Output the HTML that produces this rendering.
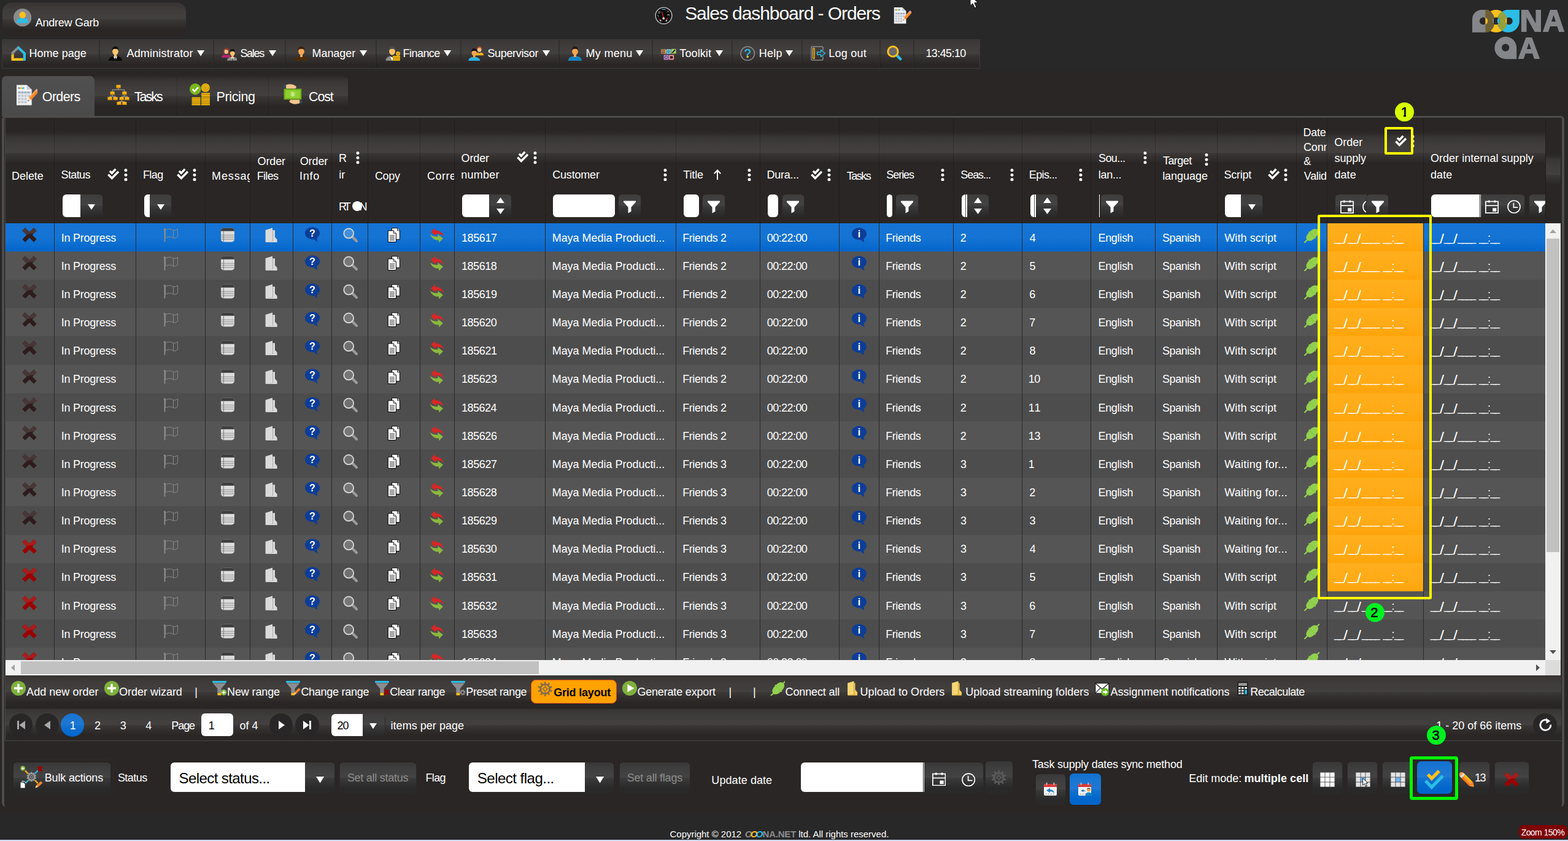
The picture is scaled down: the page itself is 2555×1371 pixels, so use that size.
<!DOCTYPE html>
<html lang="en"><head><meta charset="utf-8"><title>Sales dashboard - Orders</title>
<style>
*{box-sizing:border-box;margin:0;padding:0}
html,body{width:2555px;height:1371px;overflow:hidden;background:#282828}
body{position:relative;font-family:"Liberation Sans",sans-serif;color:#fff;font-size:18px}
div,svg{position:absolute}
.t{white-space:nowrap}
.hl{background-image:linear-gradient(to bottom,rgba(255,255,255,0) 0,rgba(255,255,255,.012) 5.5%,rgba(255,255,255,.07) 15%,rgba(255,255,255,.10) 30%,rgba(255,255,255,.12) 50%,rgba(255,255,255,.085) 50%,rgba(255,255,255,.04) 62%,rgba(255,255,255,0) 74%);background-repeat:no-repeat;background-position:50% 50%;background-size:100% 72px}
.btn{background-color:#2a2929;border-radius:7px;border:1px solid transparent}
.inp{background:#fff;border-radius:6px 0 0 6px}
.dm{width:120px;height:18px;font-size:18px;line-height:18px;white-space:nowrap}
.dm span{position:absolute;top:0}
.u{letter-spacing:-4.7px;top:-1px!important}
.m4{letter-spacing:-3.35px}
.m1,.m3{transform:scale(1.4,1.2);transform-origin:50% 2px}
.m0{left:0}.m1{left:16.4px}.m2{left:22.2px}.m3{left:38.4px}.m4{left:44.6px}.m5{left:79.2px}.m6{left:93.4px}.m7{left:97.9px}
svg text{font-family:"Liberation Sans",sans-serif}
</style></head>
<body>
<div style="left:0px;top:115px;width:2555px;height:1210px;background:#292625"></div>
<div style="left:0px;top:1369px;width:2555px;height:2px;background:#cddaf0"></div>
<div class="hl" style="left:4px;top:4px;width:299px;height:55px;border-radius:15px;background-color:#292625;background-position:50% 50%;background-size:100% 72px"></div>
<svg style="left:21.8px;top:13.8px" width="29.4" height="29.4" viewBox="0 0 30 30"><circle cx="15" cy="15" r="15" fill="#8a8b8f"/><circle cx="15" cy="10.6" r="5.4" fill="#fdc01e"/><path d="M5.6 24V21.5C5.6 18 8 16 11 16H19C22 16 24.4 18 24.4 21.5V24Z" fill="#2bbde6"/></svg>
<div class="t" style="left:57.7px;top:28px;font-size:18px;line-height:18px;letter-spacing:-0.25px;">Andrew Garb</div>
<svg style="left:1066.8px;top:11px" width="29" height="29" viewBox="0 0 30 30"><circle cx="15" cy="15" r="13.8" fill="#0c0c0c" stroke="#b4b4b4" stroke-width="1.6"/><circle cx="15" cy="15" r="10.6" fill="none" stroke="#555" stroke-width=".8" stroke-dasharray="1.4 2.2"/><path d="M11.6 8 14.6 19" stroke="#e02020" stroke-width="1.3"/><path d="M21.4 18.6 19.8 23" stroke="#e02020" stroke-width="1.2"/><path d="M7.6 20 9.6 23.4" stroke="#e02020" stroke-width="1.2"/><circle cx="14.8" cy="19.6" r="1.9" fill="#e8e8e8"/><circle cx="9.8" cy="23.4" r="1.4" fill="#ccc"/><circle cx="19.6" cy="23.4" r="1.4" fill="#ccc"/><circle cx="7.4" cy="9.6" r="1.5" fill="none" stroke="#ccc" stroke-width=".7"/><path d="M21 6.6 23.4 9M23.4 6.6 21 9" stroke="#ccc" stroke-width=".7"/><path d="M12 4.6H18" stroke="#6ab4e8" stroke-width="1.2"/><path d="M21 13.6H24.6" stroke="#ddd" stroke-width="1.2"/><path d="M5 14 6.6 17" stroke="#ddd" stroke-width=".8"/></svg>
<div class="t" style="left:1116.15px;top:7px;font-size:30px;line-height:30px;letter-spacing:-1.07px;">Sales dashboard - Orders</div>
<svg style="left:1456.4px;top:11.2px" width="28.4" height="28.4" viewBox="0 0 36 36"><path d="M1 1.4H18L26 9V35H1Z" fill="#f2f2f2"/><path d="M18 1.4V9H26Z" fill="#c9ced6"/><rect x="3.4" y="5.4" width="3.4" height="2.6" fill="#8b8c90"/><rect x="6.8" y="5.4" width="3.4" height="2.6" fill="#fdc01e"/><rect x="10.2" y="5.4" width="3.4" height="2.6" fill="#2bbde6"/><rect x="3.4" y="12.4" width="21" height="3.6" fill="#bfc6d0"/><g fill="#c3c8d0"><rect x="3.4" y="17.4" width="4" height="4"/><rect x="8.6" y="17.4" width="4" height="4"/><rect x="13.8" y="17.4" width="4" height="4"/><rect x="19" y="17.4" width="4" height="4"/><rect x="3.4" y="22.6" width="4" height="4"/><rect x="8.6" y="22.6" width="4" height="4"/><rect x="13.8" y="22.6" width="4" height="4"/><rect x="3.4" y="27.8" width="4" height="4"/><rect x="8.6" y="27.8" width="4" height="4"/><rect x="13.8" y="27.8" width="4" height="4"/></g><path d="M4.6 13.4H6.4M9.6 13.4H11.4M14.6 13.4H16.4M19.6 13.4H21.4" stroke="#5b82c4" stroke-width="1.6"/><g transform="rotate(42 27 20)"><rect x="24" y="8.6" width="6" height="17" fill="#f0852d"/><rect x="24" y="8.6" width="2" height="17" fill="#f7a65a"/><rect x="24" y="6" width="6" height="3.2" rx="1" fill="#f4a0a0"/><path d="M24 25.6H30L27 31.4Z" fill="#f3d2a0"/><path d="M26 29.4H28L27 31.4Z" fill="#444"/></g></svg>
<svg style="left:1579.5px;top:0px" width="19" height="14" viewBox="-1 0 19 14"><path d="M0 -8 0 9.4 3.9 5.7 7.2 12.8 10 11.6 6.8 4.6H12.4Z" fill="#fff" stroke="#111" stroke-width="1"/></svg>
<svg style="left:2399px;top:15.6px" width="152" height="82" viewBox="0 0 152 82"><text y="31" font-size="28" font-weight="bold" fill="#85868a"><tspan x="1">O</tspan><tspan x="28">O</tspan><tspan x="49">O</tspan></text><text x="77.5" y="35.1" font-size="51" font-weight="bold" fill="#85868a" stroke="#85868a" stroke-width="2" textLength="37" lengthAdjust="spacingAndGlyphs">N</text><text x="115" y="35.1" font-size="51" font-weight="bold" fill="#85868a" stroke="#85868a" stroke-width="2" textLength="35.2" lengthAdjust="spacingAndGlyphs">A</text><text x="44" y="72" font-size="24" font-weight="bold" fill="#85868a">Q</text><text x="74.8" y="79.2" font-size="48.8" font-weight="bold" fill="#85868a" stroke="#85868a" stroke-width="2" textLength="35.2" lengthAdjust="spacingAndGlyphs">A</text><path d="M0 36.8V15.5A15.5 15.5 0 0 1 15.5 0H22V36.8Z" fill="#85868a"/><circle cx="38.8" cy="18.4" r="18.4" fill="#fdc01e"/><path d="M76.8 0V18.4A18.4 18.4 0 0 1 58.4 36.8 18.4 18.4 0 0 1 40 18.4 18.4 18.4 0 0 1 58.4 0Z" fill="#2bbde6"/><path d="M21.3 0V36.8H26A18.4 18.4 0 0 0 36.3 18.4 18.4 18.4 0 0 0 26 0Z" fill="#6e5f34"/><path d="M48.6 2.8A18.4 18.4 0 0 0 40 18.4 18.4 18.4 0 0 0 48.6 34 18.4 18.4 0 0 0 57.2 18.4 18.4 18.4 0 0 0 48.6 2.8Z" fill="#95a03d"/><circle cx="17.9" cy="18.2" r="6" fill="#282828"/><circle cx="38.8" cy="18.2" r="6" fill="#282828"/><circle cx="59.7" cy="18.2" r="6" fill="#282828"/><path d="M21.3 12.6A6 6 0 0 1 21.3 23.8Z" fill="#fdc01e"/><path d="M35 13.6A6 6 0 0 0 35 22.8Z" fill="#85868a"/><path d="M42.4 13.5A6 6 0 0 1 42.4 22.9 8 8 0 0 1 42.4 13.5Z" fill="#2bbde6"/><path d="M56.4 13.2A6 6 0 0 0 56.4 23.2Z" fill="#fdc01e"/><path d="M72.2 80.2H54.6A18.2 18.2 0 0 1 36.4 62 18.2 18.2 0 0 1 54.6 43.8 18.2 18.2 0 0 1 72.2 62Z" fill="#85868a"/><circle cx="54.2" cy="61.6" r="6.1" fill="#282828"/></svg>
<div class="hl" style="left:3px;top:64px;width:1594px;height:48px;border:1px solid #3b3a3a;background-color:#292625;background-size:100% 72px"></div>
<div style="left:160.7px;top:65px;width:1px;height:46px;background:#302e2e"></div>
<div style="left:161.7px;top:65px;width:1px;height:46px;background:rgba(0,0,0,.18)"></div>
<div style="left:346.7px;top:65px;width:1px;height:46px;background:#302e2e"></div>
<div style="left:347.7px;top:65px;width:1px;height:46px;background:rgba(0,0,0,.18)"></div>
<div style="left:463.9px;top:65px;width:1px;height:46px;background:#302e2e"></div>
<div style="left:464.9px;top:65px;width:1px;height:46px;background:rgba(0,0,0,.18)"></div>
<div style="left:612px;top:65px;width:1px;height:46px;background:#302e2e"></div>
<div style="left:613px;top:65px;width:1px;height:46px;background:rgba(0,0,0,.18)"></div>
<div style="left:749.8px;top:65px;width:1px;height:46px;background:#302e2e"></div>
<div style="left:750.8px;top:65px;width:1px;height:46px;background:rgba(0,0,0,.18)"></div>
<div style="left:910px;top:65px;width:1px;height:46px;background:#302e2e"></div>
<div style="left:911px;top:65px;width:1px;height:46px;background:rgba(0,0,0,.18)"></div>
<div style="left:1061.7px;top:65px;width:1px;height:46px;background:#302e2e"></div>
<div style="left:1062.7px;top:65px;width:1px;height:46px;background:rgba(0,0,0,.18)"></div>
<div style="left:1192.1px;top:65px;width:1px;height:46px;background:#302e2e"></div>
<div style="left:1193.1px;top:65px;width:1px;height:46px;background:rgba(0,0,0,.18)"></div>
<div style="left:1305.9px;top:65px;width:1px;height:46px;background:#302e2e"></div>
<div style="left:1306.9px;top:65px;width:1px;height:46px;background:rgba(0,0,0,.18)"></div>
<div style="left:1433.3px;top:65px;width:1px;height:46px;background:#302e2e"></div>
<div style="left:1434.3px;top:65px;width:1px;height:46px;background:rgba(0,0,0,.18)"></div>
<div style="left:1488.2px;top:65px;width:1px;height:46px;background:#302e2e"></div>
<div style="left:1489.2px;top:65px;width:1px;height:46px;background:rgba(0,0,0,.18)"></div>
<svg style="left:17.6px;top:74.6px" width="24.5" height="24.5" viewBox="0 0 24.6 24.6"><path d="M.4 10.6 10.8 .8 12.6 .4 14.6 2.4 4.4 12.4 .4 15.4Z" fill="#8b8c90"/><path d="M12.6 .4 24.2 11.4V22.6C24.2 23.6 23.6 24.2 22.6 24.2H19.8V13L11 4.4 10.8 .8Z" fill="#2bbde6"/><path d="M.4 15.4 4.6 12.2V19.8H19.8V24.2H2C1 24.2 .4 23.6 .4 22.6Z" fill="#fdc01e"/></svg>
<div class="t" style="left:47.56px;top:78px;font-size:18px;line-height:18px;letter-spacing:0.02px;">Home page</div>
<svg style="left:175.8px;top:75px" width="24" height="24" viewBox="0 0 24 24"><path d="M1 24C1 19.5 4.5 17.6 8.6 16.6L12 18.6 15.4 16.6C19.5 17.6 23 19.5 23 24Z" fill="#0a0a0a"/><path d="M8.6 16.8 12 24 15.4 16.8 12 18.4Z" fill="#fff"/><path d="M11.3 19 12.7 19 13.2 24H10.8Z" fill="#111"/><rect x="10" y="13" width="4" height="5" fill="#f9c66f"/><ellipse cx="12" cy="8.6" rx="4.9" ry="6.2" fill="#f9c66f"/><path d="M6.9 8.2C6.2 3.5 8.5 .6 12 .6 15.5 .6 17.8 3.5 17.1 8.2 16.6 5.8 15.6 4.8 12 4.8 8.4 4.8 7.4 5.8 6.9 8.2Z" fill="#111"/></svg>
<div class="t" style="left:206.5px;top:78px;font-size:18px;line-height:18px;letter-spacing:0.16px;">Administrator</div>
<svg style="left:320.8px;top:82px" width="12.2" height="9.6" viewBox="0 0 12.2 9.6"><path d="M0 0H12.2L6.1 9.6Z" fill="#fff"/></svg>
<svg style="left:361.4px;top:75px" width="25" height="24" viewBox="0 0 25 24"><g transform="translate(-.6 2.2) scale(.7)"><path d="M1 24C1 19.5 4.5 17.6 8.6 16.6L12 18.6 15.4 16.6C19.5 17.6 23 19.5 23 24Z" fill="#b5256b"/><path d="M5 15C3.6 6 7 .6 12 .6 17 .6 20.4 6 19 15Z" fill="#8a3a2c"/><ellipse cx="12" cy="9.6" rx="4.6" ry="5.8" fill="#f6c18a"/><path d="M7 8C8 5 13 4.4 17 8 16.4 3.6 14 2.6 12 2.6 9.4 2.6 7.4 4 7 8Z" fill="#8a3a2c"/></g><g transform="translate(8.2 4.6) scale(.8)"><path d="M1 24C1 19.5 4.5 17.6 8.6 16.6L12 18.6 15.4 16.6C19.5 17.6 23 19.5 23 24Z" fill="#8f8f8f"/><path d="M8.6 16.8 12 24 15.4 16.8 12 18.4Z" fill="#fff"/><path d="M11.3 19 12.7 19 13.2 24H10.8Z" fill="#444"/><rect x="10" y="13" width="4" height="5" fill="#f6c16d"/><ellipse cx="12" cy="8.6" rx="4.9" ry="6.2" fill="#f6c16d"/><path d="M6.9 8.2C6.2 3.5 8.5 .6 12 .6 15.5 .6 17.8 3.5 17.1 8.2 16.6 5.8 15.6 4.8 12 4.8 8.4 4.8 7.4 5.8 6.9 8.2Z" fill="#111"/></g></svg>
<div class="t" style="left:391.39px;top:78px;font-size:18px;line-height:18px;letter-spacing:-1.28px;">Sales</div>
<svg style="left:437.8px;top:82px" width="12.2" height="9.6" viewBox="0 0 12.2 9.6"><path d="M0 0H12.2L6.1 9.6Z" fill="#fff"/></svg>
<svg style="left:478.6px;top:75px" width="24" height="24" viewBox="0 0 24 24"><path d="M1 24C1 19.5 4.5 17.6 8.6 16.6L12 18.6 15.4 16.6C19.5 17.6 23 19.5 23 24Z" fill="#4a2c0a"/><rect x="10" y="13" width="4" height="5" fill="#f2a654"/><ellipse cx="12" cy="8.6" rx="4.9" ry="6.2" fill="#f2a654"/><path d="M6.9 8.2C6.2 3.5 8.5 .6 12 .6 15.5 .6 17.8 3.5 17.1 8.2 16.6 5.8 15.6 4.8 12 4.8 8.4 4.8 7.4 5.8 6.9 8.2Z" fill="#3b2211"/></svg>
<div class="t" style="left:508.56px;top:78px;font-size:18px;line-height:18px;letter-spacing:-0.07px;">Manager</div>
<svg style="left:586.1px;top:82px" width="12.2" height="9.6" viewBox="0 0 12.2 9.6"><path d="M0 0H12.2L6.1 9.6Z" fill="#fff"/></svg>
<svg style="left:627.6px;top:75px" width="24" height="24" viewBox="0 0 24 24"><path d="M.6 24C.6 19.5 3.5 17.6 7.6 16.6L11 18.6 14.4 16.6C18.5 17.6 21 19.5 21 24Z" fill="#8a8a8a"/><path d="M7.6 16.8 11 24 14.4 16.8 11 18.4Z" fill="#fff"/><ellipse cx="11" cy="8.6" rx="4.9" ry="6.2" fill="#f6c16d"/><path d="M5.9 8.2C5.2 3.5 7.5 .6 11 .6 14.5 .6 16.8 3.5 16.1 8.2 15.6 5.8 14.6 4.8 11 4.8 7.4 4.8 6.4 5.8 5.9 8.2Z" fill="#4a4a4a"/><rect x="12" y="16" width="12" height="8" fill="#e8b10f"/><path d="M12 18.6H24M12 21.2H24" stroke="#b98500" stroke-width=".9"/><circle cx="20.6" cy="12.4" r="3.4" fill="#f3c11c"/><circle cx="20.6" cy="12.4" r="1.6" fill="#c99400"/></svg>
<div class="t" style="left:656.56px;top:78px;font-size:18px;line-height:18px;letter-spacing:-0.54px;">Finance</div>
<svg style="left:723.2px;top:82px" width="12.2" height="9.6" viewBox="0 0 12.2 9.6"><path d="M0 0H12.2L6.1 9.6Z" fill="#fff"/></svg>
<svg style="left:763px;top:75px" width="25" height="24" viewBox="0 0 25 24"><g transform="translate(10.5 0) scale(.64)"><path d="M1 24C1 19.5 4.5 17.6 8.6 16.6L12 18.6 15.4 16.6C19.5 17.6 23 19.5 23 24Z" fill="#f2b31d"/><ellipse cx="12" cy="9" rx="5" ry="6.2" fill="#f6c18a"/><path d="M5.6 13C4.6 5 7.5 .6 12 .6 16.5 .6 19.4 5 18.4 13 17.4 7 16 5.2 12 5.2 8 5.2 6.6 7 5.6 13Z" fill="#b3542e"/></g><g transform="translate(-.6 3.6) scale(.86)"><path d="M1 24C1 19.5 4.5 17.6 8.6 16.6L12 18.6 15.4 16.6C19.5 17.6 23 19.5 23 24Z" fill="#27b5e3"/><rect x="10" y="13" width="4" height="5" fill="#f2a654"/><ellipse cx="12" cy="8.6" rx="4.9" ry="6.2" fill="#f2a654"/><path d="M6.9 8.2C6.2 3.5 8.5 .6 12 .6 15.5 .6 17.8 3.5 17.1 8.2 16.6 5.8 15.6 4.8 12 4.8 8.4 4.8 7.4 5.8 6.9 8.2Z" fill="#111"/></g></svg>
<div class="t" style="left:794.39px;top:78px;font-size:18px;line-height:18px;letter-spacing:-0.33px;">Supervisor</div>
<svg style="left:883.8px;top:82px" width="12.2" height="9.6" viewBox="0 0 12.2 9.6"><path d="M0 0H12.2L6.1 9.6Z" fill="#fff"/></svg>
<svg style="left:925px;top:75px" width="24" height="24" viewBox="0 0 24 24"><path d="M1 24C1 19.5 4.5 17.6 8.6 16.6L12 18.6 15.4 16.6C19.5 17.6 23 19.5 23 24Z" fill="#1583c4"/><rect x="10" y="13" width="4" height="5" fill="#f2a654"/><ellipse cx="12" cy="8.6" rx="4.9" ry="6.2" fill="#f2a654"/><path d="M6.9 8.2C6.2 3.5 8.5 .6 12 .6 15.5 .6 17.8 3.5 17.1 8.2 16.6 5.8 15.6 4.8 12 4.8 8.4 4.8 7.4 5.8 6.9 8.2Z" fill="#2a1a10"/></svg>
<div class="t" style="left:954.56px;top:78px;font-size:18px;line-height:18px;letter-spacing:0.29px;">My menu</div>
<svg style="left:1036.2px;top:82px" width="12.2" height="9.6" viewBox="0 0 12.2 9.6"><path d="M0 0H12.2L6.1 9.6Z" fill="#fff"/></svg>
<svg style="left:1076.6px;top:77.5px" width="25" height="22" viewBox="0 0 25 22"><rect x=".4" y="2.2" width="7.6" height="7.6" rx="1" fill="#f2a45a"/><rect x="8.6" y="2.2" width="7.6" height="7.6" rx="1" fill="#7fd3e6"/><rect x="16.8" y="1.8" width="7.8" height="7.6" rx="1" fill="#a6d65a"/><path d="M18.4 8 23 3.2" stroke="#111" stroke-width="2"/><rect x="4.6" y="11.4" width="7.6" height="8" rx="1" fill="#b48ad6"/><circle cx="8.4" cy="15.4" r="2.2" fill="none" stroke="#333" stroke-width=".9"/><rect x="12.8" y="11.4" width="8.4" height="8" rx="1" fill="#f08a9a"/><rect x="14.8" y="13.6" width="4.4" height="3.8" fill="#111"/><rect x="2" y="3.6" width="3.8" height="5" fill="none" stroke="#333" stroke-width=".8"/><path d="M2.6 5.4H5.2M2.6 7H5.2" stroke="#333" stroke-width=".7"/><circle cx="12.4" cy="6" r="2" fill="none" stroke="#2a6f80" stroke-width=".8"/><path d="M10 6H14.8M12.4 3.6V8.4" stroke="#2a6f80" stroke-width=".6"/></svg>
<div class="t" style="left:1107.34px;top:78px;font-size:18px;line-height:18px;letter-spacing:0.1px;">Toolkit</div>
<svg style="left:1166px;top:82px" width="12.2" height="9.6" viewBox="0 0 12.2 9.6"><path d="M0 0H12.2L6.1 9.6Z" fill="#fff"/></svg>
<svg style="left:1206.4px;top:74.8px" width="24.5" height="24.5" viewBox="0 0 24 24"><circle cx="12" cy="12" r="11" fill="none" stroke="#8b8c90" stroke-width="1.4"/><text x="12" y="18.4" font-size="19" fill="#2bbde6" stroke="#2bbde6" stroke-width=".4" text-anchor="middle">?</text><circle cx="12" cy="17.2" r="1.7" fill="#fdc01e"/></svg>
<div class="t" style="left:1236.66px;top:78px;font-size:18px;line-height:18px;letter-spacing:0.26px;">Help</div>
<svg style="left:1280px;top:82px" width="12.2" height="9.6" viewBox="0 0 12.2 9.6"><path d="M0 0H12.2L6.1 9.6Z" fill="#fff"/></svg>
<svg style="left:1320.6px;top:75px" width="24.5" height="24" viewBox="0 0 24.5 24"><path d="M20 7V2.6C20 1.6 19.4 1 18.4 1H2.6C1.6 1 1 1.6 1 2.6V21.4C1 22.4 1.6 23 2.6 23H18.4C19.4 23 20 22.4 20 21.4V17" fill="none" stroke="#8b8c90" stroke-width="1.5"/><rect x="3.6" y="3.4" width="2.6" height="17.2" rx="1" fill="none" stroke="#fdc01e" stroke-width="1.3"/><path d="M10.6 10H16.6V6.4L23.4 12 16.6 17.6V14H10.6Z" fill="none" stroke="#2bbde6" stroke-width="1.4" stroke-linejoin="round"/></svg>
<div class="t" style="left:1350.36px;top:78px;font-size:18px;line-height:18px;letter-spacing:0.23px;">Log out</div>
<svg style="left:1445.4px;top:74px" width="25" height="25" viewBox="0 0 25 25"><path d="M16.6 16.6 22.2 22.2" stroke="#2bbde6" stroke-width="4.4" stroke-linecap="round"/><circle cx="10" cy="10" r="8.2" fill="rgba(255,255,255,.22)" stroke="#fdc01e" stroke-width="3"/></svg>
<div class="t" style="left:1508.45px;top:78px;font-size:18px;line-height:18px;letter-spacing:-0.59px;">13:45:10</div>
<div class="hl" style="left:154px;top:124px;width:413px;height:65px;border-radius:0 6px 0 0;background-color:#292625;background-size:100% 72px;background-position:50% 50%"></div>
<div style="left:287.7px;top:126px;width:1px;height:63px;background:rgba(0,0,0,.15)"></div>
<div style="left:436.8px;top:126px;width:1px;height:63px;background:rgba(0,0,0,.15)"></div>
<div style="left:3px;top:124px;width:151px;height:66px;border-radius:7px 7px 0 0;background:linear-gradient(to bottom,#505050,#4a4a4a)"></div>
<svg style="left:25.6px;top:136.6px" width="35.6" height="35.6" viewBox="0 0 36 36"><path d="M1 1.4H18L26 9V35H1Z" fill="#f2f2f2"/><path d="M18 1.4V9H26Z" fill="#c9ced6"/><rect x="3.4" y="5.4" width="3.4" height="2.6" fill="#8b8c90"/><rect x="6.8" y="5.4" width="3.4" height="2.6" fill="#fdc01e"/><rect x="10.2" y="5.4" width="3.4" height="2.6" fill="#2bbde6"/><rect x="3.4" y="12.4" width="21" height="3.6" fill="#bfc6d0"/><g fill="#c3c8d0"><rect x="3.4" y="17.4" width="4" height="4"/><rect x="8.6" y="17.4" width="4" height="4"/><rect x="13.8" y="17.4" width="4" height="4"/><rect x="19" y="17.4" width="4" height="4"/><rect x="3.4" y="22.6" width="4" height="4"/><rect x="8.6" y="22.6" width="4" height="4"/><rect x="13.8" y="22.6" width="4" height="4"/><rect x="3.4" y="27.8" width="4" height="4"/><rect x="8.6" y="27.8" width="4" height="4"/><rect x="13.8" y="27.8" width="4" height="4"/></g><path d="M4.6 13.4H6.4M9.6 13.4H11.4M14.6 13.4H16.4M19.6 13.4H21.4" stroke="#5b82c4" stroke-width="1.6"/><g transform="rotate(42 27 20)"><rect x="24" y="8.6" width="6" height="17" fill="#f0852d"/><rect x="24" y="8.6" width="2" height="17" fill="#f7a65a"/><rect x="24" y="6" width="6" height="3.2" rx="1" fill="#f4a0a0"/><path d="M24 25.6H30L27 31.4Z" fill="#f3d2a0"/><path d="M26 29.4H28L27 31.4Z" fill="#444"/></g></svg>
<div class="t" style="left:68.83px;top:148px;font-size:21.5px;line-height:21.5px;letter-spacing:-0.67px;">Orders</div>
<svg style="left:175px;top:137.6px" width="36" height="33.4" viewBox="0 0 36 34"><path d="M18 5V8.4M8 13V8.4H28V13M8 17V19.4M3.6 22V19.4H13V22M28 17V19.4M23.4 22V19.4H32.4V22M23.4 25V28M19 31V28H28V31" fill="none" stroke="#a9a9a9" stroke-width="1"/><rect x="14.4" y="0.3999999999999999" width="7.2" height="5.2" fill="#f5b318"/><rect x="14.4" y="4.2" width="7.2" height="1.4" fill="#d28f00"/><rect x="4.4" y="11.4" width="7.2" height="5.2" fill="#f5b318"/><rect x="4.4" y="15.2" width="7.2" height="1.4" fill="#d28f00"/><rect x="24.4" y="11.4" width="7.2" height="5.2" fill="#f5b318"/><rect x="24.4" y="15.2" width="7.2" height="1.4" fill="#d28f00"/><rect x="0.19999999999999973" y="20.4" width="7.2" height="5.2" fill="#f5b318"/><rect x="0.19999999999999973" y="24.2" width="7.2" height="1.4" fill="#d28f00"/><rect x="9.4" y="20.4" width="7.2" height="5.2" fill="#f5b318"/><rect x="9.4" y="24.2" width="7.2" height="1.4" fill="#d28f00"/><rect x="19.799999999999997" y="20.4" width="7.2" height="5.2" fill="#f5b318"/><rect x="19.799999999999997" y="24.2" width="7.2" height="1.4" fill="#d28f00"/><rect x="28.6" y="20.4" width="7.2" height="5.2" fill="#f5b318"/><rect x="28.6" y="24.2" width="7.2" height="1.4" fill="#d28f00"/><rect x="15.4" y="28.4" width="7.2" height="5.2" fill="#f5b318"/><rect x="15.4" y="32.2" width="7.2" height="1.4" fill="#d28f00"/><rect x="24.4" y="28.4" width="7.2" height="5.2" fill="#f5b318"/><rect x="24.4" y="32.2" width="7.2" height="1.4" fill="#d28f00"/></svg>
<div class="t" style="left:218.67px;top:148px;font-size:21.5px;line-height:21.5px;letter-spacing:-1.94px;">Tasks</div>
<svg style="left:309px;top:136px" width="33" height="36" viewBox="0 0 33 36"><rect x="3.6" y="32.6" width="14" height="3" rx=".6" fill="#f2b90f"/><rect x="3.6" y="34.5" width="14" height="1.1" fill="#c28e00"/><rect x="3.6" y="29.200000000000003" width="14" height="3" rx=".6" fill="#f2b90f"/><rect x="3.6" y="31.1" width="14" height="1.1" fill="#c28e00"/><rect x="3.6" y="25.8" width="14" height="3" rx=".6" fill="#f2b90f"/><rect x="3.6" y="27.7" width="14" height="1.1" fill="#c28e00"/><rect x="3.6" y="22.400000000000002" width="14" height="3" rx=".6" fill="#f2b90f"/><rect x="3.6" y="24.3" width="14" height="1.1" fill="#c28e00"/><rect x="19" y="32.6" width="14" height="3" rx=".6" fill="#f2b90f"/><rect x="19" y="34.5" width="14" height="1.1" fill="#c28e00"/><rect x="19" y="29.200000000000003" width="14" height="3" rx=".6" fill="#f2b90f"/><rect x="19" y="31.1" width="14" height="1.1" fill="#c28e00"/><rect x="19" y="25.8" width="14" height="3" rx=".6" fill="#f2b90f"/><rect x="19" y="27.7" width="14" height="1.1" fill="#c28e00"/><rect x="19" y="22.400000000000002" width="14" height="3" rx=".6" fill="#f2b90f"/><rect x="19" y="24.3" width="14" height="1.1" fill="#c28e00"/><rect x="19" y="19.0" width="14" height="3" rx=".6" fill="#f2b90f"/><rect x="19" y="20.9" width="14" height="1.1" fill="#c28e00"/><rect x="19" y="15.600000000000001" width="14" height="3" rx=".6" fill="#f2b90f"/><rect x="19" y="17.5" width="14" height="1.1" fill="#c28e00"/><circle cx="25.8" cy="7" r="7" fill="#f2b90f"/><circle cx="25.8" cy="7" r="4.8" fill="none" stroke="#c28e00" stroke-width="1"/><text x="25.8" y="10" font-size="8" font-weight="bold" fill="#c28e00" text-anchor="middle">$</text><circle cx="9.2" cy="9.2" r="9.2" fill="#7ab51d"/><path d="M4.6 9.4 8 12.8 14 6.4" fill="none" stroke="#fff" stroke-width="2.6"/></svg>
<div class="t" style="left:352.58px;top:148px;font-size:21.5px;line-height:21.5px;letter-spacing:-0.37px;">Pricing</div>
<svg style="left:458.6px;top:137.2px" width="36.4" height="33.2" viewBox="0 0 36 33"><path d="M3 1H7V6H3Z" fill="#33475b"/><path d="M7 1.6C13 -.6 19 0 24 4.4L22 7.5H7Z" fill="#f3c58d"/><path d="M33 31.6H29V26.6H33Z" fill="#33475b"/><path d="M29 31C23 33.4 17 33 12 28.6L14 25.4H29Z" fill="#f3c58d"/><rect x="3.4" y="7.6" width="28.6" height="17.6" fill="#6fae1e"/><rect x="5.6" y="9.8" width="24.2" height="13.2" fill="#8fd02f"/><circle cx="17.7" cy="16.4" r="4.6" fill="#a6dc55"/><text x="17.7" y="19.2" font-size="8" fill="#e8f7cf" text-anchor="middle">$</text></svg>
<div class="t" style="left:503.03px;top:148px;font-size:21.5px;line-height:21.5px;letter-spacing:-1.13px;">Cost</div>
<div style="left:3px;top:189px;width:2545.6px;height:1126px;border:solid #4c4c4c;border-width:3px 4px 0 4px;border-radius:6px;background:#292625"></div>
<div style="left:8px;top:193px;width:1px;height:908px;background:#484646"></div>
<div style="left:9px;top:192px;width:2535px;height:172px;background:#292625"></div>
<div class="hl" style="left:9px;top:193px;width:2509px;height:112px;"></div>
<div class="hl" style="left:2519px;top:193px;width:24px;height:171px;background-position:50% 56px"></div>
<div style="left:88px;top:193px;width:1px;height:171px;background:rgba(0,0,0,.22)"></div>
<div style="left:221px;top:193px;width:1px;height:171px;background:rgba(0,0,0,.22)"></div>
<div style="left:334px;top:193px;width:1px;height:171px;background:rgba(0,0,0,.22)"></div>
<div style="left:407px;top:193px;width:1px;height:171px;background:rgba(0,0,0,.22)"></div>
<div style="left:477px;top:193px;width:1px;height:171px;background:rgba(0,0,0,.22)"></div>
<div style="left:540px;top:193px;width:1px;height:171px;background:rgba(0,0,0,.22)"></div>
<div style="left:599px;top:193px;width:1px;height:171px;background:rgba(0,0,0,.22)"></div>
<div style="left:684px;top:193px;width:1px;height:171px;background:rgba(0,0,0,.22)"></div>
<div style="left:740px;top:193px;width:1px;height:171px;background:rgba(0,0,0,.22)"></div>
<div style="left:888px;top:193px;width:1px;height:171px;background:rgba(0,0,0,.22)"></div>
<div style="left:1101px;top:193px;width:1px;height:171px;background:rgba(0,0,0,.22)"></div>
<div style="left:1238px;top:193px;width:1px;height:171px;background:rgba(0,0,0,.22)"></div>
<div style="left:1367px;top:193px;width:1px;height:171px;background:rgba(0,0,0,.22)"></div>
<div style="left:1432px;top:193px;width:1px;height:171px;background:rgba(0,0,0,.22)"></div>
<div style="left:1553px;top:193px;width:1px;height:171px;background:rgba(0,0,0,.22)"></div>
<div style="left:1665px;top:193px;width:1px;height:171px;background:rgba(0,0,0,.22)"></div>
<div style="left:1777px;top:193px;width:1px;height:171px;background:rgba(0,0,0,.22)"></div>
<div style="left:1882px;top:193px;width:1px;height:171px;background:rgba(0,0,0,.22)"></div>
<div style="left:1983px;top:193px;width:1px;height:171px;background:rgba(0,0,0,.22)"></div>
<div style="left:2112px;top:193px;width:1px;height:171px;background:rgba(0,0,0,.22)"></div>
<div style="left:2162px;top:193px;width:1px;height:171px;background:rgba(0,0,0,.22)"></div>
<div style="left:2319px;top:193px;width:1px;height:171px;background:rgba(0,0,0,.22)"></div>
<div style="left:2518px;top:193px;width:1px;height:171px;background:rgba(0,0,0,.22)"></div>
<div class="t" style="left:19.06px;top:278px;font-size:18px;line-height:18px;letter-spacing:-0.06px;">Delete</div>
<div class="t" style="left:99.49px;top:276px;font-size:18px;line-height:18px;letter-spacing:-0.6px;">Status</div>
<svg style="left:174.9px;top:273.8px" width="19.4" height="19.4" viewBox="0 0 19.4 19.4"><path d="M3.9 4.8 7.3 8.2 13.4 1.6" fill="none" stroke="#fff" stroke-width="3.5"/><path d="M1.4 10.6 7.3 16.5 18 5.8" fill="none" stroke="#fff" stroke-width="3.5"/></svg>
<svg style="left:201.6px;top:274.7px" width="6" height="20.4" viewBox="0 0 6 20.4"><circle cx="3" cy="2.6" r="2.5" fill="#fff"/><circle cx="3" cy="10.2" r="2.5" fill="#fff"/><circle cx="3" cy="17.8" r="2.5" fill="#fff"/></svg>
<div class="t" style="left:232.96px;top:276px;font-size:18px;line-height:18px;letter-spacing:-0.61px;">Flag</div>
<svg style="left:287.9px;top:273.8px" width="19.4" height="19.4" viewBox="0 0 19.4 19.4"><path d="M3.9 4.8 7.3 8.2 13.4 1.6" fill="none" stroke="#fff" stroke-width="3.5"/><path d="M1.4 10.6 7.3 16.5 18 5.8" fill="none" stroke="#fff" stroke-width="3.5"/></svg>
<svg style="left:314px;top:274.7px" width="6" height="20.4" viewBox="0 0 6 20.4"><circle cx="3" cy="2.6" r="2.5" fill="#fff"/><circle cx="3" cy="10.2" r="2.5" fill="#fff"/><circle cx="3" cy="17.8" r="2.5" fill="#fff"/></svg>
<div style="left:335px;top:270px;width:72px;height:30px;overflow:hidden"><div class="t" style="left:10.06px;top:8px;font-size:18px;line-height:18px;letter-spacing:0.86px;">Messages</div></div>
<div class="t" style="left:419.49px;top:254px;font-size:18px;line-height:18px;letter-spacing:-0.1px;">Order</div>
<div class="t" style="left:418.86px;top:278px;font-size:18px;line-height:18px;letter-spacing:-0.74px;">Files</div>
<div class="t" style="left:488.69px;top:254px;font-size:18px;line-height:18px;letter-spacing:-0.1px;">Order</div>
<div class="t" style="left:487.88px;top:278px;font-size:18px;line-height:18px;letter-spacing:0.78px;">Info</div>
<div style="left:541px;top:240px;width:58px;height:60px;overflow:hidden"><div class="t" style="left:10.96px;top:9px;font-size:18px;line-height:18px;">R</div><div class="t" style="left:11.23px;top:36px;font-size:18px;line-height:18px;">ir</div></div>
<svg style="left:579.8px;top:247.2px" width="6" height="20.4" viewBox="0 0 6 20.4"><circle cx="3" cy="2.6" r="2.5" fill="#fff"/><circle cx="3" cy="10.2" r="2.5" fill="#fff"/><circle cx="3" cy="17.8" r="2.5" fill="#fff"/></svg>
<div class="t" style="left:611px;top:278px;font-size:18px;line-height:18px;letter-spacing:-0.38px;">Copy</div>
<div style="left:685px;top:270px;width:55px;height:30px;overflow:hidden"><div class="t" style="left:10.9px;top:8px;font-size:18px;line-height:18px;letter-spacing:0.5px;">Correct</div></div>
<div class="t" style="left:751.49px;top:249px;font-size:18px;line-height:18px;letter-spacing:-0.1px;">Order</div>
<div class="t" style="left:751.13px;top:276px;font-size:18px;line-height:18px;letter-spacing:0.28px;">number</div>
<svg style="left:841.9px;top:245.8px" width="19.4" height="19.4" viewBox="0 0 19.4 19.4"><path d="M3.9 4.8 7.3 8.2 13.4 1.6" fill="none" stroke="#fff" stroke-width="3.5"/><path d="M1.4 10.6 7.3 16.5 18 5.8" fill="none" stroke="#fff" stroke-width="3.5"/></svg>
<svg style="left:868.5px;top:247.2px" width="6" height="20.4" viewBox="0 0 6 20.4"><circle cx="3" cy="2.6" r="2.5" fill="#fff"/><circle cx="3" cy="10.2" r="2.5" fill="#fff"/><circle cx="3" cy="17.8" r="2.5" fill="#fff"/></svg>
<div class="t" style="left:900.2px;top:276px;font-size:18px;line-height:18px;letter-spacing:-0.19px;">Customer</div>
<svg style="left:1081.2px;top:274.7px" width="6" height="20.4" viewBox="0 0 6 20.4"><circle cx="3" cy="2.6" r="2.5" fill="#fff"/><circle cx="3" cy="10.2" r="2.5" fill="#fff"/><circle cx="3" cy="17.8" r="2.5" fill="#fff"/></svg>
<div class="t" style="left:1113.24px;top:276px;font-size:18px;line-height:18px;letter-spacing:-0.14px;">Title</div>
<svg style="left:1162.6px;top:276px" width="12" height="17" viewBox="0 0 12 17"><path d="M6 0 12 6.4 10.6 7.8 7 4.2V17H5V4.2L1.4 7.8 0 6.4Z" fill="#fff"/></svg>
<svg style="left:1218.3px;top:274.7px" width="6" height="20.4" viewBox="0 0 6 20.4"><circle cx="3" cy="2.6" r="2.5" fill="#fff"/><circle cx="3" cy="10.2" r="2.5" fill="#fff"/><circle cx="3" cy="17.8" r="2.5" fill="#fff"/></svg>
<div class="t" style="left:1249.56px;top:276px;font-size:18px;line-height:18px;letter-spacing:-0.27px;">Dura...</div>
<svg style="left:1321.3px;top:273.8px" width="19.4" height="19.4" viewBox="0 0 19.4 19.4"><path d="M3.9 4.8 7.3 8.2 13.4 1.6" fill="none" stroke="#fff" stroke-width="3.5"/><path d="M1.4 10.6 7.3 16.5 18 5.8" fill="none" stroke="#fff" stroke-width="3.5"/></svg>
<svg style="left:1347.7px;top:274.7px" width="6" height="20.4" viewBox="0 0 6 20.4"><circle cx="3" cy="2.6" r="2.5" fill="#fff"/><circle cx="3" cy="10.2" r="2.5" fill="#fff"/><circle cx="3" cy="17.8" r="2.5" fill="#fff"/></svg>
<div class="t" style="left:1379.74px;top:278px;font-size:18px;line-height:18px;letter-spacing:-1.53px;">Tasks</div>
<div class="t" style="left:1444.19px;top:276px;font-size:18px;line-height:18px;letter-spacing:-1.02px;">Series</div>
<svg style="left:1533.3px;top:274.7px" width="6" height="20.4" viewBox="0 0 6 20.4"><circle cx="3" cy="2.6" r="2.5" fill="#fff"/><circle cx="3" cy="10.2" r="2.5" fill="#fff"/><circle cx="3" cy="17.8" r="2.5" fill="#fff"/></svg>
<div class="t" style="left:1565.29px;top:276px;font-size:18px;line-height:18px;letter-spacing:-1.07px;">Seas...</div>
<svg style="left:1646.1px;top:274.7px" width="6" height="20.4" viewBox="0 0 6 20.4"><circle cx="3" cy="2.6" r="2.5" fill="#fff"/><circle cx="3" cy="10.2" r="2.5" fill="#fff"/><circle cx="3" cy="17.8" r="2.5" fill="#fff"/></svg>
<div class="t" style="left:1676.76px;top:276px;font-size:18px;line-height:18px;letter-spacing:-0.61px;">Epis...</div>
<svg style="left:1757.9px;top:274.7px" width="6" height="20.4" viewBox="0 0 6 20.4"><circle cx="3" cy="2.6" r="2.5" fill="#fff"/><circle cx="3" cy="10.2" r="2.5" fill="#fff"/><circle cx="3" cy="17.8" r="2.5" fill="#fff"/></svg>
<div class="t" style="left:1790.09px;top:249px;font-size:18px;line-height:18px;letter-spacing:-0.62px;">Sou...</div>
<div class="t" style="left:1789.73px;top:276px;font-size:18px;line-height:18px;letter-spacing:-0.23px;">lan...</div>
<svg style="left:1862.7px;top:247.2px" width="6" height="20.4" viewBox="0 0 6 20.4"><circle cx="3" cy="2.6" r="2.5" fill="#fff"/><circle cx="3" cy="10.2" r="2.5" fill="#fff"/><circle cx="3" cy="17.8" r="2.5" fill="#fff"/></svg>
<div class="t" style="left:1894.94px;top:253px;font-size:18px;line-height:18px;letter-spacing:-0.56px;">Target</div>
<div class="t" style="left:1894.13px;top:278px;font-size:18px;line-height:18px;letter-spacing:-0.03px;">language</div>
<svg style="left:1963px;top:250.2px" width="6" height="20.4" viewBox="0 0 6 20.4"><circle cx="3" cy="2.6" r="2.5" fill="#fff"/><circle cx="3" cy="10.2" r="2.5" fill="#fff"/><circle cx="3" cy="17.8" r="2.5" fill="#fff"/></svg>
<div class="t" style="left:1994.49px;top:276px;font-size:18px;line-height:18px;letter-spacing:-0.24px;">Script</div>
<svg style="left:2065.7px;top:273.8px" width="19.4" height="19.4" viewBox="0 0 19.4 19.4"><path d="M3.9 4.8 7.3 8.2 13.4 1.6" fill="none" stroke="#fff" stroke-width="3.5"/><path d="M1.4 10.6 7.3 16.5 18 5.8" fill="none" stroke="#fff" stroke-width="3.5"/></svg>
<svg style="left:2092.2px;top:274.7px" width="6" height="20.4" viewBox="0 0 6 20.4"><circle cx="3" cy="2.6" r="2.5" fill="#fff"/><circle cx="3" cy="10.2" r="2.5" fill="#fff"/><circle cx="3" cy="17.8" r="2.5" fill="#fff"/></svg>
<div style="left:2113px;top:200px;width:49px;height:100px;overflow:hidden"><div class="t" style="left:10.46px;top:7px;font-size:18px;line-height:18px;letter-spacing:-0.26px;">Date</div><div class="t" style="left:11px;top:31px;font-size:18px;line-height:18px;letter-spacing:-0.18px;">Connect</div><div class="t" style="left:11.27px;top:54px;font-size:18px;line-height:18px;">&amp;</div><div class="t" style="left:11.86px;top:78px;font-size:18px;line-height:18px;letter-spacing:-0.37px;">Valid</div></div>
<div class="t" style="left:2174.29px;top:223px;font-size:18px;line-height:18px;letter-spacing:-0.03px;">Order</div>
<div class="t" style="left:2174.61px;top:249px;font-size:18px;line-height:18px;letter-spacing:-0.15px;">supply</div>
<div class="t" style="left:2174.38px;top:276px;font-size:18px;line-height:18px;letter-spacing:0.09px;">date</div>
<svg style="left:2299.4px;top:219.8px" width="6" height="20.4" viewBox="0 0 6 20.4"><circle cx="3" cy="2.6" r="2.5" fill="#fff"/><circle cx="3" cy="10.2" r="2.5" fill="#fff"/><circle cx="3" cy="17.8" r="2.5" fill="#fff"/></svg>
<div class="t" style="left:2330.89px;top:249px;font-size:18px;line-height:18px;letter-spacing:0.04px;">Order internal supply</div>
<div class="t" style="left:2330.98px;top:276px;font-size:18px;line-height:18px;letter-spacing:0.09px;">date</div>
<div style="left:101.8px;top:317px;width:66.2px;height:37px;"><div class="btn hl" style="left:0;top:0;width:66.2px;height:37px;background-size:100% 72px"></div><div class="inp" style="left:0;top:0;width:28.9px;height:37px"></div><svg style="left:41.55px;top:15.5px" width="12" height="9" viewBox="0 0 12 9"><path d="M0 0H12L6.0 9Z" fill="#fff"/></svg></div>
<div style="left:234.5px;top:317px;width:45.5px;height:37px;"><div class="btn hl" style="left:0;top:0;width:45.5px;height:37px;background-size:100% 72px"></div><div class="inp" style="left:0;top:0;width:9.3px;height:37px"></div><svg style="left:21.4px;top:15.5px" width="12" height="9" viewBox="0 0 12 9"><path d="M0 0H12L6.0 9Z" fill="#fff"/></svg></div>
<div style="left:541px;top:317px;width:58px;height:37px;overflow:hidden"><div class="t" style="left:11.06px;top:11px;font-size:18px;line-height:18px;letter-spacing:-3.87px;">RT</div><div class="t" style="left:44.56px;top:11px;font-size:18px;line-height:18px;">N</div><div style="left:33px;top:10.5px;width:16px;height:16px;border-radius:8px;background:#fff"></div></div>
<div style="left:752.5px;top:317px;width:81.8px;height:37px;"><div class="btn hl" style="left:0;top:0;width:81.8px;height:37px;background-size:100% 72px"></div><div class="inp" style="left:0;top:0;width:44.2px;height:37px"></div><svg style="left:56.5px;top:5.4px" width="13" height="9" viewBox="0 0 13 9"><path d="M0 9H13L6.5 0Z" fill="#fff"/></svg><svg style="left:56.5px;top:23px" width="13" height="9" viewBox="0 0 13 9"><path d="M0 0H13L6.5 9Z" fill="#fff"/></svg></div>
<div style="left:900.9px;top:317px;width:101.1px;height:37px;background:#fff;border-radius:6px"></div>
<div style="left:1007.4px;top:317px;width:37.2px;height:37px;overflow:hidden"><div class="btn hl" style="left:0;top:0;width:37.2px;height:37px;background-size:100% 72px"></div><svg style="left:8.9px;top:10.2px" width="20" height="21.11" viewBox="0 0 18 19"><path d="M0 .5H18V2.2L11.2 9.6V16L6.8 18.5V9.6L0 2.2Z" fill="#fff"/></svg></div>
<div style="left:1113.8px;top:317px;width:25px;height:37px;background:#fff;border-radius:6px"></div>
<div style="left:1144.4px;top:317px;width:37.3px;height:37px;overflow:hidden"><div class="btn hl" style="left:0;top:0;width:37.3px;height:37px;background-size:100% 72px"></div><svg style="left:8.95px;top:10.2px" width="20" height="21.11" viewBox="0 0 18 19"><path d="M0 .5H18V2.2L11.2 9.6V16L6.8 18.5V9.6L0 2.2Z" fill="#fff"/></svg></div>
<div style="left:1250.9px;top:317px;width:17.6px;height:37px;background:#fff;border-radius:6px"></div>
<div style="left:1273.5px;top:317px;width:37.2px;height:37px;overflow:hidden"><div class="btn hl" style="left:0;top:0;width:37.2px;height:37px;background-size:100% 72px"></div><svg style="left:8.9px;top:10.2px" width="20" height="21.11" viewBox="0 0 18 19"><path d="M0 .5H18V2.2L11.2 9.6V16L6.8 18.5V9.6L0 2.2Z" fill="#fff"/></svg></div>
<div style="left:1444.8px;top:317px;width:9.7px;height:37px;background:#fff;border-radius:6px"></div>
<div style="left:1459.4px;top:317px;width:37.6px;height:37px;overflow:hidden"><div class="btn hl" style="left:0;top:0;width:37.6px;height:37px;background-size:100% 72px"></div><svg style="left:9.1px;top:10.2px" width="20" height="21.11" viewBox="0 0 18 19"><path d="M0 .5H18V2.2L11.2 9.6V16L6.8 18.5V9.6L0 2.2Z" fill="#fff"/></svg></div>
<div style="left:1566.9px;top:317px;width:44.9px;height:37px;"><div class="btn hl" style="left:0;top:0;width:44.9px;height:37px;background-size:100% 72px"></div><div class="inp" style="left:0;top:0;width:9.3px;height:37px"></div><div style="left:6.3px;top:0;width:1px;height:37px;background:#555"></div><svg style="left:20.6px;top:5.4px" width="13" height="9" viewBox="0 0 13 9"><path d="M0 9H13L6.5 0Z" fill="#fff"/></svg><svg style="left:20.6px;top:23px" width="13" height="9" viewBox="0 0 13 9"><path d="M0 0H13L6.5 9Z" fill="#fff"/></svg></div>
<div style="left:1679px;top:317px;width:45px;height:37px;"><div class="btn hl" style="left:0;top:0;width:45px;height:37px;background-size:100% 72px"></div><div class="inp" style="left:0;top:0;width:9.3px;height:37px"></div><div style="left:6.3px;top:0;width:1px;height:37px;background:#555"></div><svg style="left:20.65px;top:5.4px" width="13" height="9" viewBox="0 0 13 9"><path d="M0 9H13L6.5 0Z" fill="#fff"/></svg><svg style="left:20.65px;top:23px" width="13" height="9" viewBox="0 0 13 9"><path d="M0 0H13L6.5 9Z" fill="#fff"/></svg></div>
<div style="left:1791px;top:317px;width:1px;height:37px;background:#fff"></div>
<div style="left:1793.2px;top:317px;width:37.6px;height:37px;overflow:hidden"><div class="btn hl" style="left:0;top:0;width:37.6px;height:37px;background-size:100% 72px"></div><svg style="left:9.1px;top:10.2px" width="20" height="21.11" viewBox="0 0 18 19"><path d="M0 .5H18V2.2L11.2 9.6V16L6.8 18.5V9.6L0 2.2Z" fill="#fff"/></svg></div>
<div style="left:1995.8px;top:317px;width:62.3px;height:37px;"><div class="btn hl" style="left:0;top:0;width:62.3px;height:37px;background-size:100% 72px"></div><div class="inp" style="left:0;top:0;width:26.2px;height:37px"></div><svg style="left:38.25px;top:15.5px" width="12" height="9" viewBox="0 0 12 9"><path d="M0 0H12L6.0 9Z" fill="#fff"/></svg></div>
<div style="left:2175.2px;top:317px;width:52px;height:37px;overflow:hidden"><div class="btn hl" style="left:0;top:0;width:80px;height:37px;background-size:100% 72px"></div><svg style="left:8.4px;top:8.6px" width="22" height="22" viewBox="0 0 22 22"><rect x=".9" y="2.5" width="20.2" height="18.6" fill="none" stroke="#fff" stroke-width="1.7"/><rect x=".9" y="8.4" width="20.2" height="1.6" fill="#fff"/><circle cx="6.2" cy="2.4" r="1.9" fill="#fff"/><circle cx="15.8" cy="2.4" r="1.9" fill="#fff"/><rect x="12.2" y="13.2" width="6.2" height="5.6" fill="#fff"/></svg><svg style="left:44.5px;top:8.6px" width="22" height="22" viewBox="0 0 22 22"><circle cx="11" cy="11" r="10" fill="none" stroke="#fff" stroke-width="1.7"/><path d="M10.4 4.6V12.2H17.2" fill="none" stroke="#fff" stroke-width="1.7"/></svg></div>
<div style="left:2226.1px;top:317px;width:36.8px;height:37px;overflow:hidden"><div class="btn hl" style="left:0;top:0;width:36.8px;height:37px;background-size:100% 72px"></div><svg style="left:8.7px;top:10.2px" width="20" height="21.11" viewBox="0 0 18 19"><path d="M0 .5H18V2.2L11.2 9.6V16L6.8 18.5V9.6L0 2.2Z" fill="#fff"/></svg></div>
<div style="left:2331.9px;top:317px;width:153.6px;height:37px;"><div class="btn hl" style="left:0;top:0;width:153.6px;height:37px;background-size:100% 72px"></div><div class="inp" style="left:0;top:0;width:79.4px;height:37px"></div><div style="left:79.4px;top:0;width:1px;height:37px;background:#2b2827"></div><div style="left:80.4px;top:0;width:1px;height:37px;background:#f4f4f4"></div><svg style="left:88.3px;top:8.6px" width="22" height="22" viewBox="0 0 22 22"><rect x=".9" y="2.5" width="20.2" height="18.6" fill="none" stroke="#fff" stroke-width="1.7"/><rect x=".9" y="8.4" width="20.2" height="1.6" fill="#fff"/><circle cx="6.2" cy="2.4" r="1.9" fill="#fff"/><circle cx="15.8" cy="2.4" r="1.9" fill="#fff"/><rect x="12.2" y="13.2" width="6.2" height="5.6" fill="#fff"/></svg><svg style="left:124.3px;top:8.6px" width="22" height="22" viewBox="0 0 22 22"><circle cx="11" cy="11" r="10" fill="none" stroke="#fff" stroke-width="1.7"/><path d="M10.4 4.6V12.2H17.2" fill="none" stroke="#fff" stroke-width="1.7"/></svg></div>
<div style="left:2490.6px;top:317px;width:27.9px;height:37px;overflow:hidden"><div class="btn hl" style="left:0;top:0;width:37.4px;height:37px;background-size:100% 72px"></div><svg style="left:9px;top:10.2px" width="20" height="21.11" viewBox="0 0 18 19"><path d="M0 .5H18V2.2L11.2 9.6V16L6.8 18.5V9.6L0 2.2Z" fill="#fff"/></svg></div>
<div style="left:9px;top:364px;width:2509px;height:712px;overflow:hidden"><div style="left:0;top:0px;width:2509px;height:46px;background:linear-gradient(to bottom,#1473d4 0,#1574d3 50%,#0c6dcf 75%,#0366cc 97%)"></div><div style="left:2154px;top:0px;width:156px;height:46px;background:linear-gradient(to bottom,#ffae1c 0,#ffab17 60%,#ffa40a 100%)"></div><svg style="left:27px;top:7px" width="24" height="24" viewBox="0 0 24 24"><path d="M5 .3 12 7.3 19 .3 23.7 5 16.7 12 23.7 19 19 23.7 12 16.7 5 23.7 .3 19 7.3 12 .3 5Z" fill="#2e1c1c"/><path d="M5 .3 12 7.3 19 .3 23.7 5 18.8 9.9C14.4 9.2 10.4 10.4 7.4 11.9L.3 5Z" fill="#483636"/></svg><div class="t" style="left:90.78px;top:15px;font-size:18px;line-height:18px;letter-spacing:-0.26px;">In Progress</div><svg style="left:257px;top:7px" width="24" height="24" viewBox="0 0 24 24"><circle cx="2.4" cy="2.6" r="1.7" fill="#8b8b8b"/><rect x="1.5" y="3" width="1.9" height="20.5" fill="#8b8b8b"/><path d="M3.6 4.6C8 1 12 2.2 16.5 4.2 19 5 21.5 3.6 23.6 2.2V14.6C21.5 16.4 19 17.8 16.5 16.8 12 14.8 8 13.8 3.6 17.2Z" fill="none" stroke="#8b8b8b" stroke-width="1"/><path d="M16.5 4.2V16.8" stroke="#8b8b8b" stroke-width="1" fill="none"/></svg><svg style="left:350px;top:7px" width="24" height="24" viewBox="0 0 24 24"><rect x="1" y=".8" width="22" height="22.6" rx="4.5" fill="#dcdcdc"/><path d="M1 5.8V5.3A4.5 4.5 0 0 1 5.5 .8H18.5A4.5 4.5 0 0 1 23 5.3V5.8Z" fill="#3d3d3d"/><rect x="1" y="11.6" width="22" height="1.6" fill="#aaa"/><rect x="1" y="14.8" width="22" height="1.6" fill="#aaa"/><rect x="1" y="18.2" width="22" height="1.6" fill="#aaa"/><rect x="4.8" y="5.8" width="1" height="17.6" fill="#777"/></svg><svg style="left:421.5px;top:7px" width="24" height="24" viewBox="0 0 24 24"><path d="M13 4.2H17V15.5L20.6 19.5V24H2.5Z" fill="#dadada"/><path d="M13 4.2H14V22L13 22.3Z" fill="#a9a9a9"/><path d="M1.6 4 13 .4V21.8L1.6 23.8Z" fill="#dadada"/><path d="M1.6 23.8 13 21.8 13 22.6 2.4 24.3Z" fill="#c4c4c4"/></svg><svg style="left:488px;top:6.4px" width="24" height="25" viewBox="0 0 24 25"><ellipse cx="12" cy="10.3" rx="12" ry="10" fill="#0d3d98"/><path d="M13.5 18.5C15.5 21.5 18 23.3 20.8 24.2 19.4 21.8 19 19.5 19.6 16.5Z" fill="#0d3d98"/><text x="12" y="16" font-size="16" font-weight="bold" fill="#fff" text-anchor="middle">?</text></svg><svg style="left:549.5px;top:7px" width="24" height="24" viewBox="0 0 24 24"><path d="M15.5 15.5 22 22" stroke="#9b9b9b" stroke-width="4.2" stroke-linecap="round"/><circle cx="9.2" cy="9.4" r="7.9" fill="rgba(255,255,255,.2)" stroke="#d4d4d4" stroke-width="1.9"/></svg><svg style="left:621.5px;top:7px" width="24" height="25" viewBox="0 0 24 25"><path d="M7.5 .8H16.5L20.4 4.8V19.4H7.5Z" fill="#fff" stroke="#000" stroke-width="1"/><path d="M16.5 .8V4.8H20.4" fill="#ddd" stroke="#000" stroke-width=".8"/><path d="M1.3 5H10.2L14.4 9.2V23.6H1.3Z" fill="#fff" stroke="#000" stroke-width="1"/><path d="M10.2 5V9.2H14.4" fill="#ddd" stroke="#000" stroke-width=".8"/><path d="M3.8 12.6H12M3.8 14.6H12M3.8 16.6H12M3.8 18.6H12M3.8 20.6H12" stroke="#777" stroke-width="1.1"/></svg><svg style="left:691px;top:7px" width="24" height="25" viewBox="0 0 24 25"><path d="M8.6 .6 9.2 4.6C15 4 21 7.5 23.4 14.6 19.8 10.8 14.5 9.6 10.2 10.6L10.8 14 2 7.2Z" fill="#d92626"/><path d="M15.4 24.4 14.8 20.4C9 21 3 17.5 .6 10.4 4.2 14.2 9.5 15.4 13.8 14.4L13.2 11 22 17.8Z" fill="#8bb83e"/></svg><div class="t" style="left:742.95px;top:15px;font-size:18px;line-height:18px;letter-spacing:-0.4px;">185617</div><div class="t" style="left:890.66px;top:15px;font-size:18px;line-height:18px;letter-spacing:-0.02px;">Maya Media Producti...</div><div class="t" style="left:1103.16px;top:15px;font-size:18px;line-height:18px;letter-spacing:-0.39px;">Friends 2</div><div class="t" style="left:1240.73px;top:15px;font-size:18px;line-height:18px;letter-spacing:-0.56px;">00:22:00</div><svg style="left:1379.2px;top:7.4px" width="24" height="25" viewBox="0 0 24 25"><ellipse cx="12" cy="10.3" rx="12" ry="10" fill="#0d3d98"/><path d="M13.5 18.5C15.5 21.5 18 23.3 20.8 24.2 19.4 21.8 19 19.5 19.6 16.5Z" fill="#0d3d98"/><text x="12" y="16" font-size="16" font-weight="bold" fill="#fff" text-anchor="middle">i</text></svg><div class="t" style="left:1434.16px;top:15px;font-size:18px;line-height:18px;letter-spacing:-0.39px;">Friends</div><div class="t" style="left:1555.8px;top:15px;font-size:18px;line-height:18px;">2</div><div class="t" style="left:1668.8px;top:15px;font-size:18px;line-height:18px;">4</div><div class="t" style="left:1780.46px;top:15px;font-size:18px;line-height:18px;letter-spacing:-0.32px;">English</div><div class="t" style="left:1885.09px;top:15px;font-size:18px;line-height:18px;letter-spacing:-0.46px;">Spanish</div><div class="t" style="left:1986.25px;top:15px;font-size:18px;line-height:18px;letter-spacing:0.08px;">With script</div><svg style="left:2116.4px;top:7px" width="24.5" height="24.5" viewBox="0 0 24.5 24.5"><g transform="rotate(45 13.2 12)" fill="#92d050"><rect x="12.1" y="-5.2" width="2.2" height="6.5"/><rect x="6.7" y=".2" width="13" height="23.6" rx="6.5" ry="9"/><path d="M5.6 10.6 7.2 11.4H19.2L20.8 10.6V13.4L19.2 12.8H7.2L5.6 13.4Z"/><path d="M8.2 12.1H18.2" stroke="#6fa832" stroke-width=".8" stroke-dasharray="1.6 1" fill="none"/><rect x="12.1" y="23.2" width="2.2" height="7.4" rx="1"/></g></svg><div class="dm" style="left:2165.1px;top:15px"><span class="u m0">__</span><span class="m1">/</span><span class="u m2">__</span><span class="m3">/</span><span class="u m4">____</span> <span class="u m5">__</span><span class="m6">:</span><span class="u m7">__</span></div><div class="dm" style="left:2321.7px;top:15px"><span class="u m0">__</span><span class="m1">/</span><span class="u m2">__</span><span class="m3">/</span><span class="u m4">____</span> <span class="u m5">__</span><span class="m6">:</span><span class="u m7">__</span></div><div style="left:0;top:46px;width:2509px;height:46px;background:#555"></div><div style="left:2154px;top:46px;width:156px;height:46px;background:linear-gradient(to bottom,#ffae1c 0,#ffab17 60%,#ffa40a 100%)"></div><svg style="left:27px;top:53px" width="24" height="24" viewBox="0 0 24 24"><path d="M5 .3 12 7.3 19 .3 23.7 5 16.7 12 23.7 19 19 23.7 12 16.7 5 23.7 .3 19 7.3 12 .3 5Z" fill="#2e1c1c"/><path d="M5 .3 12 7.3 19 .3 23.7 5 18.8 9.9C14.4 9.2 10.4 10.4 7.4 11.9L.3 5Z" fill="#483636"/></svg><div class="t" style="left:90.78px;top:61px;font-size:18px;line-height:18px;letter-spacing:-0.26px;">In Progress</div><svg style="left:257px;top:53px" width="24" height="24" viewBox="0 0 24 24"><circle cx="2.4" cy="2.6" r="1.7" fill="#8b8b8b"/><rect x="1.5" y="3" width="1.9" height="20.5" fill="#8b8b8b"/><path d="M3.6 4.6C8 1 12 2.2 16.5 4.2 19 5 21.5 3.6 23.6 2.2V14.6C21.5 16.4 19 17.8 16.5 16.8 12 14.8 8 13.8 3.6 17.2Z" fill="none" stroke="#8b8b8b" stroke-width="1"/><path d="M16.5 4.2V16.8" stroke="#8b8b8b" stroke-width="1" fill="none"/></svg><svg style="left:350px;top:53px" width="24" height="24" viewBox="0 0 24 24"><rect x="1" y=".8" width="22" height="22.6" rx="4.5" fill="#dcdcdc"/><path d="M1 5.8V5.3A4.5 4.5 0 0 1 5.5 .8H18.5A4.5 4.5 0 0 1 23 5.3V5.8Z" fill="#3d3d3d"/><rect x="1" y="11.6" width="22" height="1.6" fill="#aaa"/><rect x="1" y="14.8" width="22" height="1.6" fill="#aaa"/><rect x="1" y="18.2" width="22" height="1.6" fill="#aaa"/><rect x="4.8" y="5.8" width="1" height="17.6" fill="#777"/></svg><svg style="left:421.5px;top:53px" width="24" height="24" viewBox="0 0 24 24"><path d="M13 4.2H17V15.5L20.6 19.5V24H2.5Z" fill="#dadada"/><path d="M13 4.2H14V22L13 22.3Z" fill="#a9a9a9"/><path d="M1.6 4 13 .4V21.8L1.6 23.8Z" fill="#dadada"/><path d="M1.6 23.8 13 21.8 13 22.6 2.4 24.3Z" fill="#c4c4c4"/></svg><svg style="left:488px;top:52.4px" width="24" height="25" viewBox="0 0 24 25"><ellipse cx="12" cy="10.3" rx="12" ry="10" fill="#0d3d98"/><path d="M13.5 18.5C15.5 21.5 18 23.3 20.8 24.2 19.4 21.8 19 19.5 19.6 16.5Z" fill="#0d3d98"/><text x="12" y="16" font-size="16" font-weight="bold" fill="#fff" text-anchor="middle">?</text></svg><svg style="left:549.5px;top:53px" width="24" height="24" viewBox="0 0 24 24"><path d="M15.5 15.5 22 22" stroke="#9b9b9b" stroke-width="4.2" stroke-linecap="round"/><circle cx="9.2" cy="9.4" r="7.9" fill="rgba(255,255,255,.2)" stroke="#d4d4d4" stroke-width="1.9"/></svg><svg style="left:621.5px;top:53px" width="24" height="25" viewBox="0 0 24 25"><path d="M7.5 .8H16.5L20.4 4.8V19.4H7.5Z" fill="#fff" stroke="#000" stroke-width="1"/><path d="M16.5 .8V4.8H20.4" fill="#ddd" stroke="#000" stroke-width=".8"/><path d="M1.3 5H10.2L14.4 9.2V23.6H1.3Z" fill="#fff" stroke="#000" stroke-width="1"/><path d="M10.2 5V9.2H14.4" fill="#ddd" stroke="#000" stroke-width=".8"/><path d="M3.8 12.6H12M3.8 14.6H12M3.8 16.6H12M3.8 18.6H12M3.8 20.6H12" stroke="#777" stroke-width="1.1"/></svg><svg style="left:691px;top:53px" width="24" height="25" viewBox="0 0 24 25"><path d="M8.6 .6 9.2 4.6C15 4 21 7.5 23.4 14.6 19.8 10.8 14.5 9.6 10.2 10.6L10.8 14 2 7.2Z" fill="#d92626"/><path d="M15.4 24.4 14.8 20.4C9 21 3 17.5 .6 10.4 4.2 14.2 9.5 15.4 13.8 14.4L13.2 11 22 17.8Z" fill="#8bb83e"/></svg><div class="t" style="left:742.95px;top:61px;font-size:18px;line-height:18px;letter-spacing:-0.43px;">185618</div><div class="t" style="left:890.66px;top:61px;font-size:18px;line-height:18px;letter-spacing:-0.02px;">Maya Media Producti...</div><div class="t" style="left:1103.16px;top:61px;font-size:18px;line-height:18px;letter-spacing:-0.39px;">Friends 2</div><div class="t" style="left:1240.73px;top:61px;font-size:18px;line-height:18px;letter-spacing:-0.56px;">00:22:00</div><svg style="left:1379.2px;top:53.4px" width="24" height="25" viewBox="0 0 24 25"><ellipse cx="12" cy="10.3" rx="12" ry="10" fill="#0d3d98"/><path d="M13.5 18.5C15.5 21.5 18 23.3 20.8 24.2 19.4 21.8 19 19.5 19.6 16.5Z" fill="#0d3d98"/><text x="12" y="16" font-size="16" font-weight="bold" fill="#fff" text-anchor="middle">i</text></svg><div class="t" style="left:1434.16px;top:61px;font-size:18px;line-height:18px;letter-spacing:-0.39px;">Friends</div><div class="t" style="left:1555.8px;top:61px;font-size:18px;line-height:18px;">2</div><div class="t" style="left:1668.48px;top:61px;font-size:18px;line-height:18px;">5</div><div class="t" style="left:1780.46px;top:61px;font-size:18px;line-height:18px;letter-spacing:-0.32px;">English</div><div class="t" style="left:1885.09px;top:61px;font-size:18px;line-height:18px;letter-spacing:-0.46px;">Spanish</div><div class="t" style="left:1986.25px;top:61px;font-size:18px;line-height:18px;letter-spacing:0.08px;">With script</div><svg style="left:2116.4px;top:53px" width="24.5" height="24.5" viewBox="0 0 24.5 24.5"><g transform="rotate(45 13.2 12)" fill="#92d050"><rect x="12.1" y="-5.2" width="2.2" height="6.5"/><rect x="6.7" y=".2" width="13" height="23.6" rx="6.5" ry="9"/><path d="M5.6 10.6 7.2 11.4H19.2L20.8 10.6V13.4L19.2 12.8H7.2L5.6 13.4Z"/><path d="M8.2 12.1H18.2" stroke="#6fa832" stroke-width=".8" stroke-dasharray="1.6 1" fill="none"/><rect x="12.1" y="23.2" width="2.2" height="7.4" rx="1"/></g></svg><div class="dm" style="left:2165.1px;top:61px"><span class="u m0">__</span><span class="m1">/</span><span class="u m2">__</span><span class="m3">/</span><span class="u m4">____</span> <span class="u m5">__</span><span class="m6">:</span><span class="u m7">__</span></div><div class="dm" style="left:2321.7px;top:61px"><span class="u m0">__</span><span class="m1">/</span><span class="u m2">__</span><span class="m3">/</span><span class="u m4">____</span> <span class="u m5">__</span><span class="m6">:</span><span class="u m7">__</span></div><div style="left:0;top:92px;width:2509px;height:46px;background:#4d4d4d"></div><div style="left:2154px;top:92px;width:156px;height:46px;background:linear-gradient(to bottom,#ffae1c 0,#ffab17 60%,#ffa40a 100%)"></div><svg style="left:27px;top:99px" width="24" height="24" viewBox="0 0 24 24"><path d="M5 .3 12 7.3 19 .3 23.7 5 16.7 12 23.7 19 19 23.7 12 16.7 5 23.7 .3 19 7.3 12 .3 5Z" fill="#2e1c1c"/><path d="M5 .3 12 7.3 19 .3 23.7 5 18.8 9.9C14.4 9.2 10.4 10.4 7.4 11.9L.3 5Z" fill="#483636"/></svg><div class="t" style="left:90.78px;top:107px;font-size:18px;line-height:18px;letter-spacing:-0.26px;">In Progress</div><svg style="left:257px;top:99px" width="24" height="24" viewBox="0 0 24 24"><circle cx="2.4" cy="2.6" r="1.7" fill="#8b8b8b"/><rect x="1.5" y="3" width="1.9" height="20.5" fill="#8b8b8b"/><path d="M3.6 4.6C8 1 12 2.2 16.5 4.2 19 5 21.5 3.6 23.6 2.2V14.6C21.5 16.4 19 17.8 16.5 16.8 12 14.8 8 13.8 3.6 17.2Z" fill="none" stroke="#8b8b8b" stroke-width="1"/><path d="M16.5 4.2V16.8" stroke="#8b8b8b" stroke-width="1" fill="none"/></svg><svg style="left:350px;top:99px" width="24" height="24" viewBox="0 0 24 24"><rect x="1" y=".8" width="22" height="22.6" rx="4.5" fill="#dcdcdc"/><path d="M1 5.8V5.3A4.5 4.5 0 0 1 5.5 .8H18.5A4.5 4.5 0 0 1 23 5.3V5.8Z" fill="#3d3d3d"/><rect x="1" y="11.6" width="22" height="1.6" fill="#aaa"/><rect x="1" y="14.8" width="22" height="1.6" fill="#aaa"/><rect x="1" y="18.2" width="22" height="1.6" fill="#aaa"/><rect x="4.8" y="5.8" width="1" height="17.6" fill="#777"/></svg><svg style="left:421.5px;top:99px" width="24" height="24" viewBox="0 0 24 24"><path d="M13 4.2H17V15.5L20.6 19.5V24H2.5Z" fill="#dadada"/><path d="M13 4.2H14V22L13 22.3Z" fill="#a9a9a9"/><path d="M1.6 4 13 .4V21.8L1.6 23.8Z" fill="#dadada"/><path d="M1.6 23.8 13 21.8 13 22.6 2.4 24.3Z" fill="#c4c4c4"/></svg><svg style="left:488px;top:98.4px" width="24" height="25" viewBox="0 0 24 25"><ellipse cx="12" cy="10.3" rx="12" ry="10" fill="#0d3d98"/><path d="M13.5 18.5C15.5 21.5 18 23.3 20.8 24.2 19.4 21.8 19 19.5 19.6 16.5Z" fill="#0d3d98"/><text x="12" y="16" font-size="16" font-weight="bold" fill="#fff" text-anchor="middle">?</text></svg><svg style="left:549.5px;top:99px" width="24" height="24" viewBox="0 0 24 24"><path d="M15.5 15.5 22 22" stroke="#9b9b9b" stroke-width="4.2" stroke-linecap="round"/><circle cx="9.2" cy="9.4" r="7.9" fill="rgba(255,255,255,.2)" stroke="#d4d4d4" stroke-width="1.9"/></svg><svg style="left:621.5px;top:99px" width="24" height="25" viewBox="0 0 24 25"><path d="M7.5 .8H16.5L20.4 4.8V19.4H7.5Z" fill="#fff" stroke="#000" stroke-width="1"/><path d="M16.5 .8V4.8H20.4" fill="#ddd" stroke="#000" stroke-width=".8"/><path d="M1.3 5H10.2L14.4 9.2V23.6H1.3Z" fill="#fff" stroke="#000" stroke-width="1"/><path d="M10.2 5V9.2H14.4" fill="#ddd" stroke="#000" stroke-width=".8"/><path d="M3.8 12.6H12M3.8 14.6H12M3.8 16.6H12M3.8 18.6H12M3.8 20.6H12" stroke="#777" stroke-width="1.1"/></svg><svg style="left:691px;top:99px" width="24" height="25" viewBox="0 0 24 25"><path d="M8.6 .6 9.2 4.6C15 4 21 7.5 23.4 14.6 19.8 10.8 14.5 9.6 10.2 10.6L10.8 14 2 7.2Z" fill="#d92626"/><path d="M15.4 24.4 14.8 20.4C9 21 3 17.5 .6 10.4 4.2 14.2 9.5 15.4 13.8 14.4L13.2 11 22 17.8Z" fill="#8bb83e"/></svg><div class="t" style="left:742.95px;top:107px;font-size:18px;line-height:18px;letter-spacing:-0.41px;">185619</div><div class="t" style="left:890.66px;top:107px;font-size:18px;line-height:18px;letter-spacing:-0.02px;">Maya Media Producti...</div><div class="t" style="left:1103.16px;top:107px;font-size:18px;line-height:18px;letter-spacing:-0.39px;">Friends 2</div><div class="t" style="left:1240.73px;top:107px;font-size:18px;line-height:18px;letter-spacing:-0.56px;">00:22:00</div><svg style="left:1379.2px;top:99.4px" width="24" height="25" viewBox="0 0 24 25"><ellipse cx="12" cy="10.3" rx="12" ry="10" fill="#0d3d98"/><path d="M13.5 18.5C15.5 21.5 18 23.3 20.8 24.2 19.4 21.8 19 19.5 19.6 16.5Z" fill="#0d3d98"/><text x="12" y="16" font-size="16" font-weight="bold" fill="#fff" text-anchor="middle">i</text></svg><div class="t" style="left:1434.16px;top:107px;font-size:18px;line-height:18px;letter-spacing:-0.39px;">Friends</div><div class="t" style="left:1555.8px;top:107px;font-size:18px;line-height:18px;">2</div><div class="t" style="left:1668.3px;top:107px;font-size:18px;line-height:18px;">6</div><div class="t" style="left:1780.46px;top:107px;font-size:18px;line-height:18px;letter-spacing:-0.32px;">English</div><div class="t" style="left:1885.09px;top:107px;font-size:18px;line-height:18px;letter-spacing:-0.46px;">Spanish</div><div class="t" style="left:1986.25px;top:107px;font-size:18px;line-height:18px;letter-spacing:0.08px;">With script</div><svg style="left:2116.4px;top:99px" width="24.5" height="24.5" viewBox="0 0 24.5 24.5"><g transform="rotate(45 13.2 12)" fill="#92d050"><rect x="12.1" y="-5.2" width="2.2" height="6.5"/><rect x="6.7" y=".2" width="13" height="23.6" rx="6.5" ry="9"/><path d="M5.6 10.6 7.2 11.4H19.2L20.8 10.6V13.4L19.2 12.8H7.2L5.6 13.4Z"/><path d="M8.2 12.1H18.2" stroke="#6fa832" stroke-width=".8" stroke-dasharray="1.6 1" fill="none"/><rect x="12.1" y="23.2" width="2.2" height="7.4" rx="1"/></g></svg><div class="dm" style="left:2165.1px;top:107px"><span class="u m0">__</span><span class="m1">/</span><span class="u m2">__</span><span class="m3">/</span><span class="u m4">____</span> <span class="u m5">__</span><span class="m6">:</span><span class="u m7">__</span></div><div class="dm" style="left:2321.7px;top:107px"><span class="u m0">__</span><span class="m1">/</span><span class="u m2">__</span><span class="m3">/</span><span class="u m4">____</span> <span class="u m5">__</span><span class="m6">:</span><span class="u m7">__</span></div><div style="left:0;top:138px;width:2509px;height:46px;background:#555"></div><div style="left:2154px;top:138px;width:156px;height:46px;background:linear-gradient(to bottom,#ffae1c 0,#ffab17 60%,#ffa40a 100%)"></div><svg style="left:27px;top:145px" width="24" height="24" viewBox="0 0 24 24"><path d="M5 .3 12 7.3 19 .3 23.7 5 16.7 12 23.7 19 19 23.7 12 16.7 5 23.7 .3 19 7.3 12 .3 5Z" fill="#2e1c1c"/><path d="M5 .3 12 7.3 19 .3 23.7 5 18.8 9.9C14.4 9.2 10.4 10.4 7.4 11.9L.3 5Z" fill="#483636"/></svg><div class="t" style="left:90.78px;top:153px;font-size:18px;line-height:18px;letter-spacing:-0.26px;">In Progress</div><svg style="left:257px;top:145px" width="24" height="24" viewBox="0 0 24 24"><circle cx="2.4" cy="2.6" r="1.7" fill="#8b8b8b"/><rect x="1.5" y="3" width="1.9" height="20.5" fill="#8b8b8b"/><path d="M3.6 4.6C8 1 12 2.2 16.5 4.2 19 5 21.5 3.6 23.6 2.2V14.6C21.5 16.4 19 17.8 16.5 16.8 12 14.8 8 13.8 3.6 17.2Z" fill="none" stroke="#8b8b8b" stroke-width="1"/><path d="M16.5 4.2V16.8" stroke="#8b8b8b" stroke-width="1" fill="none"/></svg><svg style="left:350px;top:145px" width="24" height="24" viewBox="0 0 24 24"><rect x="1" y=".8" width="22" height="22.6" rx="4.5" fill="#dcdcdc"/><path d="M1 5.8V5.3A4.5 4.5 0 0 1 5.5 .8H18.5A4.5 4.5 0 0 1 23 5.3V5.8Z" fill="#3d3d3d"/><rect x="1" y="11.6" width="22" height="1.6" fill="#aaa"/><rect x="1" y="14.8" width="22" height="1.6" fill="#aaa"/><rect x="1" y="18.2" width="22" height="1.6" fill="#aaa"/><rect x="4.8" y="5.8" width="1" height="17.6" fill="#777"/></svg><svg style="left:421.5px;top:145px" width="24" height="24" viewBox="0 0 24 24"><path d="M13 4.2H17V15.5L20.6 19.5V24H2.5Z" fill="#dadada"/><path d="M13 4.2H14V22L13 22.3Z" fill="#a9a9a9"/><path d="M1.6 4 13 .4V21.8L1.6 23.8Z" fill="#dadada"/><path d="M1.6 23.8 13 21.8 13 22.6 2.4 24.3Z" fill="#c4c4c4"/></svg><svg style="left:488px;top:144.4px" width="24" height="25" viewBox="0 0 24 25"><ellipse cx="12" cy="10.3" rx="12" ry="10" fill="#0d3d98"/><path d="M13.5 18.5C15.5 21.5 18 23.3 20.8 24.2 19.4 21.8 19 19.5 19.6 16.5Z" fill="#0d3d98"/><text x="12" y="16" font-size="16" font-weight="bold" fill="#fff" text-anchor="middle">?</text></svg><svg style="left:549.5px;top:145px" width="24" height="24" viewBox="0 0 24 24"><path d="M15.5 15.5 22 22" stroke="#9b9b9b" stroke-width="4.2" stroke-linecap="round"/><circle cx="9.2" cy="9.4" r="7.9" fill="rgba(255,255,255,.2)" stroke="#d4d4d4" stroke-width="1.9"/></svg><svg style="left:621.5px;top:145px" width="24" height="25" viewBox="0 0 24 25"><path d="M7.5 .8H16.5L20.4 4.8V19.4H7.5Z" fill="#fff" stroke="#000" stroke-width="1"/><path d="M16.5 .8V4.8H20.4" fill="#ddd" stroke="#000" stroke-width=".8"/><path d="M1.3 5H10.2L14.4 9.2V23.6H1.3Z" fill="#fff" stroke="#000" stroke-width="1"/><path d="M10.2 5V9.2H14.4" fill="#ddd" stroke="#000" stroke-width=".8"/><path d="M3.8 12.6H12M3.8 14.6H12M3.8 16.6H12M3.8 18.6H12M3.8 20.6H12" stroke="#777" stroke-width="1.1"/></svg><svg style="left:691px;top:145px" width="24" height="25" viewBox="0 0 24 25"><path d="M8.6 .6 9.2 4.6C15 4 21 7.5 23.4 14.6 19.8 10.8 14.5 9.6 10.2 10.6L10.8 14 2 7.2Z" fill="#d92626"/><path d="M15.4 24.4 14.8 20.4C9 21 3 17.5 .6 10.4 4.2 14.2 9.5 15.4 13.8 14.4L13.2 11 22 17.8Z" fill="#8bb83e"/></svg><div class="t" style="left:742.95px;top:153px;font-size:18px;line-height:18px;letter-spacing:-0.44px;">185620</div><div class="t" style="left:890.66px;top:153px;font-size:18px;line-height:18px;letter-spacing:-0.02px;">Maya Media Producti...</div><div class="t" style="left:1103.16px;top:153px;font-size:18px;line-height:18px;letter-spacing:-0.39px;">Friends 2</div><div class="t" style="left:1240.73px;top:153px;font-size:18px;line-height:18px;letter-spacing:-0.56px;">00:22:00</div><svg style="left:1379.2px;top:145.4px" width="24" height="25" viewBox="0 0 24 25"><ellipse cx="12" cy="10.3" rx="12" ry="10" fill="#0d3d98"/><path d="M13.5 18.5C15.5 21.5 18 23.3 20.8 24.2 19.4 21.8 19 19.5 19.6 16.5Z" fill="#0d3d98"/><text x="12" y="16" font-size="16" font-weight="bold" fill="#fff" text-anchor="middle">i</text></svg><div class="t" style="left:1434.16px;top:153px;font-size:18px;line-height:18px;letter-spacing:-0.39px;">Friends</div><div class="t" style="left:1555.8px;top:153px;font-size:18px;line-height:18px;">2</div><div class="t" style="left:1668.3px;top:153px;font-size:18px;line-height:18px;">7</div><div class="t" style="left:1780.46px;top:153px;font-size:18px;line-height:18px;letter-spacing:-0.32px;">English</div><div class="t" style="left:1885.09px;top:153px;font-size:18px;line-height:18px;letter-spacing:-0.46px;">Spanish</div><div class="t" style="left:1986.25px;top:153px;font-size:18px;line-height:18px;letter-spacing:0.08px;">With script</div><svg style="left:2116.4px;top:145px" width="24.5" height="24.5" viewBox="0 0 24.5 24.5"><g transform="rotate(45 13.2 12)" fill="#92d050"><rect x="12.1" y="-5.2" width="2.2" height="6.5"/><rect x="6.7" y=".2" width="13" height="23.6" rx="6.5" ry="9"/><path d="M5.6 10.6 7.2 11.4H19.2L20.8 10.6V13.4L19.2 12.8H7.2L5.6 13.4Z"/><path d="M8.2 12.1H18.2" stroke="#6fa832" stroke-width=".8" stroke-dasharray="1.6 1" fill="none"/><rect x="12.1" y="23.2" width="2.2" height="7.4" rx="1"/></g></svg><div class="dm" style="left:2165.1px;top:153px"><span class="u m0">__</span><span class="m1">/</span><span class="u m2">__</span><span class="m3">/</span><span class="u m4">____</span> <span class="u m5">__</span><span class="m6">:</span><span class="u m7">__</span></div><div class="dm" style="left:2321.7px;top:153px"><span class="u m0">__</span><span class="m1">/</span><span class="u m2">__</span><span class="m3">/</span><span class="u m4">____</span> <span class="u m5">__</span><span class="m6">:</span><span class="u m7">__</span></div><div style="left:0;top:184px;width:2509px;height:47px;background:#4d4d4d"></div><div style="left:2154px;top:184px;width:156px;height:47px;background:linear-gradient(to bottom,#ffae1c 0,#ffab17 60%,#ffa40a 100%)"></div><svg style="left:27px;top:191px" width="24" height="24" viewBox="0 0 24 24"><path d="M5 .3 12 7.3 19 .3 23.7 5 16.7 12 23.7 19 19 23.7 12 16.7 5 23.7 .3 19 7.3 12 .3 5Z" fill="#2e1c1c"/><path d="M5 .3 12 7.3 19 .3 23.7 5 18.8 9.9C14.4 9.2 10.4 10.4 7.4 11.9L.3 5Z" fill="#483636"/></svg><div class="t" style="left:90.78px;top:199px;font-size:18px;line-height:18px;letter-spacing:-0.26px;">In Progress</div><svg style="left:257px;top:191px" width="24" height="24" viewBox="0 0 24 24"><circle cx="2.4" cy="2.6" r="1.7" fill="#8b8b8b"/><rect x="1.5" y="3" width="1.9" height="20.5" fill="#8b8b8b"/><path d="M3.6 4.6C8 1 12 2.2 16.5 4.2 19 5 21.5 3.6 23.6 2.2V14.6C21.5 16.4 19 17.8 16.5 16.8 12 14.8 8 13.8 3.6 17.2Z" fill="none" stroke="#8b8b8b" stroke-width="1"/><path d="M16.5 4.2V16.8" stroke="#8b8b8b" stroke-width="1" fill="none"/></svg><svg style="left:350px;top:191px" width="24" height="24" viewBox="0 0 24 24"><rect x="1" y=".8" width="22" height="22.6" rx="4.5" fill="#dcdcdc"/><path d="M1 5.8V5.3A4.5 4.5 0 0 1 5.5 .8H18.5A4.5 4.5 0 0 1 23 5.3V5.8Z" fill="#3d3d3d"/><rect x="1" y="11.6" width="22" height="1.6" fill="#aaa"/><rect x="1" y="14.8" width="22" height="1.6" fill="#aaa"/><rect x="1" y="18.2" width="22" height="1.6" fill="#aaa"/><rect x="4.8" y="5.8" width="1" height="17.6" fill="#777"/></svg><svg style="left:421.5px;top:191px" width="24" height="24" viewBox="0 0 24 24"><path d="M13 4.2H17V15.5L20.6 19.5V24H2.5Z" fill="#dadada"/><path d="M13 4.2H14V22L13 22.3Z" fill="#a9a9a9"/><path d="M1.6 4 13 .4V21.8L1.6 23.8Z" fill="#dadada"/><path d="M1.6 23.8 13 21.8 13 22.6 2.4 24.3Z" fill="#c4c4c4"/></svg><svg style="left:488px;top:190.4px" width="24" height="25" viewBox="0 0 24 25"><ellipse cx="12" cy="10.3" rx="12" ry="10" fill="#0d3d98"/><path d="M13.5 18.5C15.5 21.5 18 23.3 20.8 24.2 19.4 21.8 19 19.5 19.6 16.5Z" fill="#0d3d98"/><text x="12" y="16" font-size="16" font-weight="bold" fill="#fff" text-anchor="middle">?</text></svg><svg style="left:549.5px;top:191px" width="24" height="24" viewBox="0 0 24 24"><path d="M15.5 15.5 22 22" stroke="#9b9b9b" stroke-width="4.2" stroke-linecap="round"/><circle cx="9.2" cy="9.4" r="7.9" fill="rgba(255,255,255,.2)" stroke="#d4d4d4" stroke-width="1.9"/></svg><svg style="left:621.5px;top:191px" width="24" height="25" viewBox="0 0 24 25"><path d="M7.5 .8H16.5L20.4 4.8V19.4H7.5Z" fill="#fff" stroke="#000" stroke-width="1"/><path d="M16.5 .8V4.8H20.4" fill="#ddd" stroke="#000" stroke-width=".8"/><path d="M1.3 5H10.2L14.4 9.2V23.6H1.3Z" fill="#fff" stroke="#000" stroke-width="1"/><path d="M10.2 5V9.2H14.4" fill="#ddd" stroke="#000" stroke-width=".8"/><path d="M3.8 12.6H12M3.8 14.6H12M3.8 16.6H12M3.8 18.6H12M3.8 20.6H12" stroke="#777" stroke-width="1.1"/></svg><svg style="left:691px;top:191px" width="24" height="25" viewBox="0 0 24 25"><path d="M8.6 .6 9.2 4.6C15 4 21 7.5 23.4 14.6 19.8 10.8 14.5 9.6 10.2 10.6L10.8 14 2 7.2Z" fill="#d92626"/><path d="M15.4 24.4 14.8 20.4C9 21 3 17.5 .6 10.4 4.2 14.2 9.5 15.4 13.8 14.4L13.2 11 22 17.8Z" fill="#8bb83e"/></svg><div class="t" style="left:742.95px;top:199px;font-size:18px;line-height:18px;letter-spacing:-0.4px;">185621</div><div class="t" style="left:890.66px;top:199px;font-size:18px;line-height:18px;letter-spacing:-0.02px;">Maya Media Producti...</div><div class="t" style="left:1103.16px;top:199px;font-size:18px;line-height:18px;letter-spacing:-0.39px;">Friends 2</div><div class="t" style="left:1240.73px;top:199px;font-size:18px;line-height:18px;letter-spacing:-0.56px;">00:22:00</div><svg style="left:1379.2px;top:191.4px" width="24" height="25" viewBox="0 0 24 25"><ellipse cx="12" cy="10.3" rx="12" ry="10" fill="#0d3d98"/><path d="M13.5 18.5C15.5 21.5 18 23.3 20.8 24.2 19.4 21.8 19 19.5 19.6 16.5Z" fill="#0d3d98"/><text x="12" y="16" font-size="16" font-weight="bold" fill="#fff" text-anchor="middle">i</text></svg><div class="t" style="left:1434.16px;top:199px;font-size:18px;line-height:18px;letter-spacing:-0.39px;">Friends</div><div class="t" style="left:1555.8px;top:199px;font-size:18px;line-height:18px;">2</div><div class="t" style="left:1668.43px;top:199px;font-size:18px;line-height:18px;">8</div><div class="t" style="left:1780.46px;top:199px;font-size:18px;line-height:18px;letter-spacing:-0.32px;">English</div><div class="t" style="left:1885.09px;top:199px;font-size:18px;line-height:18px;letter-spacing:-0.46px;">Spanish</div><div class="t" style="left:1986.25px;top:199px;font-size:18px;line-height:18px;letter-spacing:0.08px;">With script</div><svg style="left:2116.4px;top:191px" width="24.5" height="24.5" viewBox="0 0 24.5 24.5"><g transform="rotate(45 13.2 12)" fill="#92d050"><rect x="12.1" y="-5.2" width="2.2" height="6.5"/><rect x="6.7" y=".2" width="13" height="23.6" rx="6.5" ry="9"/><path d="M5.6 10.6 7.2 11.4H19.2L20.8 10.6V13.4L19.2 12.8H7.2L5.6 13.4Z"/><path d="M8.2 12.1H18.2" stroke="#6fa832" stroke-width=".8" stroke-dasharray="1.6 1" fill="none"/><rect x="12.1" y="23.2" width="2.2" height="7.4" rx="1"/></g></svg><div class="dm" style="left:2165.1px;top:199px"><span class="u m0">__</span><span class="m1">/</span><span class="u m2">__</span><span class="m3">/</span><span class="u m4">____</span> <span class="u m5">__</span><span class="m6">:</span><span class="u m7">__</span></div><div class="dm" style="left:2321.7px;top:199px"><span class="u m0">__</span><span class="m1">/</span><span class="u m2">__</span><span class="m3">/</span><span class="u m4">____</span> <span class="u m5">__</span><span class="m6">:</span><span class="u m7">__</span></div><div style="left:0;top:231px;width:2509px;height:46px;background:#555"></div><div style="left:2154px;top:231px;width:156px;height:46px;background:linear-gradient(to bottom,#ffae1c 0,#ffab17 60%,#ffa40a 100%)"></div><svg style="left:27px;top:238px" width="24" height="24" viewBox="0 0 24 24"><path d="M5 .3 12 7.3 19 .3 23.7 5 16.7 12 23.7 19 19 23.7 12 16.7 5 23.7 .3 19 7.3 12 .3 5Z" fill="#2e1c1c"/><path d="M5 .3 12 7.3 19 .3 23.7 5 18.8 9.9C14.4 9.2 10.4 10.4 7.4 11.9L.3 5Z" fill="#483636"/></svg><div class="t" style="left:90.78px;top:245px;font-size:18px;line-height:18px;letter-spacing:-0.26px;">In Progress</div><svg style="left:257px;top:238px" width="24" height="24" viewBox="0 0 24 24"><circle cx="2.4" cy="2.6" r="1.7" fill="#8b8b8b"/><rect x="1.5" y="3" width="1.9" height="20.5" fill="#8b8b8b"/><path d="M3.6 4.6C8 1 12 2.2 16.5 4.2 19 5 21.5 3.6 23.6 2.2V14.6C21.5 16.4 19 17.8 16.5 16.8 12 14.8 8 13.8 3.6 17.2Z" fill="none" stroke="#8b8b8b" stroke-width="1"/><path d="M16.5 4.2V16.8" stroke="#8b8b8b" stroke-width="1" fill="none"/></svg><svg style="left:350px;top:238px" width="24" height="24" viewBox="0 0 24 24"><rect x="1" y=".8" width="22" height="22.6" rx="4.5" fill="#dcdcdc"/><path d="M1 5.8V5.3A4.5 4.5 0 0 1 5.5 .8H18.5A4.5 4.5 0 0 1 23 5.3V5.8Z" fill="#3d3d3d"/><rect x="1" y="11.6" width="22" height="1.6" fill="#aaa"/><rect x="1" y="14.8" width="22" height="1.6" fill="#aaa"/><rect x="1" y="18.2" width="22" height="1.6" fill="#aaa"/><rect x="4.8" y="5.8" width="1" height="17.6" fill="#777"/></svg><svg style="left:421.5px;top:238px" width="24" height="24" viewBox="0 0 24 24"><path d="M13 4.2H17V15.5L20.6 19.5V24H2.5Z" fill="#dadada"/><path d="M13 4.2H14V22L13 22.3Z" fill="#a9a9a9"/><path d="M1.6 4 13 .4V21.8L1.6 23.8Z" fill="#dadada"/><path d="M1.6 23.8 13 21.8 13 22.6 2.4 24.3Z" fill="#c4c4c4"/></svg><svg style="left:488px;top:237.4px" width="24" height="25" viewBox="0 0 24 25"><ellipse cx="12" cy="10.3" rx="12" ry="10" fill="#0d3d98"/><path d="M13.5 18.5C15.5 21.5 18 23.3 20.8 24.2 19.4 21.8 19 19.5 19.6 16.5Z" fill="#0d3d98"/><text x="12" y="16" font-size="16" font-weight="bold" fill="#fff" text-anchor="middle">?</text></svg><svg style="left:549.5px;top:238px" width="24" height="24" viewBox="0 0 24 24"><path d="M15.5 15.5 22 22" stroke="#9b9b9b" stroke-width="4.2" stroke-linecap="round"/><circle cx="9.2" cy="9.4" r="7.9" fill="rgba(255,255,255,.2)" stroke="#d4d4d4" stroke-width="1.9"/></svg><svg style="left:621.5px;top:238px" width="24" height="25" viewBox="0 0 24 25"><path d="M7.5 .8H16.5L20.4 4.8V19.4H7.5Z" fill="#fff" stroke="#000" stroke-width="1"/><path d="M16.5 .8V4.8H20.4" fill="#ddd" stroke="#000" stroke-width=".8"/><path d="M1.3 5H10.2L14.4 9.2V23.6H1.3Z" fill="#fff" stroke="#000" stroke-width="1"/><path d="M10.2 5V9.2H14.4" fill="#ddd" stroke="#000" stroke-width=".8"/><path d="M3.8 12.6H12M3.8 14.6H12M3.8 16.6H12M3.8 18.6H12M3.8 20.6H12" stroke="#777" stroke-width="1.1"/></svg><svg style="left:691px;top:238px" width="24" height="25" viewBox="0 0 24 25"><path d="M8.6 .6 9.2 4.6C15 4 21 7.5 23.4 14.6 19.8 10.8 14.5 9.6 10.2 10.6L10.8 14 2 7.2Z" fill="#d92626"/><path d="M15.4 24.4 14.8 20.4C9 21 3 17.5 .6 10.4 4.2 14.2 9.5 15.4 13.8 14.4L13.2 11 22 17.8Z" fill="#8bb83e"/></svg><div class="t" style="left:742.95px;top:245px;font-size:18px;line-height:18px;letter-spacing:-0.42px;">185623</div><div class="t" style="left:890.66px;top:245px;font-size:18px;line-height:18px;letter-spacing:-0.02px;">Maya Media Producti...</div><div class="t" style="left:1103.16px;top:245px;font-size:18px;line-height:18px;letter-spacing:-0.39px;">Friends 2</div><div class="t" style="left:1240.73px;top:245px;font-size:18px;line-height:18px;letter-spacing:-0.56px;">00:22:00</div><svg style="left:1379.2px;top:238.4px" width="24" height="25" viewBox="0 0 24 25"><ellipse cx="12" cy="10.3" rx="12" ry="10" fill="#0d3d98"/><path d="M13.5 18.5C15.5 21.5 18 23.3 20.8 24.2 19.4 21.8 19 19.5 19.6 16.5Z" fill="#0d3d98"/><text x="12" y="16" font-size="16" font-weight="bold" fill="#fff" text-anchor="middle">i</text></svg><div class="t" style="left:1434.16px;top:245px;font-size:18px;line-height:18px;letter-spacing:-0.39px;">Friends</div><div class="t" style="left:1555.8px;top:245px;font-size:18px;line-height:18px;">2</div><div class="t" style="left:1666.65px;top:245px;font-size:18px;line-height:18px;letter-spacing:-0.36px;">10</div><div class="t" style="left:1780.46px;top:245px;font-size:18px;line-height:18px;letter-spacing:-0.32px;">English</div><div class="t" style="left:1885.09px;top:245px;font-size:18px;line-height:18px;letter-spacing:-0.46px;">Spanish</div><div class="t" style="left:1986.25px;top:245px;font-size:18px;line-height:18px;letter-spacing:0.08px;">With script</div><svg style="left:2116.4px;top:238px" width="24.5" height="24.5" viewBox="0 0 24.5 24.5"><g transform="rotate(45 13.2 12)" fill="#92d050"><rect x="12.1" y="-5.2" width="2.2" height="6.5"/><rect x="6.7" y=".2" width="13" height="23.6" rx="6.5" ry="9"/><path d="M5.6 10.6 7.2 11.4H19.2L20.8 10.6V13.4L19.2 12.8H7.2L5.6 13.4Z"/><path d="M8.2 12.1H18.2" stroke="#6fa832" stroke-width=".8" stroke-dasharray="1.6 1" fill="none"/><rect x="12.1" y="23.2" width="2.2" height="7.4" rx="1"/></g></svg><div class="dm" style="left:2165.1px;top:245px"><span class="u m0">__</span><span class="m1">/</span><span class="u m2">__</span><span class="m3">/</span><span class="u m4">____</span> <span class="u m5">__</span><span class="m6">:</span><span class="u m7">__</span></div><div class="dm" style="left:2321.7px;top:245px"><span class="u m0">__</span><span class="m1">/</span><span class="u m2">__</span><span class="m3">/</span><span class="u m4">____</span> <span class="u m5">__</span><span class="m6">:</span><span class="u m7">__</span></div><div style="left:0;top:277px;width:2509px;height:46px;background:#4d4d4d"></div><div style="left:2154px;top:277px;width:156px;height:46px;background:linear-gradient(to bottom,#ffae1c 0,#ffab17 60%,#ffa40a 100%)"></div><svg style="left:27px;top:284px" width="24" height="24" viewBox="0 0 24 24"><path d="M5 .3 12 7.3 19 .3 23.7 5 16.7 12 23.7 19 19 23.7 12 16.7 5 23.7 .3 19 7.3 12 .3 5Z" fill="#2e1c1c"/><path d="M5 .3 12 7.3 19 .3 23.7 5 18.8 9.9C14.4 9.2 10.4 10.4 7.4 11.9L.3 5Z" fill="#483636"/></svg><div class="t" style="left:90.78px;top:292px;font-size:18px;line-height:18px;letter-spacing:-0.26px;">In Progress</div><svg style="left:257px;top:284px" width="24" height="24" viewBox="0 0 24 24"><circle cx="2.4" cy="2.6" r="1.7" fill="#8b8b8b"/><rect x="1.5" y="3" width="1.9" height="20.5" fill="#8b8b8b"/><path d="M3.6 4.6C8 1 12 2.2 16.5 4.2 19 5 21.5 3.6 23.6 2.2V14.6C21.5 16.4 19 17.8 16.5 16.8 12 14.8 8 13.8 3.6 17.2Z" fill="none" stroke="#8b8b8b" stroke-width="1"/><path d="M16.5 4.2V16.8" stroke="#8b8b8b" stroke-width="1" fill="none"/></svg><svg style="left:350px;top:284px" width="24" height="24" viewBox="0 0 24 24"><rect x="1" y=".8" width="22" height="22.6" rx="4.5" fill="#dcdcdc"/><path d="M1 5.8V5.3A4.5 4.5 0 0 1 5.5 .8H18.5A4.5 4.5 0 0 1 23 5.3V5.8Z" fill="#3d3d3d"/><rect x="1" y="11.6" width="22" height="1.6" fill="#aaa"/><rect x="1" y="14.8" width="22" height="1.6" fill="#aaa"/><rect x="1" y="18.2" width="22" height="1.6" fill="#aaa"/><rect x="4.8" y="5.8" width="1" height="17.6" fill="#777"/></svg><svg style="left:421.5px;top:284px" width="24" height="24" viewBox="0 0 24 24"><path d="M13 4.2H17V15.5L20.6 19.5V24H2.5Z" fill="#dadada"/><path d="M13 4.2H14V22L13 22.3Z" fill="#a9a9a9"/><path d="M1.6 4 13 .4V21.8L1.6 23.8Z" fill="#dadada"/><path d="M1.6 23.8 13 21.8 13 22.6 2.4 24.3Z" fill="#c4c4c4"/></svg><svg style="left:488px;top:283.4px" width="24" height="25" viewBox="0 0 24 25"><ellipse cx="12" cy="10.3" rx="12" ry="10" fill="#0d3d98"/><path d="M13.5 18.5C15.5 21.5 18 23.3 20.8 24.2 19.4 21.8 19 19.5 19.6 16.5Z" fill="#0d3d98"/><text x="12" y="16" font-size="16" font-weight="bold" fill="#fff" text-anchor="middle">?</text></svg><svg style="left:549.5px;top:284px" width="24" height="24" viewBox="0 0 24 24"><path d="M15.5 15.5 22 22" stroke="#9b9b9b" stroke-width="4.2" stroke-linecap="round"/><circle cx="9.2" cy="9.4" r="7.9" fill="rgba(255,255,255,.2)" stroke="#d4d4d4" stroke-width="1.9"/></svg><svg style="left:621.5px;top:284px" width="24" height="25" viewBox="0 0 24 25"><path d="M7.5 .8H16.5L20.4 4.8V19.4H7.5Z" fill="#fff" stroke="#000" stroke-width="1"/><path d="M16.5 .8V4.8H20.4" fill="#ddd" stroke="#000" stroke-width=".8"/><path d="M1.3 5H10.2L14.4 9.2V23.6H1.3Z" fill="#fff" stroke="#000" stroke-width="1"/><path d="M10.2 5V9.2H14.4" fill="#ddd" stroke="#000" stroke-width=".8"/><path d="M3.8 12.6H12M3.8 14.6H12M3.8 16.6H12M3.8 18.6H12M3.8 20.6H12" stroke="#777" stroke-width="1.1"/></svg><svg style="left:691px;top:284px" width="24" height="25" viewBox="0 0 24 25"><path d="M8.6 .6 9.2 4.6C15 4 21 7.5 23.4 14.6 19.8 10.8 14.5 9.6 10.2 10.6L10.8 14 2 7.2Z" fill="#d92626"/><path d="M15.4 24.4 14.8 20.4C9 21 3 17.5 .6 10.4 4.2 14.2 9.5 15.4 13.8 14.4L13.2 11 22 17.8Z" fill="#8bb83e"/></svg><div class="t" style="left:742.95px;top:292px;font-size:18px;line-height:18px;letter-spacing:-0.48px;">185624</div><div class="t" style="left:890.66px;top:292px;font-size:18px;line-height:18px;letter-spacing:-0.02px;">Maya Media Producti...</div><div class="t" style="left:1103.16px;top:292px;font-size:18px;line-height:18px;letter-spacing:-0.39px;">Friends 2</div><div class="t" style="left:1240.73px;top:292px;font-size:18px;line-height:18px;letter-spacing:-0.56px;">00:22:00</div><svg style="left:1379.2px;top:284.4px" width="24" height="25" viewBox="0 0 24 25"><ellipse cx="12" cy="10.3" rx="12" ry="10" fill="#0d3d98"/><path d="M13.5 18.5C15.5 21.5 18 23.3 20.8 24.2 19.4 21.8 19 19.5 19.6 16.5Z" fill="#0d3d98"/><text x="12" y="16" font-size="16" font-weight="bold" fill="#fff" text-anchor="middle">i</text></svg><div class="t" style="left:1434.16px;top:292px;font-size:18px;line-height:18px;letter-spacing:-0.39px;">Friends</div><div class="t" style="left:1555.8px;top:292px;font-size:18px;line-height:18px;">2</div><div class="t" style="left:1666.65px;top:292px;font-size:18px;line-height:18px;letter-spacing:1.13px;">11</div><div class="t" style="left:1780.46px;top:292px;font-size:18px;line-height:18px;letter-spacing:-0.32px;">English</div><div class="t" style="left:1885.09px;top:292px;font-size:18px;line-height:18px;letter-spacing:-0.46px;">Spanish</div><div class="t" style="left:1986.25px;top:292px;font-size:18px;line-height:18px;letter-spacing:0.08px;">With script</div><svg style="left:2116.4px;top:284px" width="24.5" height="24.5" viewBox="0 0 24.5 24.5"><g transform="rotate(45 13.2 12)" fill="#92d050"><rect x="12.1" y="-5.2" width="2.2" height="6.5"/><rect x="6.7" y=".2" width="13" height="23.6" rx="6.5" ry="9"/><path d="M5.6 10.6 7.2 11.4H19.2L20.8 10.6V13.4L19.2 12.8H7.2L5.6 13.4Z"/><path d="M8.2 12.1H18.2" stroke="#6fa832" stroke-width=".8" stroke-dasharray="1.6 1" fill="none"/><rect x="12.1" y="23.2" width="2.2" height="7.4" rx="1"/></g></svg><div class="dm" style="left:2165.1px;top:292px"><span class="u m0">__</span><span class="m1">/</span><span class="u m2">__</span><span class="m3">/</span><span class="u m4">____</span> <span class="u m5">__</span><span class="m6">:</span><span class="u m7">__</span></div><div class="dm" style="left:2321.7px;top:292px"><span class="u m0">__</span><span class="m1">/</span><span class="u m2">__</span><span class="m3">/</span><span class="u m4">____</span> <span class="u m5">__</span><span class="m6">:</span><span class="u m7">__</span></div><div style="left:0;top:323px;width:2509px;height:46px;background:#555"></div><div style="left:2154px;top:323px;width:156px;height:46px;background:linear-gradient(to bottom,#ffae1c 0,#ffab17 60%,#ffa40a 100%)"></div><svg style="left:27px;top:330px" width="24" height="24" viewBox="0 0 24 24"><path d="M5 .3 12 7.3 19 .3 23.7 5 16.7 12 23.7 19 19 23.7 12 16.7 5 23.7 .3 19 7.3 12 .3 5Z" fill="#2e1c1c"/><path d="M5 .3 12 7.3 19 .3 23.7 5 18.8 9.9C14.4 9.2 10.4 10.4 7.4 11.9L.3 5Z" fill="#483636"/></svg><div class="t" style="left:90.78px;top:338px;font-size:18px;line-height:18px;letter-spacing:-0.26px;">In Progress</div><svg style="left:257px;top:330px" width="24" height="24" viewBox="0 0 24 24"><circle cx="2.4" cy="2.6" r="1.7" fill="#8b8b8b"/><rect x="1.5" y="3" width="1.9" height="20.5" fill="#8b8b8b"/><path d="M3.6 4.6C8 1 12 2.2 16.5 4.2 19 5 21.5 3.6 23.6 2.2V14.6C21.5 16.4 19 17.8 16.5 16.8 12 14.8 8 13.8 3.6 17.2Z" fill="none" stroke="#8b8b8b" stroke-width="1"/><path d="M16.5 4.2V16.8" stroke="#8b8b8b" stroke-width="1" fill="none"/></svg><svg style="left:350px;top:330px" width="24" height="24" viewBox="0 0 24 24"><rect x="1" y=".8" width="22" height="22.6" rx="4.5" fill="#dcdcdc"/><path d="M1 5.8V5.3A4.5 4.5 0 0 1 5.5 .8H18.5A4.5 4.5 0 0 1 23 5.3V5.8Z" fill="#3d3d3d"/><rect x="1" y="11.6" width="22" height="1.6" fill="#aaa"/><rect x="1" y="14.8" width="22" height="1.6" fill="#aaa"/><rect x="1" y="18.2" width="22" height="1.6" fill="#aaa"/><rect x="4.8" y="5.8" width="1" height="17.6" fill="#777"/></svg><svg style="left:421.5px;top:330px" width="24" height="24" viewBox="0 0 24 24"><path d="M13 4.2H17V15.5L20.6 19.5V24H2.5Z" fill="#dadada"/><path d="M13 4.2H14V22L13 22.3Z" fill="#a9a9a9"/><path d="M1.6 4 13 .4V21.8L1.6 23.8Z" fill="#dadada"/><path d="M1.6 23.8 13 21.8 13 22.6 2.4 24.3Z" fill="#c4c4c4"/></svg><svg style="left:488px;top:329.4px" width="24" height="25" viewBox="0 0 24 25"><ellipse cx="12" cy="10.3" rx="12" ry="10" fill="#0d3d98"/><path d="M13.5 18.5C15.5 21.5 18 23.3 20.8 24.2 19.4 21.8 19 19.5 19.6 16.5Z" fill="#0d3d98"/><text x="12" y="16" font-size="16" font-weight="bold" fill="#fff" text-anchor="middle">?</text></svg><svg style="left:549.5px;top:330px" width="24" height="24" viewBox="0 0 24 24"><path d="M15.5 15.5 22 22" stroke="#9b9b9b" stroke-width="4.2" stroke-linecap="round"/><circle cx="9.2" cy="9.4" r="7.9" fill="rgba(255,255,255,.2)" stroke="#d4d4d4" stroke-width="1.9"/></svg><svg style="left:621.5px;top:330px" width="24" height="25" viewBox="0 0 24 25"><path d="M7.5 .8H16.5L20.4 4.8V19.4H7.5Z" fill="#fff" stroke="#000" stroke-width="1"/><path d="M16.5 .8V4.8H20.4" fill="#ddd" stroke="#000" stroke-width=".8"/><path d="M1.3 5H10.2L14.4 9.2V23.6H1.3Z" fill="#fff" stroke="#000" stroke-width="1"/><path d="M10.2 5V9.2H14.4" fill="#ddd" stroke="#000" stroke-width=".8"/><path d="M3.8 12.6H12M3.8 14.6H12M3.8 16.6H12M3.8 18.6H12M3.8 20.6H12" stroke="#777" stroke-width="1.1"/></svg><svg style="left:691px;top:330px" width="24" height="25" viewBox="0 0 24 25"><path d="M8.6 .6 9.2 4.6C15 4 21 7.5 23.4 14.6 19.8 10.8 14.5 9.6 10.2 10.6L10.8 14 2 7.2Z" fill="#d92626"/><path d="M15.4 24.4 14.8 20.4C9 21 3 17.5 .6 10.4 4.2 14.2 9.5 15.4 13.8 14.4L13.2 11 22 17.8Z" fill="#8bb83e"/></svg><div class="t" style="left:742.95px;top:338px;font-size:18px;line-height:18px;letter-spacing:-0.42px;">185626</div><div class="t" style="left:890.66px;top:338px;font-size:18px;line-height:18px;letter-spacing:-0.02px;">Maya Media Producti...</div><div class="t" style="left:1103.16px;top:338px;font-size:18px;line-height:18px;letter-spacing:-0.39px;">Friends 2</div><div class="t" style="left:1240.73px;top:338px;font-size:18px;line-height:18px;letter-spacing:-0.56px;">00:22:00</div><svg style="left:1379.2px;top:330.4px" width="24" height="25" viewBox="0 0 24 25"><ellipse cx="12" cy="10.3" rx="12" ry="10" fill="#0d3d98"/><path d="M13.5 18.5C15.5 21.5 18 23.3 20.8 24.2 19.4 21.8 19 19.5 19.6 16.5Z" fill="#0d3d98"/><text x="12" y="16" font-size="16" font-weight="bold" fill="#fff" text-anchor="middle">i</text></svg><div class="t" style="left:1434.16px;top:338px;font-size:18px;line-height:18px;letter-spacing:-0.39px;">Friends</div><div class="t" style="left:1555.8px;top:338px;font-size:18px;line-height:18px;">2</div><div class="t" style="left:1666.65px;top:338px;font-size:18px;line-height:18px;letter-spacing:-0.26px;">13</div><div class="t" style="left:1780.46px;top:338px;font-size:18px;line-height:18px;letter-spacing:-0.32px;">English</div><div class="t" style="left:1885.09px;top:338px;font-size:18px;line-height:18px;letter-spacing:-0.46px;">Spanish</div><div class="t" style="left:1986.25px;top:338px;font-size:18px;line-height:18px;letter-spacing:0.08px;">With script</div><svg style="left:2116.4px;top:330px" width="24.5" height="24.5" viewBox="0 0 24.5 24.5"><g transform="rotate(45 13.2 12)" fill="#92d050"><rect x="12.1" y="-5.2" width="2.2" height="6.5"/><rect x="6.7" y=".2" width="13" height="23.6" rx="6.5" ry="9"/><path d="M5.6 10.6 7.2 11.4H19.2L20.8 10.6V13.4L19.2 12.8H7.2L5.6 13.4Z"/><path d="M8.2 12.1H18.2" stroke="#6fa832" stroke-width=".8" stroke-dasharray="1.6 1" fill="none"/><rect x="12.1" y="23.2" width="2.2" height="7.4" rx="1"/></g></svg><div class="dm" style="left:2165.1px;top:338px"><span class="u m0">__</span><span class="m1">/</span><span class="u m2">__</span><span class="m3">/</span><span class="u m4">____</span> <span class="u m5">__</span><span class="m6">:</span><span class="u m7">__</span></div><div class="dm" style="left:2321.7px;top:338px"><span class="u m0">__</span><span class="m1">/</span><span class="u m2">__</span><span class="m3">/</span><span class="u m4">____</span> <span class="u m5">__</span><span class="m6">:</span><span class="u m7">__</span></div><div style="left:0;top:369px;width:2509px;height:46px;background:#4d4d4d"></div><div style="left:2154px;top:369px;width:156px;height:46px;background:linear-gradient(to bottom,#ffae1c 0,#ffab17 60%,#ffa40a 100%)"></div><svg style="left:27px;top:376px" width="24" height="24" viewBox="0 0 24 24"><path d="M5 .3 12 7.3 19 .3 23.7 5 16.7 12 23.7 19 19 23.7 12 16.7 5 23.7 .3 19 7.3 12 .3 5Z" fill="#2e1c1c"/><path d="M5 .3 12 7.3 19 .3 23.7 5 18.8 9.9C14.4 9.2 10.4 10.4 7.4 11.9L.3 5Z" fill="#483636"/></svg><div class="t" style="left:90.78px;top:384px;font-size:18px;line-height:18px;letter-spacing:-0.26px;">In Progress</div><svg style="left:257px;top:376px" width="24" height="24" viewBox="0 0 24 24"><circle cx="2.4" cy="2.6" r="1.7" fill="#8b8b8b"/><rect x="1.5" y="3" width="1.9" height="20.5" fill="#8b8b8b"/><path d="M3.6 4.6C8 1 12 2.2 16.5 4.2 19 5 21.5 3.6 23.6 2.2V14.6C21.5 16.4 19 17.8 16.5 16.8 12 14.8 8 13.8 3.6 17.2Z" fill="none" stroke="#8b8b8b" stroke-width="1"/><path d="M16.5 4.2V16.8" stroke="#8b8b8b" stroke-width="1" fill="none"/></svg><svg style="left:350px;top:376px" width="24" height="24" viewBox="0 0 24 24"><rect x="1" y=".8" width="22" height="22.6" rx="4.5" fill="#dcdcdc"/><path d="M1 5.8V5.3A4.5 4.5 0 0 1 5.5 .8H18.5A4.5 4.5 0 0 1 23 5.3V5.8Z" fill="#3d3d3d"/><rect x="1" y="11.6" width="22" height="1.6" fill="#aaa"/><rect x="1" y="14.8" width="22" height="1.6" fill="#aaa"/><rect x="1" y="18.2" width="22" height="1.6" fill="#aaa"/><rect x="4.8" y="5.8" width="1" height="17.6" fill="#777"/></svg><svg style="left:421.5px;top:376px" width="24" height="24" viewBox="0 0 24 24"><path d="M13 4.2H17V15.5L20.6 19.5V24H2.5Z" fill="#dadada"/><path d="M13 4.2H14V22L13 22.3Z" fill="#a9a9a9"/><path d="M1.6 4 13 .4V21.8L1.6 23.8Z" fill="#dadada"/><path d="M1.6 23.8 13 21.8 13 22.6 2.4 24.3Z" fill="#c4c4c4"/></svg><svg style="left:488px;top:375.4px" width="24" height="25" viewBox="0 0 24 25"><ellipse cx="12" cy="10.3" rx="12" ry="10" fill="#0d3d98"/><path d="M13.5 18.5C15.5 21.5 18 23.3 20.8 24.2 19.4 21.8 19 19.5 19.6 16.5Z" fill="#0d3d98"/><text x="12" y="16" font-size="16" font-weight="bold" fill="#fff" text-anchor="middle">?</text></svg><svg style="left:549.5px;top:376px" width="24" height="24" viewBox="0 0 24 24"><path d="M15.5 15.5 22 22" stroke="#9b9b9b" stroke-width="4.2" stroke-linecap="round"/><circle cx="9.2" cy="9.4" r="7.9" fill="rgba(255,255,255,.2)" stroke="#d4d4d4" stroke-width="1.9"/></svg><svg style="left:621.5px;top:376px" width="24" height="25" viewBox="0 0 24 25"><path d="M7.5 .8H16.5L20.4 4.8V19.4H7.5Z" fill="#fff" stroke="#000" stroke-width="1"/><path d="M16.5 .8V4.8H20.4" fill="#ddd" stroke="#000" stroke-width=".8"/><path d="M1.3 5H10.2L14.4 9.2V23.6H1.3Z" fill="#fff" stroke="#000" stroke-width="1"/><path d="M10.2 5V9.2H14.4" fill="#ddd" stroke="#000" stroke-width=".8"/><path d="M3.8 12.6H12M3.8 14.6H12M3.8 16.6H12M3.8 18.6H12M3.8 20.6H12" stroke="#777" stroke-width="1.1"/></svg><svg style="left:691px;top:376px" width="24" height="25" viewBox="0 0 24 25"><path d="M8.6 .6 9.2 4.6C15 4 21 7.5 23.4 14.6 19.8 10.8 14.5 9.6 10.2 10.6L10.8 14 2 7.2Z" fill="#d92626"/><path d="M15.4 24.4 14.8 20.4C9 21 3 17.5 .6 10.4 4.2 14.2 9.5 15.4 13.8 14.4L13.2 11 22 17.8Z" fill="#8bb83e"/></svg><div class="t" style="left:742.95px;top:384px;font-size:18px;line-height:18px;letter-spacing:-0.4px;">185627</div><div class="t" style="left:890.66px;top:384px;font-size:18px;line-height:18px;letter-spacing:-0.02px;">Maya Media Producti...</div><div class="t" style="left:1103.16px;top:384px;font-size:18px;line-height:18px;letter-spacing:-0.4px;">Friends 3</div><div class="t" style="left:1240.73px;top:384px;font-size:18px;line-height:18px;letter-spacing:-0.56px;">00:22:00</div><svg style="left:1379.2px;top:376.4px" width="24" height="25" viewBox="0 0 24 25"><ellipse cx="12" cy="10.3" rx="12" ry="10" fill="#0d3d98"/><path d="M13.5 18.5C15.5 21.5 18 23.3 20.8 24.2 19.4 21.8 19 19.5 19.6 16.5Z" fill="#0d3d98"/><text x="12" y="16" font-size="16" font-weight="bold" fill="#fff" text-anchor="middle">i</text></svg><div class="t" style="left:1434.16px;top:384px;font-size:18px;line-height:18px;letter-spacing:-0.39px;">Friends</div><div class="t" style="left:1556.03px;top:384px;font-size:18px;line-height:18px;">3</div><div class="t" style="left:1666.65px;top:384px;font-size:18px;line-height:18px;">1</div><div class="t" style="left:1780.46px;top:384px;font-size:18px;line-height:18px;letter-spacing:-0.32px;">English</div><div class="t" style="left:1885.09px;top:384px;font-size:18px;line-height:18px;letter-spacing:-0.46px;">Spanish</div><div class="t" style="left:1986.25px;top:384px;font-size:18px;line-height:18px;letter-spacing:0.24px;">Waiting for...</div><svg style="left:2116.4px;top:376px" width="24.5" height="24.5" viewBox="0 0 24.5 24.5"><g transform="rotate(45 13.2 12)" fill="#92d050"><rect x="12.1" y="-5.2" width="2.2" height="6.5"/><rect x="6.7" y=".2" width="13" height="23.6" rx="6.5" ry="9"/><path d="M5.6 10.6 7.2 11.4H19.2L20.8 10.6V13.4L19.2 12.8H7.2L5.6 13.4Z"/><path d="M8.2 12.1H18.2" stroke="#6fa832" stroke-width=".8" stroke-dasharray="1.6 1" fill="none"/><rect x="12.1" y="23.2" width="2.2" height="7.4" rx="1"/></g></svg><div class="dm" style="left:2165.1px;top:384px"><span class="u m0">__</span><span class="m1">/</span><span class="u m2">__</span><span class="m3">/</span><span class="u m4">____</span> <span class="u m5">__</span><span class="m6">:</span><span class="u m7">__</span></div><div class="dm" style="left:2321.7px;top:384px"><span class="u m0">__</span><span class="m1">/</span><span class="u m2">__</span><span class="m3">/</span><span class="u m4">____</span> <span class="u m5">__</span><span class="m6">:</span><span class="u m7">__</span></div><div style="left:0;top:415px;width:2509px;height:46px;background:#555"></div><div style="left:2154px;top:415px;width:156px;height:46px;background:linear-gradient(to bottom,#ffae1c 0,#ffab17 60%,#ffa40a 100%)"></div><svg style="left:27px;top:422px" width="24" height="24" viewBox="0 0 24 24"><path d="M5 .3 12 7.3 19 .3 23.7 5 16.7 12 23.7 19 19 23.7 12 16.7 5 23.7 .3 19 7.3 12 .3 5Z" fill="#2e1c1c"/><path d="M5 .3 12 7.3 19 .3 23.7 5 18.8 9.9C14.4 9.2 10.4 10.4 7.4 11.9L.3 5Z" fill="#483636"/></svg><div class="t" style="left:90.78px;top:430px;font-size:18px;line-height:18px;letter-spacing:-0.26px;">In Progress</div><svg style="left:257px;top:422px" width="24" height="24" viewBox="0 0 24 24"><circle cx="2.4" cy="2.6" r="1.7" fill="#8b8b8b"/><rect x="1.5" y="3" width="1.9" height="20.5" fill="#8b8b8b"/><path d="M3.6 4.6C8 1 12 2.2 16.5 4.2 19 5 21.5 3.6 23.6 2.2V14.6C21.5 16.4 19 17.8 16.5 16.8 12 14.8 8 13.8 3.6 17.2Z" fill="none" stroke="#8b8b8b" stroke-width="1"/><path d="M16.5 4.2V16.8" stroke="#8b8b8b" stroke-width="1" fill="none"/></svg><svg style="left:350px;top:422px" width="24" height="24" viewBox="0 0 24 24"><rect x="1" y=".8" width="22" height="22.6" rx="4.5" fill="#dcdcdc"/><path d="M1 5.8V5.3A4.5 4.5 0 0 1 5.5 .8H18.5A4.5 4.5 0 0 1 23 5.3V5.8Z" fill="#3d3d3d"/><rect x="1" y="11.6" width="22" height="1.6" fill="#aaa"/><rect x="1" y="14.8" width="22" height="1.6" fill="#aaa"/><rect x="1" y="18.2" width="22" height="1.6" fill="#aaa"/><rect x="4.8" y="5.8" width="1" height="17.6" fill="#777"/></svg><svg style="left:421.5px;top:422px" width="24" height="24" viewBox="0 0 24 24"><path d="M13 4.2H17V15.5L20.6 19.5V24H2.5Z" fill="#dadada"/><path d="M13 4.2H14V22L13 22.3Z" fill="#a9a9a9"/><path d="M1.6 4 13 .4V21.8L1.6 23.8Z" fill="#dadada"/><path d="M1.6 23.8 13 21.8 13 22.6 2.4 24.3Z" fill="#c4c4c4"/></svg><svg style="left:488px;top:421.4px" width="24" height="25" viewBox="0 0 24 25"><ellipse cx="12" cy="10.3" rx="12" ry="10" fill="#0d3d98"/><path d="M13.5 18.5C15.5 21.5 18 23.3 20.8 24.2 19.4 21.8 19 19.5 19.6 16.5Z" fill="#0d3d98"/><text x="12" y="16" font-size="16" font-weight="bold" fill="#fff" text-anchor="middle">?</text></svg><svg style="left:549.5px;top:422px" width="24" height="24" viewBox="0 0 24 24"><path d="M15.5 15.5 22 22" stroke="#9b9b9b" stroke-width="4.2" stroke-linecap="round"/><circle cx="9.2" cy="9.4" r="7.9" fill="rgba(255,255,255,.2)" stroke="#d4d4d4" stroke-width="1.9"/></svg><svg style="left:621.5px;top:422px" width="24" height="25" viewBox="0 0 24 25"><path d="M7.5 .8H16.5L20.4 4.8V19.4H7.5Z" fill="#fff" stroke="#000" stroke-width="1"/><path d="M16.5 .8V4.8H20.4" fill="#ddd" stroke="#000" stroke-width=".8"/><path d="M1.3 5H10.2L14.4 9.2V23.6H1.3Z" fill="#fff" stroke="#000" stroke-width="1"/><path d="M10.2 5V9.2H14.4" fill="#ddd" stroke="#000" stroke-width=".8"/><path d="M3.8 12.6H12M3.8 14.6H12M3.8 16.6H12M3.8 18.6H12M3.8 20.6H12" stroke="#777" stroke-width="1.1"/></svg><svg style="left:691px;top:422px" width="24" height="25" viewBox="0 0 24 25"><path d="M8.6 .6 9.2 4.6C15 4 21 7.5 23.4 14.6 19.8 10.8 14.5 9.6 10.2 10.6L10.8 14 2 7.2Z" fill="#d92626"/><path d="M15.4 24.4 14.8 20.4C9 21 3 17.5 .6 10.4 4.2 14.2 9.5 15.4 13.8 14.4L13.2 11 22 17.8Z" fill="#8bb83e"/></svg><div class="t" style="left:742.95px;top:430px;font-size:18px;line-height:18px;letter-spacing:-0.43px;">185628</div><div class="t" style="left:890.66px;top:430px;font-size:18px;line-height:18px;letter-spacing:-0.02px;">Maya Media Producti...</div><div class="t" style="left:1103.16px;top:430px;font-size:18px;line-height:18px;letter-spacing:-0.4px;">Friends 3</div><div class="t" style="left:1240.73px;top:430px;font-size:18px;line-height:18px;letter-spacing:-0.56px;">00:22:00</div><svg style="left:1379.2px;top:422.4px" width="24" height="25" viewBox="0 0 24 25"><ellipse cx="12" cy="10.3" rx="12" ry="10" fill="#0d3d98"/><path d="M13.5 18.5C15.5 21.5 18 23.3 20.8 24.2 19.4 21.8 19 19.5 19.6 16.5Z" fill="#0d3d98"/><text x="12" y="16" font-size="16" font-weight="bold" fill="#fff" text-anchor="middle">i</text></svg><div class="t" style="left:1434.16px;top:430px;font-size:18px;line-height:18px;letter-spacing:-0.39px;">Friends</div><div class="t" style="left:1556.03px;top:430px;font-size:18px;line-height:18px;">3</div><div class="t" style="left:1668.3px;top:430px;font-size:18px;line-height:18px;">2</div><div class="t" style="left:1780.46px;top:430px;font-size:18px;line-height:18px;letter-spacing:-0.32px;">English</div><div class="t" style="left:1885.09px;top:430px;font-size:18px;line-height:18px;letter-spacing:-0.46px;">Spanish</div><div class="t" style="left:1986.25px;top:430px;font-size:18px;line-height:18px;letter-spacing:0.24px;">Waiting for...</div><svg style="left:2116.4px;top:422px" width="24.5" height="24.5" viewBox="0 0 24.5 24.5"><g transform="rotate(45 13.2 12)" fill="#92d050"><rect x="12.1" y="-5.2" width="2.2" height="6.5"/><rect x="6.7" y=".2" width="13" height="23.6" rx="6.5" ry="9"/><path d="M5.6 10.6 7.2 11.4H19.2L20.8 10.6V13.4L19.2 12.8H7.2L5.6 13.4Z"/><path d="M8.2 12.1H18.2" stroke="#6fa832" stroke-width=".8" stroke-dasharray="1.6 1" fill="none"/><rect x="12.1" y="23.2" width="2.2" height="7.4" rx="1"/></g></svg><div class="dm" style="left:2165.1px;top:430px"><span class="u m0">__</span><span class="m1">/</span><span class="u m2">__</span><span class="m3">/</span><span class="u m4">____</span> <span class="u m5">__</span><span class="m6">:</span><span class="u m7">__</span></div><div class="dm" style="left:2321.7px;top:430px"><span class="u m0">__</span><span class="m1">/</span><span class="u m2">__</span><span class="m3">/</span><span class="u m4">____</span> <span class="u m5">__</span><span class="m6">:</span><span class="u m7">__</span></div><div style="left:0;top:461px;width:2509px;height:47px;background:#4d4d4d"></div><div style="left:2154px;top:461px;width:156px;height:47px;background:linear-gradient(to bottom,#ffae1c 0,#ffab17 60%,#ffa40a 100%)"></div><svg style="left:27px;top:468px" width="24" height="24" viewBox="0 0 24 24"><path d="M5 .3 12 7.3 19 .3 23.7 5 16.7 12 23.7 19 19 23.7 12 16.7 5 23.7 .3 19 7.3 12 .3 5Z" fill="#2e1c1c"/><path d="M5 .3 12 7.3 19 .3 23.7 5 18.8 9.9C14.4 9.2 10.4 10.4 7.4 11.9L.3 5Z" fill="#483636"/></svg><div class="t" style="left:90.78px;top:476px;font-size:18px;line-height:18px;letter-spacing:-0.26px;">In Progress</div><svg style="left:257px;top:468px" width="24" height="24" viewBox="0 0 24 24"><circle cx="2.4" cy="2.6" r="1.7" fill="#8b8b8b"/><rect x="1.5" y="3" width="1.9" height="20.5" fill="#8b8b8b"/><path d="M3.6 4.6C8 1 12 2.2 16.5 4.2 19 5 21.5 3.6 23.6 2.2V14.6C21.5 16.4 19 17.8 16.5 16.8 12 14.8 8 13.8 3.6 17.2Z" fill="none" stroke="#8b8b8b" stroke-width="1"/><path d="M16.5 4.2V16.8" stroke="#8b8b8b" stroke-width="1" fill="none"/></svg><svg style="left:350px;top:468px" width="24" height="24" viewBox="0 0 24 24"><rect x="1" y=".8" width="22" height="22.6" rx="4.5" fill="#dcdcdc"/><path d="M1 5.8V5.3A4.5 4.5 0 0 1 5.5 .8H18.5A4.5 4.5 0 0 1 23 5.3V5.8Z" fill="#3d3d3d"/><rect x="1" y="11.6" width="22" height="1.6" fill="#aaa"/><rect x="1" y="14.8" width="22" height="1.6" fill="#aaa"/><rect x="1" y="18.2" width="22" height="1.6" fill="#aaa"/><rect x="4.8" y="5.8" width="1" height="17.6" fill="#777"/></svg><svg style="left:421.5px;top:468px" width="24" height="24" viewBox="0 0 24 24"><path d="M13 4.2H17V15.5L20.6 19.5V24H2.5Z" fill="#dadada"/><path d="M13 4.2H14V22L13 22.3Z" fill="#a9a9a9"/><path d="M1.6 4 13 .4V21.8L1.6 23.8Z" fill="#dadada"/><path d="M1.6 23.8 13 21.8 13 22.6 2.4 24.3Z" fill="#c4c4c4"/></svg><svg style="left:488px;top:467.4px" width="24" height="25" viewBox="0 0 24 25"><ellipse cx="12" cy="10.3" rx="12" ry="10" fill="#0d3d98"/><path d="M13.5 18.5C15.5 21.5 18 23.3 20.8 24.2 19.4 21.8 19 19.5 19.6 16.5Z" fill="#0d3d98"/><text x="12" y="16" font-size="16" font-weight="bold" fill="#fff" text-anchor="middle">?</text></svg><svg style="left:549.5px;top:468px" width="24" height="24" viewBox="0 0 24 24"><path d="M15.5 15.5 22 22" stroke="#9b9b9b" stroke-width="4.2" stroke-linecap="round"/><circle cx="9.2" cy="9.4" r="7.9" fill="rgba(255,255,255,.2)" stroke="#d4d4d4" stroke-width="1.9"/></svg><svg style="left:621.5px;top:468px" width="24" height="25" viewBox="0 0 24 25"><path d="M7.5 .8H16.5L20.4 4.8V19.4H7.5Z" fill="#fff" stroke="#000" stroke-width="1"/><path d="M16.5 .8V4.8H20.4" fill="#ddd" stroke="#000" stroke-width=".8"/><path d="M1.3 5H10.2L14.4 9.2V23.6H1.3Z" fill="#fff" stroke="#000" stroke-width="1"/><path d="M10.2 5V9.2H14.4" fill="#ddd" stroke="#000" stroke-width=".8"/><path d="M3.8 12.6H12M3.8 14.6H12M3.8 16.6H12M3.8 18.6H12M3.8 20.6H12" stroke="#777" stroke-width="1.1"/></svg><svg style="left:691px;top:468px" width="24" height="25" viewBox="0 0 24 25"><path d="M8.6 .6 9.2 4.6C15 4 21 7.5 23.4 14.6 19.8 10.8 14.5 9.6 10.2 10.6L10.8 14 2 7.2Z" fill="#d92626"/><path d="M15.4 24.4 14.8 20.4C9 21 3 17.5 .6 10.4 4.2 14.2 9.5 15.4 13.8 14.4L13.2 11 22 17.8Z" fill="#8bb83e"/></svg><div class="t" style="left:742.95px;top:476px;font-size:18px;line-height:18px;letter-spacing:-0.41px;">185629</div><div class="t" style="left:890.66px;top:476px;font-size:18px;line-height:18px;letter-spacing:-0.02px;">Maya Media Producti...</div><div class="t" style="left:1103.16px;top:476px;font-size:18px;line-height:18px;letter-spacing:-0.4px;">Friends 3</div><div class="t" style="left:1240.73px;top:476px;font-size:18px;line-height:18px;letter-spacing:-0.56px;">00:22:00</div><svg style="left:1379.2px;top:468.4px" width="24" height="25" viewBox="0 0 24 25"><ellipse cx="12" cy="10.3" rx="12" ry="10" fill="#0d3d98"/><path d="M13.5 18.5C15.5 21.5 18 23.3 20.8 24.2 19.4 21.8 19 19.5 19.6 16.5Z" fill="#0d3d98"/><text x="12" y="16" font-size="16" font-weight="bold" fill="#fff" text-anchor="middle">i</text></svg><div class="t" style="left:1434.16px;top:476px;font-size:18px;line-height:18px;letter-spacing:-0.39px;">Friends</div><div class="t" style="left:1556.03px;top:476px;font-size:18px;line-height:18px;">3</div><div class="t" style="left:1668.53px;top:476px;font-size:18px;line-height:18px;">3</div><div class="t" style="left:1780.46px;top:476px;font-size:18px;line-height:18px;letter-spacing:-0.32px;">English</div><div class="t" style="left:1885.09px;top:476px;font-size:18px;line-height:18px;letter-spacing:-0.46px;">Spanish</div><div class="t" style="left:1986.25px;top:476px;font-size:18px;line-height:18px;letter-spacing:0.24px;">Waiting for...</div><svg style="left:2116.4px;top:468px" width="24.5" height="24.5" viewBox="0 0 24.5 24.5"><g transform="rotate(45 13.2 12)" fill="#92d050"><rect x="12.1" y="-5.2" width="2.2" height="6.5"/><rect x="6.7" y=".2" width="13" height="23.6" rx="6.5" ry="9"/><path d="M5.6 10.6 7.2 11.4H19.2L20.8 10.6V13.4L19.2 12.8H7.2L5.6 13.4Z"/><path d="M8.2 12.1H18.2" stroke="#6fa832" stroke-width=".8" stroke-dasharray="1.6 1" fill="none"/><rect x="12.1" y="23.2" width="2.2" height="7.4" rx="1"/></g></svg><div class="dm" style="left:2165.1px;top:476px"><span class="u m0">__</span><span class="m1">/</span><span class="u m2">__</span><span class="m3">/</span><span class="u m4">____</span> <span class="u m5">__</span><span class="m6">:</span><span class="u m7">__</span></div><div class="dm" style="left:2321.7px;top:476px"><span class="u m0">__</span><span class="m1">/</span><span class="u m2">__</span><span class="m3">/</span><span class="u m4">____</span> <span class="u m5">__</span><span class="m6">:</span><span class="u m7">__</span></div><div style="left:0;top:508px;width:2509px;height:46px;background:#555"></div><div style="left:2154px;top:508px;width:156px;height:46px;background:linear-gradient(to bottom,#ffae1c 0,#ffab17 60%,#ffa40a 100%)"></div><svg style="left:27px;top:515px" width="24" height="24" viewBox="0 0 24 24"><path d="M5 .3 12 7.3 19 .3 23.7 5 16.7 12 23.7 19 19 23.7 12 16.7 5 23.7 .3 19 7.3 12 .3 5Z" fill="#9a0000"/><path d="M5 .3 12 7.3 19 .3 23.7 5 18.8 9.9C14.4 9.2 10.4 10.4 7.4 11.9L.3 5Z" fill="#a81c1c"/></svg><div class="t" style="left:90.78px;top:522px;font-size:18px;line-height:18px;letter-spacing:-0.26px;">In Progress</div><svg style="left:257px;top:515px" width="24" height="24" viewBox="0 0 24 24"><circle cx="2.4" cy="2.6" r="1.7" fill="#8b8b8b"/><rect x="1.5" y="3" width="1.9" height="20.5" fill="#8b8b8b"/><path d="M3.6 4.6C8 1 12 2.2 16.5 4.2 19 5 21.5 3.6 23.6 2.2V14.6C21.5 16.4 19 17.8 16.5 16.8 12 14.8 8 13.8 3.6 17.2Z" fill="none" stroke="#8b8b8b" stroke-width="1"/><path d="M16.5 4.2V16.8" stroke="#8b8b8b" stroke-width="1" fill="none"/></svg><svg style="left:350px;top:515px" width="24" height="24" viewBox="0 0 24 24"><rect x="1" y=".8" width="22" height="22.6" rx="4.5" fill="#dcdcdc"/><path d="M1 5.8V5.3A4.5 4.5 0 0 1 5.5 .8H18.5A4.5 4.5 0 0 1 23 5.3V5.8Z" fill="#3d3d3d"/><rect x="1" y="11.6" width="22" height="1.6" fill="#aaa"/><rect x="1" y="14.8" width="22" height="1.6" fill="#aaa"/><rect x="1" y="18.2" width="22" height="1.6" fill="#aaa"/><rect x="4.8" y="5.8" width="1" height="17.6" fill="#777"/></svg><svg style="left:421.5px;top:515px" width="24" height="24" viewBox="0 0 24 24"><path d="M13 4.2H17V15.5L20.6 19.5V24H2.5Z" fill="#dadada"/><path d="M13 4.2H14V22L13 22.3Z" fill="#a9a9a9"/><path d="M1.6 4 13 .4V21.8L1.6 23.8Z" fill="#dadada"/><path d="M1.6 23.8 13 21.8 13 22.6 2.4 24.3Z" fill="#c4c4c4"/></svg><svg style="left:488px;top:514.4px" width="24" height="25" viewBox="0 0 24 25"><ellipse cx="12" cy="10.3" rx="12" ry="10" fill="#0d3d98"/><path d="M13.5 18.5C15.5 21.5 18 23.3 20.8 24.2 19.4 21.8 19 19.5 19.6 16.5Z" fill="#0d3d98"/><text x="12" y="16" font-size="16" font-weight="bold" fill="#fff" text-anchor="middle">?</text></svg><svg style="left:549.5px;top:515px" width="24" height="24" viewBox="0 0 24 24"><path d="M15.5 15.5 22 22" stroke="#9b9b9b" stroke-width="4.2" stroke-linecap="round"/><circle cx="9.2" cy="9.4" r="7.9" fill="rgba(255,255,255,.2)" stroke="#d4d4d4" stroke-width="1.9"/></svg><svg style="left:621.5px;top:515px" width="24" height="25" viewBox="0 0 24 25"><path d="M7.5 .8H16.5L20.4 4.8V19.4H7.5Z" fill="#fff" stroke="#000" stroke-width="1"/><path d="M16.5 .8V4.8H20.4" fill="#ddd" stroke="#000" stroke-width=".8"/><path d="M1.3 5H10.2L14.4 9.2V23.6H1.3Z" fill="#fff" stroke="#000" stroke-width="1"/><path d="M10.2 5V9.2H14.4" fill="#ddd" stroke="#000" stroke-width=".8"/><path d="M3.8 12.6H12M3.8 14.6H12M3.8 16.6H12M3.8 18.6H12M3.8 20.6H12" stroke="#777" stroke-width="1.1"/></svg><svg style="left:691px;top:515px" width="24" height="25" viewBox="0 0 24 25"><path d="M8.6 .6 9.2 4.6C15 4 21 7.5 23.4 14.6 19.8 10.8 14.5 9.6 10.2 10.6L10.8 14 2 7.2Z" fill="#d92626"/><path d="M15.4 24.4 14.8 20.4C9 21 3 17.5 .6 10.4 4.2 14.2 9.5 15.4 13.8 14.4L13.2 11 22 17.8Z" fill="#8bb83e"/></svg><div class="t" style="left:742.95px;top:522px;font-size:18px;line-height:18px;letter-spacing:-0.44px;">185630</div><div class="t" style="left:890.66px;top:522px;font-size:18px;line-height:18px;letter-spacing:-0.02px;">Maya Media Producti...</div><div class="t" style="left:1103.16px;top:522px;font-size:18px;line-height:18px;letter-spacing:-0.4px;">Friends 3</div><div class="t" style="left:1240.73px;top:522px;font-size:18px;line-height:18px;letter-spacing:-0.56px;">00:22:00</div><svg style="left:1379.2px;top:515.4px" width="24" height="25" viewBox="0 0 24 25"><ellipse cx="12" cy="10.3" rx="12" ry="10" fill="#0d3d98"/><path d="M13.5 18.5C15.5 21.5 18 23.3 20.8 24.2 19.4 21.8 19 19.5 19.6 16.5Z" fill="#0d3d98"/><text x="12" y="16" font-size="16" font-weight="bold" fill="#fff" text-anchor="middle">i</text></svg><div class="t" style="left:1434.16px;top:522px;font-size:18px;line-height:18px;letter-spacing:-0.39px;">Friends</div><div class="t" style="left:1556.03px;top:522px;font-size:18px;line-height:18px;">3</div><div class="t" style="left:1668.8px;top:522px;font-size:18px;line-height:18px;">4</div><div class="t" style="left:1780.46px;top:522px;font-size:18px;line-height:18px;letter-spacing:-0.32px;">English</div><div class="t" style="left:1885.09px;top:522px;font-size:18px;line-height:18px;letter-spacing:-0.46px;">Spanish</div><div class="t" style="left:1986.25px;top:522px;font-size:18px;line-height:18px;letter-spacing:0.24px;">Waiting for...</div><svg style="left:2116.4px;top:515px" width="24.5" height="24.5" viewBox="0 0 24.5 24.5"><g transform="rotate(45 13.2 12)" fill="#92d050"><rect x="12.1" y="-5.2" width="2.2" height="6.5"/><rect x="6.7" y=".2" width="13" height="23.6" rx="6.5" ry="9"/><path d="M5.6 10.6 7.2 11.4H19.2L20.8 10.6V13.4L19.2 12.8H7.2L5.6 13.4Z"/><path d="M8.2 12.1H18.2" stroke="#6fa832" stroke-width=".8" stroke-dasharray="1.6 1" fill="none"/><rect x="12.1" y="23.2" width="2.2" height="7.4" rx="1"/></g></svg><div class="dm" style="left:2165.1px;top:522px"><span class="u m0">__</span><span class="m1">/</span><span class="u m2">__</span><span class="m3">/</span><span class="u m4">____</span> <span class="u m5">__</span><span class="m6">:</span><span class="u m7">__</span></div><div class="dm" style="left:2321.7px;top:522px"><span class="u m0">__</span><span class="m1">/</span><span class="u m2">__</span><span class="m3">/</span><span class="u m4">____</span> <span class="u m5">__</span><span class="m6">:</span><span class="u m7">__</span></div><div style="left:0;top:554px;width:2509px;height:46px;background:#4d4d4d"></div><div style="left:2154px;top:554px;width:156px;height:46px;background:linear-gradient(to bottom,#ffae1c 0,#ffab17 60%,#ffa40a 100%)"></div><svg style="left:27px;top:561px" width="24" height="24" viewBox="0 0 24 24"><path d="M5 .3 12 7.3 19 .3 23.7 5 16.7 12 23.7 19 19 23.7 12 16.7 5 23.7 .3 19 7.3 12 .3 5Z" fill="#9a0000"/><path d="M5 .3 12 7.3 19 .3 23.7 5 18.8 9.9C14.4 9.2 10.4 10.4 7.4 11.9L.3 5Z" fill="#a81c1c"/></svg><div class="t" style="left:90.78px;top:568px;font-size:18px;line-height:18px;letter-spacing:-0.26px;">In Progress</div><svg style="left:257px;top:561px" width="24" height="24" viewBox="0 0 24 24"><circle cx="2.4" cy="2.6" r="1.7" fill="#8b8b8b"/><rect x="1.5" y="3" width="1.9" height="20.5" fill="#8b8b8b"/><path d="M3.6 4.6C8 1 12 2.2 16.5 4.2 19 5 21.5 3.6 23.6 2.2V14.6C21.5 16.4 19 17.8 16.5 16.8 12 14.8 8 13.8 3.6 17.2Z" fill="none" stroke="#8b8b8b" stroke-width="1"/><path d="M16.5 4.2V16.8" stroke="#8b8b8b" stroke-width="1" fill="none"/></svg><svg style="left:350px;top:561px" width="24" height="24" viewBox="0 0 24 24"><rect x="1" y=".8" width="22" height="22.6" rx="4.5" fill="#dcdcdc"/><path d="M1 5.8V5.3A4.5 4.5 0 0 1 5.5 .8H18.5A4.5 4.5 0 0 1 23 5.3V5.8Z" fill="#3d3d3d"/><rect x="1" y="11.6" width="22" height="1.6" fill="#aaa"/><rect x="1" y="14.8" width="22" height="1.6" fill="#aaa"/><rect x="1" y="18.2" width="22" height="1.6" fill="#aaa"/><rect x="4.8" y="5.8" width="1" height="17.6" fill="#777"/></svg><svg style="left:421.5px;top:561px" width="24" height="24" viewBox="0 0 24 24"><path d="M13 4.2H17V15.5L20.6 19.5V24H2.5Z" fill="#dadada"/><path d="M13 4.2H14V22L13 22.3Z" fill="#a9a9a9"/><path d="M1.6 4 13 .4V21.8L1.6 23.8Z" fill="#dadada"/><path d="M1.6 23.8 13 21.8 13 22.6 2.4 24.3Z" fill="#c4c4c4"/></svg><svg style="left:488px;top:560.4px" width="24" height="25" viewBox="0 0 24 25"><ellipse cx="12" cy="10.3" rx="12" ry="10" fill="#0d3d98"/><path d="M13.5 18.5C15.5 21.5 18 23.3 20.8 24.2 19.4 21.8 19 19.5 19.6 16.5Z" fill="#0d3d98"/><text x="12" y="16" font-size="16" font-weight="bold" fill="#fff" text-anchor="middle">?</text></svg><svg style="left:549.5px;top:561px" width="24" height="24" viewBox="0 0 24 24"><path d="M15.5 15.5 22 22" stroke="#9b9b9b" stroke-width="4.2" stroke-linecap="round"/><circle cx="9.2" cy="9.4" r="7.9" fill="rgba(255,255,255,.2)" stroke="#d4d4d4" stroke-width="1.9"/></svg><svg style="left:621.5px;top:561px" width="24" height="25" viewBox="0 0 24 25"><path d="M7.5 .8H16.5L20.4 4.8V19.4H7.5Z" fill="#fff" stroke="#000" stroke-width="1"/><path d="M16.5 .8V4.8H20.4" fill="#ddd" stroke="#000" stroke-width=".8"/><path d="M1.3 5H10.2L14.4 9.2V23.6H1.3Z" fill="#fff" stroke="#000" stroke-width="1"/><path d="M10.2 5V9.2H14.4" fill="#ddd" stroke="#000" stroke-width=".8"/><path d="M3.8 12.6H12M3.8 14.6H12M3.8 16.6H12M3.8 18.6H12M3.8 20.6H12" stroke="#777" stroke-width="1.1"/></svg><svg style="left:691px;top:561px" width="24" height="25" viewBox="0 0 24 25"><path d="M8.6 .6 9.2 4.6C15 4 21 7.5 23.4 14.6 19.8 10.8 14.5 9.6 10.2 10.6L10.8 14 2 7.2Z" fill="#d92626"/><path d="M15.4 24.4 14.8 20.4C9 21 3 17.5 .6 10.4 4.2 14.2 9.5 15.4 13.8 14.4L13.2 11 22 17.8Z" fill="#8bb83e"/></svg><div class="t" style="left:742.95px;top:568px;font-size:18px;line-height:18px;letter-spacing:-0.4px;">185631</div><div class="t" style="left:890.66px;top:568px;font-size:18px;line-height:18px;letter-spacing:-0.02px;">Maya Media Producti...</div><div class="t" style="left:1103.16px;top:568px;font-size:18px;line-height:18px;letter-spacing:-0.4px;">Friends 3</div><div class="t" style="left:1240.73px;top:568px;font-size:18px;line-height:18px;letter-spacing:-0.56px;">00:22:00</div><svg style="left:1379.2px;top:561.4px" width="24" height="25" viewBox="0 0 24 25"><ellipse cx="12" cy="10.3" rx="12" ry="10" fill="#0d3d98"/><path d="M13.5 18.5C15.5 21.5 18 23.3 20.8 24.2 19.4 21.8 19 19.5 19.6 16.5Z" fill="#0d3d98"/><text x="12" y="16" font-size="16" font-weight="bold" fill="#fff" text-anchor="middle">i</text></svg><div class="t" style="left:1434.16px;top:568px;font-size:18px;line-height:18px;letter-spacing:-0.39px;">Friends</div><div class="t" style="left:1556.03px;top:568px;font-size:18px;line-height:18px;">3</div><div class="t" style="left:1668.48px;top:568px;font-size:18px;line-height:18px;">5</div><div class="t" style="left:1780.46px;top:568px;font-size:18px;line-height:18px;letter-spacing:-0.32px;">English</div><div class="t" style="left:1885.09px;top:568px;font-size:18px;line-height:18px;letter-spacing:-0.46px;">Spanish</div><div class="t" style="left:1986.25px;top:568px;font-size:18px;line-height:18px;letter-spacing:0.08px;">With script</div><svg style="left:2116.4px;top:561px" width="24.5" height="24.5" viewBox="0 0 24.5 24.5"><g transform="rotate(45 13.2 12)" fill="#92d050"><rect x="12.1" y="-5.2" width="2.2" height="6.5"/><rect x="6.7" y=".2" width="13" height="23.6" rx="6.5" ry="9"/><path d="M5.6 10.6 7.2 11.4H19.2L20.8 10.6V13.4L19.2 12.8H7.2L5.6 13.4Z"/><path d="M8.2 12.1H18.2" stroke="#6fa832" stroke-width=".8" stroke-dasharray="1.6 1" fill="none"/><rect x="12.1" y="23.2" width="2.2" height="7.4" rx="1"/></g></svg><div class="dm" style="left:2165.1px;top:568px"><span class="u m0">__</span><span class="m1">/</span><span class="u m2">__</span><span class="m3">/</span><span class="u m4">____</span> <span class="u m5">__</span><span class="m6">:</span><span class="u m7">__</span></div><div class="dm" style="left:2321.7px;top:568px"><span class="u m0">__</span><span class="m1">/</span><span class="u m2">__</span><span class="m3">/</span><span class="u m4">____</span> <span class="u m5">__</span><span class="m6">:</span><span class="u m7">__</span></div><div style="left:0;top:600px;width:2509px;height:46px;background:#555"></div><svg style="left:27px;top:607px" width="24" height="24" viewBox="0 0 24 24"><path d="M5 .3 12 7.3 19 .3 23.7 5 16.7 12 23.7 19 19 23.7 12 16.7 5 23.7 .3 19 7.3 12 .3 5Z" fill="#9a0000"/><path d="M5 .3 12 7.3 19 .3 23.7 5 18.8 9.9C14.4 9.2 10.4 10.4 7.4 11.9L.3 5Z" fill="#a81c1c"/></svg><div class="t" style="left:90.78px;top:615px;font-size:18px;line-height:18px;letter-spacing:-0.26px;">In Progress</div><svg style="left:257px;top:607px" width="24" height="24" viewBox="0 0 24 24"><circle cx="2.4" cy="2.6" r="1.7" fill="#8b8b8b"/><rect x="1.5" y="3" width="1.9" height="20.5" fill="#8b8b8b"/><path d="M3.6 4.6C8 1 12 2.2 16.5 4.2 19 5 21.5 3.6 23.6 2.2V14.6C21.5 16.4 19 17.8 16.5 16.8 12 14.8 8 13.8 3.6 17.2Z" fill="none" stroke="#8b8b8b" stroke-width="1"/><path d="M16.5 4.2V16.8" stroke="#8b8b8b" stroke-width="1" fill="none"/></svg><svg style="left:350px;top:607px" width="24" height="24" viewBox="0 0 24 24"><rect x="1" y=".8" width="22" height="22.6" rx="4.5" fill="#dcdcdc"/><path d="M1 5.8V5.3A4.5 4.5 0 0 1 5.5 .8H18.5A4.5 4.5 0 0 1 23 5.3V5.8Z" fill="#3d3d3d"/><rect x="1" y="11.6" width="22" height="1.6" fill="#aaa"/><rect x="1" y="14.8" width="22" height="1.6" fill="#aaa"/><rect x="1" y="18.2" width="22" height="1.6" fill="#aaa"/><rect x="4.8" y="5.8" width="1" height="17.6" fill="#777"/></svg><svg style="left:421.5px;top:607px" width="24" height="24" viewBox="0 0 24 24"><path d="M13 4.2H17V15.5L20.6 19.5V24H2.5Z" fill="#dadada"/><path d="M13 4.2H14V22L13 22.3Z" fill="#a9a9a9"/><path d="M1.6 4 13 .4V21.8L1.6 23.8Z" fill="#dadada"/><path d="M1.6 23.8 13 21.8 13 22.6 2.4 24.3Z" fill="#c4c4c4"/></svg><svg style="left:488px;top:606.4px" width="24" height="25" viewBox="0 0 24 25"><ellipse cx="12" cy="10.3" rx="12" ry="10" fill="#0d3d98"/><path d="M13.5 18.5C15.5 21.5 18 23.3 20.8 24.2 19.4 21.8 19 19.5 19.6 16.5Z" fill="#0d3d98"/><text x="12" y="16" font-size="16" font-weight="bold" fill="#fff" text-anchor="middle">?</text></svg><svg style="left:549.5px;top:607px" width="24" height="24" viewBox="0 0 24 24"><path d="M15.5 15.5 22 22" stroke="#9b9b9b" stroke-width="4.2" stroke-linecap="round"/><circle cx="9.2" cy="9.4" r="7.9" fill="rgba(255,255,255,.2)" stroke="#d4d4d4" stroke-width="1.9"/></svg><svg style="left:621.5px;top:607px" width="24" height="25" viewBox="0 0 24 25"><path d="M7.5 .8H16.5L20.4 4.8V19.4H7.5Z" fill="#fff" stroke="#000" stroke-width="1"/><path d="M16.5 .8V4.8H20.4" fill="#ddd" stroke="#000" stroke-width=".8"/><path d="M1.3 5H10.2L14.4 9.2V23.6H1.3Z" fill="#fff" stroke="#000" stroke-width="1"/><path d="M10.2 5V9.2H14.4" fill="#ddd" stroke="#000" stroke-width=".8"/><path d="M3.8 12.6H12M3.8 14.6H12M3.8 16.6H12M3.8 18.6H12M3.8 20.6H12" stroke="#777" stroke-width="1.1"/></svg><svg style="left:691px;top:607px" width="24" height="25" viewBox="0 0 24 25"><path d="M8.6 .6 9.2 4.6C15 4 21 7.5 23.4 14.6 19.8 10.8 14.5 9.6 10.2 10.6L10.8 14 2 7.2Z" fill="#d92626"/><path d="M15.4 24.4 14.8 20.4C9 21 3 17.5 .6 10.4 4.2 14.2 9.5 15.4 13.8 14.4L13.2 11 22 17.8Z" fill="#8bb83e"/></svg><div class="t" style="left:742.95px;top:615px;font-size:18px;line-height:18px;letter-spacing:-0.4px;">185632</div><div class="t" style="left:890.66px;top:615px;font-size:18px;line-height:18px;letter-spacing:-0.02px;">Maya Media Producti...</div><div class="t" style="left:1103.16px;top:615px;font-size:18px;line-height:18px;letter-spacing:-0.4px;">Friends 3</div><div class="t" style="left:1240.73px;top:615px;font-size:18px;line-height:18px;letter-spacing:-0.56px;">00:22:00</div><svg style="left:1379.2px;top:607.4px" width="24" height="25" viewBox="0 0 24 25"><ellipse cx="12" cy="10.3" rx="12" ry="10" fill="#0d3d98"/><path d="M13.5 18.5C15.5 21.5 18 23.3 20.8 24.2 19.4 21.8 19 19.5 19.6 16.5Z" fill="#0d3d98"/><text x="12" y="16" font-size="16" font-weight="bold" fill="#fff" text-anchor="middle">i</text></svg><div class="t" style="left:1434.16px;top:615px;font-size:18px;line-height:18px;letter-spacing:-0.39px;">Friends</div><div class="t" style="left:1556.03px;top:615px;font-size:18px;line-height:18px;">3</div><div class="t" style="left:1668.3px;top:615px;font-size:18px;line-height:18px;">6</div><div class="t" style="left:1780.46px;top:615px;font-size:18px;line-height:18px;letter-spacing:-0.32px;">English</div><div class="t" style="left:1885.09px;top:615px;font-size:18px;line-height:18px;letter-spacing:-0.46px;">Spanish</div><div class="t" style="left:1986.25px;top:615px;font-size:18px;line-height:18px;letter-spacing:0.08px;">With script</div><svg style="left:2116.4px;top:607px" width="24.5" height="24.5" viewBox="0 0 24.5 24.5"><g transform="rotate(45 13.2 12)" fill="#92d050"><rect x="12.1" y="-5.2" width="2.2" height="6.5"/><rect x="6.7" y=".2" width="13" height="23.6" rx="6.5" ry="9"/><path d="M5.6 10.6 7.2 11.4H19.2L20.8 10.6V13.4L19.2 12.8H7.2L5.6 13.4Z"/><path d="M8.2 12.1H18.2" stroke="#6fa832" stroke-width=".8" stroke-dasharray="1.6 1" fill="none"/><rect x="12.1" y="23.2" width="2.2" height="7.4" rx="1"/></g></svg><div class="dm" style="left:2165.1px;top:615px"><span class="u m0">__</span><span class="m1">/</span><span class="u m2">__</span><span class="m3">/</span><span class="u m4">____</span> <span class="u m5">__</span><span class="m6">:</span><span class="u m7">__</span></div><div class="dm" style="left:2321.7px;top:615px"><span class="u m0">__</span><span class="m1">/</span><span class="u m2">__</span><span class="m3">/</span><span class="u m4">____</span> <span class="u m5">__</span><span class="m6">:</span><span class="u m7">__</span></div><div style="left:0;top:646px;width:2509px;height:46px;background:#4d4d4d"></div><svg style="left:27px;top:653px" width="24" height="24" viewBox="0 0 24 24"><path d="M5 .3 12 7.3 19 .3 23.7 5 16.7 12 23.7 19 19 23.7 12 16.7 5 23.7 .3 19 7.3 12 .3 5Z" fill="#9a0000"/><path d="M5 .3 12 7.3 19 .3 23.7 5 18.8 9.9C14.4 9.2 10.4 10.4 7.4 11.9L.3 5Z" fill="#a81c1c"/></svg><div class="t" style="left:90.78px;top:661px;font-size:18px;line-height:18px;letter-spacing:-0.26px;">In Progress</div><svg style="left:257px;top:653px" width="24" height="24" viewBox="0 0 24 24"><circle cx="2.4" cy="2.6" r="1.7" fill="#8b8b8b"/><rect x="1.5" y="3" width="1.9" height="20.5" fill="#8b8b8b"/><path d="M3.6 4.6C8 1 12 2.2 16.5 4.2 19 5 21.5 3.6 23.6 2.2V14.6C21.5 16.4 19 17.8 16.5 16.8 12 14.8 8 13.8 3.6 17.2Z" fill="none" stroke="#8b8b8b" stroke-width="1"/><path d="M16.5 4.2V16.8" stroke="#8b8b8b" stroke-width="1" fill="none"/></svg><svg style="left:350px;top:653px" width="24" height="24" viewBox="0 0 24 24"><rect x="1" y=".8" width="22" height="22.6" rx="4.5" fill="#dcdcdc"/><path d="M1 5.8V5.3A4.5 4.5 0 0 1 5.5 .8H18.5A4.5 4.5 0 0 1 23 5.3V5.8Z" fill="#3d3d3d"/><rect x="1" y="11.6" width="22" height="1.6" fill="#aaa"/><rect x="1" y="14.8" width="22" height="1.6" fill="#aaa"/><rect x="1" y="18.2" width="22" height="1.6" fill="#aaa"/><rect x="4.8" y="5.8" width="1" height="17.6" fill="#777"/></svg><svg style="left:421.5px;top:653px" width="24" height="24" viewBox="0 0 24 24"><path d="M13 4.2H17V15.5L20.6 19.5V24H2.5Z" fill="#dadada"/><path d="M13 4.2H14V22L13 22.3Z" fill="#a9a9a9"/><path d="M1.6 4 13 .4V21.8L1.6 23.8Z" fill="#dadada"/><path d="M1.6 23.8 13 21.8 13 22.6 2.4 24.3Z" fill="#c4c4c4"/></svg><svg style="left:488px;top:652.4px" width="24" height="25" viewBox="0 0 24 25"><ellipse cx="12" cy="10.3" rx="12" ry="10" fill="#0d3d98"/><path d="M13.5 18.5C15.5 21.5 18 23.3 20.8 24.2 19.4 21.8 19 19.5 19.6 16.5Z" fill="#0d3d98"/><text x="12" y="16" font-size="16" font-weight="bold" fill="#fff" text-anchor="middle">?</text></svg><svg style="left:549.5px;top:653px" width="24" height="24" viewBox="0 0 24 24"><path d="M15.5 15.5 22 22" stroke="#9b9b9b" stroke-width="4.2" stroke-linecap="round"/><circle cx="9.2" cy="9.4" r="7.9" fill="rgba(255,255,255,.2)" stroke="#d4d4d4" stroke-width="1.9"/></svg><svg style="left:621.5px;top:653px" width="24" height="25" viewBox="0 0 24 25"><path d="M7.5 .8H16.5L20.4 4.8V19.4H7.5Z" fill="#fff" stroke="#000" stroke-width="1"/><path d="M16.5 .8V4.8H20.4" fill="#ddd" stroke="#000" stroke-width=".8"/><path d="M1.3 5H10.2L14.4 9.2V23.6H1.3Z" fill="#fff" stroke="#000" stroke-width="1"/><path d="M10.2 5V9.2H14.4" fill="#ddd" stroke="#000" stroke-width=".8"/><path d="M3.8 12.6H12M3.8 14.6H12M3.8 16.6H12M3.8 18.6H12M3.8 20.6H12" stroke="#777" stroke-width="1.1"/></svg><svg style="left:691px;top:653px" width="24" height="25" viewBox="0 0 24 25"><path d="M8.6 .6 9.2 4.6C15 4 21 7.5 23.4 14.6 19.8 10.8 14.5 9.6 10.2 10.6L10.8 14 2 7.2Z" fill="#d92626"/><path d="M15.4 24.4 14.8 20.4C9 21 3 17.5 .6 10.4 4.2 14.2 9.5 15.4 13.8 14.4L13.2 11 22 17.8Z" fill="#8bb83e"/></svg><div class="t" style="left:742.95px;top:661px;font-size:18px;line-height:18px;letter-spacing:-0.42px;">185633</div><div class="t" style="left:890.66px;top:661px;font-size:18px;line-height:18px;letter-spacing:-0.02px;">Maya Media Producti...</div><div class="t" style="left:1103.16px;top:661px;font-size:18px;line-height:18px;letter-spacing:-0.4px;">Friends 3</div><div class="t" style="left:1240.73px;top:661px;font-size:18px;line-height:18px;letter-spacing:-0.56px;">00:22:00</div><svg style="left:1379.2px;top:653.4px" width="24" height="25" viewBox="0 0 24 25"><ellipse cx="12" cy="10.3" rx="12" ry="10" fill="#0d3d98"/><path d="M13.5 18.5C15.5 21.5 18 23.3 20.8 24.2 19.4 21.8 19 19.5 19.6 16.5Z" fill="#0d3d98"/><text x="12" y="16" font-size="16" font-weight="bold" fill="#fff" text-anchor="middle">i</text></svg><div class="t" style="left:1434.16px;top:661px;font-size:18px;line-height:18px;letter-spacing:-0.39px;">Friends</div><div class="t" style="left:1556.03px;top:661px;font-size:18px;line-height:18px;">3</div><div class="t" style="left:1668.3px;top:661px;font-size:18px;line-height:18px;">7</div><div class="t" style="left:1780.46px;top:661px;font-size:18px;line-height:18px;letter-spacing:-0.32px;">English</div><div class="t" style="left:1885.09px;top:661px;font-size:18px;line-height:18px;letter-spacing:-0.46px;">Spanish</div><div class="t" style="left:1986.25px;top:661px;font-size:18px;line-height:18px;letter-spacing:0.08px;">With script</div><svg style="left:2116.4px;top:653px" width="24.5" height="24.5" viewBox="0 0 24.5 24.5"><g transform="rotate(45 13.2 12)" fill="#92d050"><rect x="12.1" y="-5.2" width="2.2" height="6.5"/><rect x="6.7" y=".2" width="13" height="23.6" rx="6.5" ry="9"/><path d="M5.6 10.6 7.2 11.4H19.2L20.8 10.6V13.4L19.2 12.8H7.2L5.6 13.4Z"/><path d="M8.2 12.1H18.2" stroke="#6fa832" stroke-width=".8" stroke-dasharray="1.6 1" fill="none"/><rect x="12.1" y="23.2" width="2.2" height="7.4" rx="1"/></g></svg><div class="dm" style="left:2165.1px;top:661px"><span class="u m0">__</span><span class="m1">/</span><span class="u m2">__</span><span class="m3">/</span><span class="u m4">____</span> <span class="u m5">__</span><span class="m6">:</span><span class="u m7">__</span></div><div class="dm" style="left:2321.7px;top:661px"><span class="u m0">__</span><span class="m1">/</span><span class="u m2">__</span><span class="m3">/</span><span class="u m4">____</span> <span class="u m5">__</span><span class="m6">:</span><span class="u m7">__</span></div><div style="left:0;top:692px;width:2509px;height:46px;background:#555"></div><svg style="left:27px;top:699px" width="24" height="24" viewBox="0 0 24 24"><path d="M5 .3 12 7.3 19 .3 23.7 5 16.7 12 23.7 19 19 23.7 12 16.7 5 23.7 .3 19 7.3 12 .3 5Z" fill="#9a0000"/><path d="M5 .3 12 7.3 19 .3 23.7 5 18.8 9.9C14.4 9.2 10.4 10.4 7.4 11.9L.3 5Z" fill="#a81c1c"/></svg><div class="t" style="left:90.78px;top:707px;font-size:18px;line-height:18px;letter-spacing:-0.26px;">In Progress</div><svg style="left:257px;top:699px" width="24" height="24" viewBox="0 0 24 24"><circle cx="2.4" cy="2.6" r="1.7" fill="#8b8b8b"/><rect x="1.5" y="3" width="1.9" height="20.5" fill="#8b8b8b"/><path d="M3.6 4.6C8 1 12 2.2 16.5 4.2 19 5 21.5 3.6 23.6 2.2V14.6C21.5 16.4 19 17.8 16.5 16.8 12 14.8 8 13.8 3.6 17.2Z" fill="none" stroke="#8b8b8b" stroke-width="1"/><path d="M16.5 4.2V16.8" stroke="#8b8b8b" stroke-width="1" fill="none"/></svg><svg style="left:350px;top:699px" width="24" height="24" viewBox="0 0 24 24"><rect x="1" y=".8" width="22" height="22.6" rx="4.5" fill="#dcdcdc"/><path d="M1 5.8V5.3A4.5 4.5 0 0 1 5.5 .8H18.5A4.5 4.5 0 0 1 23 5.3V5.8Z" fill="#3d3d3d"/><rect x="1" y="11.6" width="22" height="1.6" fill="#aaa"/><rect x="1" y="14.8" width="22" height="1.6" fill="#aaa"/><rect x="1" y="18.2" width="22" height="1.6" fill="#aaa"/><rect x="4.8" y="5.8" width="1" height="17.6" fill="#777"/></svg><svg style="left:421.5px;top:699px" width="24" height="24" viewBox="0 0 24 24"><path d="M13 4.2H17V15.5L20.6 19.5V24H2.5Z" fill="#dadada"/><path d="M13 4.2H14V22L13 22.3Z" fill="#a9a9a9"/><path d="M1.6 4 13 .4V21.8L1.6 23.8Z" fill="#dadada"/><path d="M1.6 23.8 13 21.8 13 22.6 2.4 24.3Z" fill="#c4c4c4"/></svg><svg style="left:488px;top:698.4px" width="24" height="25" viewBox="0 0 24 25"><ellipse cx="12" cy="10.3" rx="12" ry="10" fill="#0d3d98"/><path d="M13.5 18.5C15.5 21.5 18 23.3 20.8 24.2 19.4 21.8 19 19.5 19.6 16.5Z" fill="#0d3d98"/><text x="12" y="16" font-size="16" font-weight="bold" fill="#fff" text-anchor="middle">?</text></svg><svg style="left:549.5px;top:699px" width="24" height="24" viewBox="0 0 24 24"><path d="M15.5 15.5 22 22" stroke="#9b9b9b" stroke-width="4.2" stroke-linecap="round"/><circle cx="9.2" cy="9.4" r="7.9" fill="rgba(255,255,255,.2)" stroke="#d4d4d4" stroke-width="1.9"/></svg><svg style="left:621.5px;top:699px" width="24" height="25" viewBox="0 0 24 25"><path d="M7.5 .8H16.5L20.4 4.8V19.4H7.5Z" fill="#fff" stroke="#000" stroke-width="1"/><path d="M16.5 .8V4.8H20.4" fill="#ddd" stroke="#000" stroke-width=".8"/><path d="M1.3 5H10.2L14.4 9.2V23.6H1.3Z" fill="#fff" stroke="#000" stroke-width="1"/><path d="M10.2 5V9.2H14.4" fill="#ddd" stroke="#000" stroke-width=".8"/><path d="M3.8 12.6H12M3.8 14.6H12M3.8 16.6H12M3.8 18.6H12M3.8 20.6H12" stroke="#777" stroke-width="1.1"/></svg><svg style="left:691px;top:699px" width="24" height="25" viewBox="0 0 24 25"><path d="M8.6 .6 9.2 4.6C15 4 21 7.5 23.4 14.6 19.8 10.8 14.5 9.6 10.2 10.6L10.8 14 2 7.2Z" fill="#d92626"/><path d="M15.4 24.4 14.8 20.4C9 21 3 17.5 .6 10.4 4.2 14.2 9.5 15.4 13.8 14.4L13.2 11 22 17.8Z" fill="#8bb83e"/></svg><div class="t" style="left:742.95px;top:707px;font-size:18px;line-height:18px;letter-spacing:-0.48px;">185634</div><div class="t" style="left:890.66px;top:707px;font-size:18px;line-height:18px;letter-spacing:-0.02px;">Maya Media Producti...</div><div class="t" style="left:1103.16px;top:707px;font-size:18px;line-height:18px;letter-spacing:-0.4px;">Friends 3</div><div class="t" style="left:1240.73px;top:707px;font-size:18px;line-height:18px;letter-spacing:-0.56px;">00:22:00</div><svg style="left:1379.2px;top:699.4px" width="24" height="25" viewBox="0 0 24 25"><ellipse cx="12" cy="10.3" rx="12" ry="10" fill="#0d3d98"/><path d="M13.5 18.5C15.5 21.5 18 23.3 20.8 24.2 19.4 21.8 19 19.5 19.6 16.5Z" fill="#0d3d98"/><text x="12" y="16" font-size="16" font-weight="bold" fill="#fff" text-anchor="middle">i</text></svg><div class="t" style="left:1434.16px;top:707px;font-size:18px;line-height:18px;letter-spacing:-0.39px;">Friends</div><div class="t" style="left:1556.03px;top:707px;font-size:18px;line-height:18px;">3</div><div class="t" style="left:1668.43px;top:707px;font-size:18px;line-height:18px;">8</div><div class="t" style="left:1780.46px;top:707px;font-size:18px;line-height:18px;letter-spacing:-0.32px;">English</div><div class="t" style="left:1885.09px;top:707px;font-size:18px;line-height:18px;letter-spacing:-0.46px;">Spanish</div><div class="t" style="left:1986.25px;top:707px;font-size:18px;line-height:18px;letter-spacing:0.08px;">With script</div><svg style="left:2116.4px;top:699px" width="24.5" height="24.5" viewBox="0 0 24.5 24.5"><g transform="rotate(45 13.2 12)" fill="#92d050"><rect x="12.1" y="-5.2" width="2.2" height="6.5"/><rect x="6.7" y=".2" width="13" height="23.6" rx="6.5" ry="9"/><path d="M5.6 10.6 7.2 11.4H19.2L20.8 10.6V13.4L19.2 12.8H7.2L5.6 13.4Z"/><path d="M8.2 12.1H18.2" stroke="#6fa832" stroke-width=".8" stroke-dasharray="1.6 1" fill="none"/><rect x="12.1" y="23.2" width="2.2" height="7.4" rx="1"/></g></svg><div class="dm" style="left:2165.1px;top:707px"><span class="u m0">__</span><span class="m1">/</span><span class="u m2">__</span><span class="m3">/</span><span class="u m4">____</span> <span class="u m5">__</span><span class="m6">:</span><span class="u m7">__</span></div><div class="dm" style="left:2321.7px;top:707px"><span class="u m0">__</span><span class="m1">/</span><span class="u m2">__</span><span class="m3">/</span><span class="u m4">____</span> <span class="u m5">__</span><span class="m6">:</span><span class="u m7">__</span></div><div style="left:79px;top:0;width:1px;height:712px;background:#2b2929"></div><div style="left:212px;top:0;width:1px;height:712px;background:#2b2929"></div><div style="left:325px;top:0;width:1px;height:712px;background:#2b2929"></div><div style="left:398px;top:0;width:1px;height:712px;background:#2b2929"></div><div style="left:468px;top:0;width:1px;height:712px;background:#2b2929"></div><div style="left:531px;top:0;width:1px;height:712px;background:#2b2929"></div><div style="left:590px;top:0;width:1px;height:712px;background:#2b2929"></div><div style="left:675px;top:0;width:1px;height:712px;background:#2b2929"></div><div style="left:731px;top:0;width:1px;height:712px;background:#2b2929"></div><div style="left:879px;top:0;width:1px;height:712px;background:#2b2929"></div><div style="left:1092px;top:0;width:1px;height:712px;background:#2b2929"></div><div style="left:1229px;top:0;width:1px;height:712px;background:#2b2929"></div><div style="left:1358px;top:0;width:1px;height:712px;background:#2b2929"></div><div style="left:1423px;top:0;width:1px;height:712px;background:#2b2929"></div><div style="left:1544px;top:0;width:1px;height:712px;background:#2b2929"></div><div style="left:1656px;top:0;width:1px;height:712px;background:#2b2929"></div><div style="left:1768px;top:0;width:1px;height:712px;background:#2b2929"></div><div style="left:1873px;top:0;width:1px;height:712px;background:#2b2929"></div><div style="left:1974px;top:0;width:1px;height:712px;background:#2b2929"></div><div style="left:2103px;top:0;width:1px;height:712px;background:#2b2929"></div><div style="left:2153px;top:0;width:1px;height:712px;background:#2b2929"></div><div style="left:2310px;top:0;width:1px;height:712px;background:#2b2929"></div></div>
<div style="left:2518px;top:364px;width:25px;height:712px;background:#f1f1f1"></div>
<div style="left:2520px;top:389px;width:21px;height:511px;background:#c1c1c1"></div>
<svg style="left:2525px;top:374px" width="11" height="6" viewBox="0 0 11 6"><path d="M0 6H11L5.5 0Z" fill="#a3a3a3"/></svg>
<svg style="left:2525px;top:1060px" width="11" height="6" viewBox="0 0 11 6"><path d="M0 0H11L5.5 6Z" fill="#505050"/></svg>
<div style="left:9px;top:1076px;width:2509px;height:25px;background:#f1f1f1"></div>
<div style="left:34px;top:1078px;width:844px;height:21px;background:#c1c1c1"></div>
<svg style="left:18px;top:1083px" width="6" height="11" viewBox="0 0 6 11"><path d="M6 0V11L0 5.5Z" fill="#a3a3a3"/></svg>
<svg style="left:2503px;top:1083px" width="6" height="11" viewBox="0 0 6 11"><path d="M0 0V11L6 5.5Z" fill="#505050"/></svg>
<div style="left:2518px;top:1076px;width:25px;height:25px;background:#dcdcdc"></div>
<div style="left:2147px;top:350px;width:186px;height:627px;border:4px solid #ffff00;border-radius:3px"></div>
<div style="left:2256.4px;top:207px;width:46.4px;height:44.6px;border:4px solid #ffff00;border-radius:3px"></div>
<svg style="left:2272.9px;top:219.6px" width="19.4" height="19.4" viewBox="0 0 19.4 19.4"><path d="M3.9 4.8 7.3 8.2 13.4 1.6" fill="none" stroke="#fff" stroke-width="3.5"/><path d="M1.4 10.6 7.3 16.5 18 5.8" fill="none" stroke="#fff" stroke-width="3.5"/></svg>
<div style="left:2272.7px;top:166.5px;width:31px;height:31px;border-radius:50%;background:#d8ff00"></div>
<div class="t" style="left:2282.75px;top:172px;font-size:22px;line-height:22px;color:#000;-webkit-text-stroke:.7px #000">1</div>
<div style="left:2282.6px;top:187.2px;width:4.2px;height:4px;background:#d8ff00"></div>
<div style="left:2291.2px;top:187.2px;width:4.4px;height:4px;background:#d8ff00"></div>
<div style="left:2224.7px;top:982.5px;width:31px;height:31px;border-radius:50%;background:#00f020"></div>
<div class="t" style="left:2233.3px;top:988px;font-size:22px;line-height:22px;color:#000;-webkit-text-stroke:.7px #000">2</div>
<div class="hl" style="left:9px;top:1101px;width:2535px;height:55px;background-color:#292625"></div>
<svg style="left:18px;top:1110px" width="24" height="24" viewBox="0 0 24 24"><circle cx="12" cy="12" r="12" fill="#7fb03c"/><path d="M12 5V19M5 12H19" stroke="#fff" stroke-width="3.4"/></svg>
<div class="t" style="left:43.1px;top:1119px;font-size:18px;line-height:18px;letter-spacing:0.03px;">Add new order</div>
<svg style="left:170.2px;top:1110px" width="24" height="24" viewBox="0 0 24 24"><circle cx="12" cy="12" r="12" fill="#7fb03c"/><path d="M12 5V19M5 12H19" stroke="#fff" stroke-width="3.4"/></svg>
<div class="t" style="left:194.09px;top:1119px;font-size:18px;line-height:18px;letter-spacing:-0.02px;">Order wizard</div>
<div class="t" style="left:317.32px;top:1119px;font-size:18px;line-height:18px;">|</div>
<svg style="left:346.2px;top:1110px" width="24" height="24" viewBox="0 0 24 24"><rect x="0" y="0" width="23" height="3" rx="1" fill="#2bbde6"/><path d="M.6 3.6H22.4L14.6 12.4V19.4H8.4V12.4Z" fill="#8b8c90"/><rect x="8.4" y="19.4" width="6" height="4.2" rx=".8" fill="#fdc01e"/><circle cx="18.6" cy="18.8" r="4.9" fill="#7fb03c"/><path d="M18.6 15.8V21.8M15.6 18.8H21.6" stroke="#fff" stroke-width="1.5"/></svg>
<div class="t" style="left:370.06px;top:1119px;font-size:18px;line-height:18px;letter-spacing:-0.13px;">New range</div>
<svg style="left:466.2px;top:1110px" width="24" height="24" viewBox="0 0 24 24"><rect x="0" y="0" width="23" height="3" rx="1" fill="#2bbde6"/><path d="M.6 3.6H22.4L14.6 12.4V19.4H8.4V12.4Z" fill="#8b8c90"/><rect x="8.4" y="19.4" width="6" height="4.2" rx=".8" fill="#fdc01e"/><path d="M12.6 22.6 14 18.6 21 11.6 23.6 14.2 16.6 21.2Z" fill="#f0852d"/><path d="M12.6 22.6 14 18.6 16.6 21.2Z" fill="#f3d2a0"/></svg>
<div class="t" style="left:490.4px;top:1119px;font-size:18px;line-height:18px;letter-spacing:-0.28px;">Change range</div>
<svg style="left:611.2px;top:1110px" width="24" height="24" viewBox="0 0 24 24"><rect x="0" y="0" width="23" height="3" rx="1" fill="#2bbde6"/><path d="M.6 3.6H22.4L14.6 12.4V19.4H8.4V12.4Z" fill="#8b8c90"/><rect x="8.4" y="19.4" width="6" height="4.2" rx=".8" fill="#fdc01e"/><path d="M14.6 15.4 17 13.6 19 16.2 21.4 13.6 23.6 15.6 21 18.4 23.6 21 21.4 23.4 19 20.6 16.8 23.4 14.4 21.4 16.8 18.4Z" fill="#9b0000"/></svg>
<div class="t" style="left:635.2px;top:1119px;font-size:18px;line-height:18px;letter-spacing:-0.38px;">Clear range</div>
<svg style="left:735.2px;top:1110px" width="24" height="24" viewBox="0 0 24 24"><rect x="0" y="0" width="23" height="3" rx="1" fill="#2bbde6"/><path d="M.6 3.6H22.4L14.6 12.4V19.4H8.4V12.4Z" fill="#8b8c90"/><rect x="8.4" y="19.4" width="6" height="4.2" rx=".8" fill="#fdc01e"/><circle cx="18.8" cy="18.8" r="3.6" fill="none" stroke="#9a9a9a" stroke-width="2.2" stroke-dasharray="1.6 1.2"/><circle cx="18.8" cy="18.8" r="2.4" fill="none" stroke="#9a9a9a" stroke-width="1.1"/></svg>
<div class="t" style="left:759.26px;top:1119px;font-size:18px;line-height:18px;letter-spacing:-0.34px;">Preset range</div>
<div style="left:865px;top:1107.5px;width:139.8px;height:39.2px;background:#ffa200;border:1.5px solid #e0471c;border-radius:8px"></div>
<svg style="left:876.4px;top:1110.6px" width="24.4" height="24.4" viewBox="0 0 24 24"><rect x="10.6" y=".4" width="2.8" height="4.6" rx=".6" fill="#8a6d4a" transform="rotate(0 12 12)"/><rect x="10.6" y=".4" width="2.8" height="4.6" rx=".6" fill="#8a6d4a" transform="rotate(36 12 12)"/><rect x="10.6" y=".4" width="2.8" height="4.6" rx=".6" fill="#8a6d4a" transform="rotate(72 12 12)"/><rect x="10.6" y=".4" width="2.8" height="4.6" rx=".6" fill="#8a6d4a" transform="rotate(108 12 12)"/><rect x="10.6" y=".4" width="2.8" height="4.6" rx=".6" fill="#8a6d4a" transform="rotate(144 12 12)"/><rect x="10.6" y=".4" width="2.8" height="4.6" rx=".6" fill="#8a6d4a" transform="rotate(180 12 12)"/><rect x="10.6" y=".4" width="2.8" height="4.6" rx=".6" fill="#8a6d4a" transform="rotate(216 12 12)"/><rect x="10.6" y=".4" width="2.8" height="4.6" rx=".6" fill="#8a6d4a" transform="rotate(252 12 12)"/><rect x="10.6" y=".4" width="2.8" height="4.6" rx=".6" fill="#8a6d4a" transform="rotate(288 12 12)"/><rect x="10.6" y=".4" width="2.8" height="4.6" rx=".6" fill="#8a6d4a" transform="rotate(324 12 12)"/><circle cx="12" cy="12" r="7.4" fill="none" stroke="#8a6d4a" stroke-width="2.6"/><circle cx="12" cy="12" r="2.6" fill="none" stroke="#8a6d4a" stroke-width="1.4"/><path d="M12 4.6V9.4M12 14.6V19.4M4.6 12H9.4M14.6 12H19.4" stroke="#8a6d4a" stroke-width="1.3"/></svg>
<div class="t" style="left:902.18px;top:1120px;font-size:18px;line-height:18px;letter-spacing:-0.19px;color:#000;font-weight:bold;">Grid layout</div>
<svg style="left:1014px;top:1110px" width="24" height="24" viewBox="0 0 24 24"><circle cx="12" cy="12" r="12" fill="#7fb03c"/><path d="M8.4 5.6V18.4L19.4 12Z" fill="#fff"/></svg>
<div class="t" style="left:1038.4px;top:1119px;font-size:18px;line-height:18px;letter-spacing:-0.18px;">Generate export</div>
<div class="t" style="left:1187.52px;top:1119px;font-size:18px;line-height:18px;">|</div>
<div class="t" style="left:1227.12px;top:1119px;font-size:18px;line-height:18px;">|</div>
<svg style="left:1254.6px;top:1109.7px" width="24.6" height="24.6" viewBox="0 0 24.5 24.5"><g transform="rotate(45 13.2 12)" fill="#92d050"><rect x="12.1" y="-5.2" width="2.2" height="6.5"/><rect x="6.7" y=".2" width="13" height="23.6" rx="6.5" ry="9"/><path d="M5.6 10.6 7.2 11.4H19.2L20.8 10.6V13.4L19.2 12.8H7.2L5.6 13.4Z"/><path d="M8.2 12.1H18.2" stroke="#6fa832" stroke-width=".8" stroke-dasharray="1.6 1" fill="none"/><rect x="12.1" y="23.2" width="2.2" height="7.4" rx="1"/></g></svg>
<div class="t" style="left:1279.6px;top:1119px;font-size:18px;line-height:18px;letter-spacing:-0.14px;">Connect all</div>
<svg style="left:1379.6px;top:1110px" width="19" height="24" viewBox="0 0 18 24"><path d="M9 3.6H13V14.6L16.6 18.4V23.4H1Z" fill="#f2cc5e"/><path d="M.6 3.6 10.6 .4V21.4L.6 23.2Z" fill="#f5d673"/><path d="M10.6 .4 11.6 1V21.6L10.6 21.4Z" fill="#c99e2e"/><path d="M.6 23.2 10.6 21.4 16.6 23.4H1Z" fill="#e0b440"/></svg>
<div class="t" style="left:1401.55px;top:1119px;font-size:18px;line-height:18px;letter-spacing:0.05px;">Upload to Orders</div>
<svg style="left:1550.4px;top:1110px" width="19" height="24" viewBox="0 0 18 24"><path d="M9 3.6H13V14.6L16.6 18.4V23.4H1Z" fill="#f2cc5e"/><path d="M.6 3.6 10.6 .4V21.4L.6 23.2Z" fill="#f5d673"/><path d="M10.6 .4 11.6 1V21.6L10.6 21.4Z" fill="#c99e2e"/><path d="M.6 23.2 10.6 21.4 16.6 23.4H1Z" fill="#e0b440"/></svg>
<div class="t" style="left:1573.15px;top:1119px;font-size:18px;line-height:18px;letter-spacing:0.05px;">Upload streaming folders</div>
<svg style="left:1783.6px;top:1112.6px" width="24.5" height="22" viewBox="0 0 24 22"><rect x=".6" y=".8" width="22" height="16.4" fill="#fff" stroke="#111" stroke-width="1.1"/><path d="M.8 1 11.6 10.4 22.4 1M.8 17 8.6 8.6M22.4 17 14.6 8.6" fill="none" stroke="#111" stroke-width="1.1"/><circle cx="16.4" cy="15.2" r="6.4" fill="#6cc024"/><path d="M12.8 13.8H16.6V11.4L20.6 15.2 16.6 19V16.6H12.8Z" fill="#fff"/></svg>
<div class="t" style="left:1809.5px;top:1119px;font-size:18px;line-height:18px;letter-spacing:0px;">Assignment notifications</div>
<svg style="left:2016.2px;top:1110.6px" width="18" height="23" viewBox="0 0 18 23"><rect x=".4" y=".4" width="17.2" height="22.2" rx="1.4" fill="#1c1c1c"/><rect x="2" y="2.4" width="14" height="4.6" fill="#9b9b9b"/><g fill="#eee"><rect x="2" y="9" width="3.6" height="3"/><rect x="7" y="9" width="3.6" height="3"/><rect x="2" y="13.4" width="3.6" height="3"/><rect x="7" y="13.4" width="3.6" height="3"/><rect x="2" y="17.8" width="3.6" height="3"/><rect x="7" y="17.8" width="3.6" height="3"/></g><rect x="12.2" y="9" width="3.8" height="3" fill="#eee"/><rect x="12.2" y="13.4" width="3.8" height="7.4" fill="#2bbde6"/></svg>
<div class="t" style="left:2037.26px;top:1119px;font-size:18px;line-height:18px;letter-spacing:-0.5px;">Recalculate</div>
<div style="left:9px;top:1155px;width:2535px;height:1px;background:#2e2d2c"></div>
<div class="hl" style="left:9px;top:1156px;width:2535px;height:52px;background-color:#292625;border-bottom:1px solid #484848"></div>
<div style="left:8px;top:1101px;width:1px;height:107px;background:#4b4a4a"></div>
<div style="left:15.4px;top:1163.2px;width:37.8px;height:37.6px;border-radius:50%;background:#282626"></div>
<svg style="left:27.6px;top:1175px" width="13" height="14" viewBox="0 0 13 14"><rect x="0" y="0" width="3" height="14" fill="#a8a8a8"/><path d="M13 0V14L3.4 7Z" fill="#a8a8a8"/></svg>
<div style="left:57.8px;top:1163.2px;width:38px;height:37.6px;border-radius:50%;background:#282626"></div>
<svg style="left:72px;top:1175px" width="10" height="14" viewBox="0 0 10 14"><path d="M10 0V14L0 7.0Z" fill="#a8a8a8"/></svg>
<div class="hl" style="left:98.9px;top:1163.2px;width:38.2px;height:37.8px;border-radius:50%;background-color:#0066cc"></div>
<div class="t" style="left:113.85px;top:1174px;font-size:18px;line-height:18px;">1</div>
<div class="t" style="left:154px;top:1174px;font-size:18px;line-height:18px;">2</div>
<div class="t" style="left:195.82px;top:1174px;font-size:18px;line-height:18px;">3</div>
<div class="t" style="left:237.29px;top:1174px;font-size:18px;line-height:18px;">4</div>
<div class="t" style="left:279.26px;top:1174px;font-size:18px;line-height:18px;letter-spacing:-1.07px;">Page</div>
<div style="left:327.9px;top:1163.2px;width:52px;height:37px;background:#fff;border-radius:6px"></div>
<div class="t" style="left:339.65px;top:1174px;font-size:18px;line-height:18px;color:#000;">1</div>
<div class="t" style="left:390.58px;top:1174px;font-size:18px;line-height:18px;letter-spacing:-0.03px;">of 4</div>
<div style="left:439.1px;top:1163.2px;width:38.1px;height:37.6px;border-radius:50%;background:#282626"></div>
<svg style="left:454.4px;top:1175px" width="10" height="14" viewBox="0 0 10 14"><path d="M0 0V14L10 7.0Z" fill="#fff"/></svg>
<div style="left:481.4px;top:1163.2px;width:38.2px;height:37.6px;border-radius:50%;background:#282626"></div>
<svg style="left:493.6px;top:1175px" width="13" height="14" viewBox="0 0 13 14"><rect x="10" y="0" width="3" height="14" fill="#fff"/><path d="M0 0V14L9.6 7Z" fill="#fff"/></svg>
<div class="btn hl" style="left:539.9px;top:1163.6px;width:87.8px;height:36.6px;background-size:100% 72px"></div>
<div style="left:539.9px;top:1163.6px;width:51.4px;height:36.6px;background:#fff;border-radius:6px 0 0 6px"></div>
<div class="t" style="left:549.6px;top:1174px;font-size:18px;line-height:18px;letter-spacing:-1.21px;color:#000;">20</div>
<svg style="left:602.4px;top:1178.6px" width="12" height="9.4" viewBox="0 0 12 9.4"><path d="M0 0H12L6.0 9.4Z" fill="#fff"/></svg>
<div class="t" style="left:636.53px;top:1174px;font-size:18px;line-height:18px;letter-spacing:0.04px;">items per page</div>
<div class="t" style="left:2340.15px;top:1174px;font-size:18px;line-height:18px;letter-spacing:0px;">1 - 20 of 66 items</div>
<div style="left:2498.4px;top:1163.2px;width:38.2px;height:37.6px;border-radius:50%;background:#282626"></div>
<svg style="left:2506.6px;top:1170.4px" width="22.6" height="22.6" viewBox="0 0 22 22"><path d="M16.6 5.6A8.2 8.2 0 1 0 19.2 11" fill="none" stroke="#fff" stroke-width="2.6"/><path d="M11.6 .6 18.6 5.4 12.4 9.6Z" fill="#fff"/></svg>
<div style="left:16.6px;top:1238px;width:168.6px;height:58.4px;border:1px solid #2d2b2b;border-radius:7px"></div>
<div class="btn hl" style="left:21.4px;top:1242.6px;width:160px;height:50px;background-size:100% 72px;"></div>
<svg style="left:33.3px;top:1248.4px" width="37" height="37" viewBox="0 0 37 37"><circle cx="4.2" cy="4.6" r="4" fill="#7fb03c"/><path d="M4.2 2.2V7M1.8 4.6H6.6" stroke="#fff" stroke-width="1.3"/><path d="M27.6 2.4 30 .6 32 3.2 34.4 .6 36.6 2.6 34 5.4 36.6 8 34.4 10.4 32 7.6 29.8 10.4 27.4 8.4 29.8 5.4Z" fill="#9b0000"/><path d="M8 8.6 12.4 13" stroke="#f0b41c" stroke-width="2"/><path d="M7.4 7.6 11 8.6 8.6 11.2Z" fill="#f0b41c"/><path d="M13.2 13.8 9.8 12.6 12 10.4Z" fill="#f0b41c"/><path d="M28.6 8.6 24.2 13" stroke="#2bbde6" stroke-width="2"/><path d="M29.4 7.6 25.8 8.6 28.2 11.2Z" fill="#2bbde6"/><path d="M23.4 13.8 26.8 12.6 24.6 10.4Z" fill="#2bbde6"/><path d="M8.4 28.6 12.8 24.2" stroke="#2bbde6" stroke-width="2"/><path d="M7.6 29.6 8.6 25.8 11.2 28.2Z" fill="#2bbde6"/><path d="M13.6 23.4 12.6 26.8 10.4 24.6Z" fill="#2bbde6"/><path d="M24.2 24.2 28.6 28.6" stroke="#f0b41c" stroke-width="2"/><path d="M29.4 29.6 25.8 28.6 28.2 26Z" fill="#f0b41c"/><path d="M23.4 23.4 26.8 24.6 24.6 26.8Z" fill="#f0b41c"/><path d="M.6 27.4H4.8L7.6 30V36.4H.6Z" fill="#fff"/><path d="M2.2 25.6H6.4L8.4 27.6" fill="none" stroke="#fff" stroke-width="1"/><path d="M24.6 36.4 26 32.2 33.6 25.4 36.4 28.4 29 35Z" fill="#f0852d"/><path d="M24.6 36.4 26 32.2 29 35Z" fill="#f3d2a0"/><rect x="17" y="10.6" width="2.6" height="4" rx=".5" fill="#9a9a9a" transform="rotate(0 18.3 18.4)"/><rect x="17" y="10.6" width="2.6" height="4" rx=".5" fill="#9a9a9a" transform="rotate(36 18.3 18.4)"/><rect x="17" y="10.6" width="2.6" height="4" rx=".5" fill="#9a9a9a" transform="rotate(72 18.3 18.4)"/><rect x="17" y="10.6" width="2.6" height="4" rx=".5" fill="#9a9a9a" transform="rotate(108 18.3 18.4)"/><rect x="17" y="10.6" width="2.6" height="4" rx=".5" fill="#9a9a9a" transform="rotate(144 18.3 18.4)"/><rect x="17" y="10.6" width="2.6" height="4" rx=".5" fill="#9a9a9a" transform="rotate(180 18.3 18.4)"/><rect x="17" y="10.6" width="2.6" height="4" rx=".5" fill="#9a9a9a" transform="rotate(216 18.3 18.4)"/><rect x="17" y="10.6" width="2.6" height="4" rx=".5" fill="#9a9a9a" transform="rotate(252 18.3 18.4)"/><rect x="17" y="10.6" width="2.6" height="4" rx=".5" fill="#9a9a9a" transform="rotate(288 18.3 18.4)"/><rect x="17" y="10.6" width="2.6" height="4" rx=".5" fill="#9a9a9a" transform="rotate(324 18.3 18.4)"/><circle cx="18.3" cy="18.4" r="5.4" fill="none" stroke="#9a9a9a" stroke-width="2.2"/><circle cx="18.3" cy="18.4" r="2" fill="none" stroke="#9a9a9a" stroke-width="1.1"/></svg>
<div class="t" style="left:72.66px;top:1259px;font-size:18px;line-height:18px;letter-spacing:-0.14px;">Bulk actions</div>
<div class="t" style="left:191.89px;top:1259px;font-size:18px;line-height:18px;letter-spacing:-0.52px;">Status</div>
<div class="btn hl" style="left:277.8px;top:1242.6px;width:267.8px;height:50px;background-size:100% 72px;"></div>
<div style="left:277.8px;top:1243px;width:218.9px;height:48.2px;background:#fff;border-radius:6px 0 0 6px"></div>
<div class="t" style="left:291.62px;top:1257px;font-size:24px;line-height:24px;letter-spacing:-0.59px;color:#000;">Select status...</div>
<svg style="left:514.55px;top:1266.4px" width="13.2" height="10.4" viewBox="0 0 13.2 10.4"><path d="M0 0H13.2L6.6 10.4Z" fill="#fff"/></svg>
<div class="btn hl" style="left:552.9px;top:1242.6px;width:125.9px;height:50px;background-size:100% 72px;"></div>
<div class="t" style="left:565.89px;top:1259px;font-size:18px;line-height:18px;letter-spacing:-0.27px;color:#8d8d8d;">Set all status</div>
<div class="t" style="left:693.46px;top:1259px;font-size:18px;line-height:18px;letter-spacing:-0.65px;">Flag</div>
<div class="btn hl" style="left:764.1px;top:1242.6px;width:237.3px;height:50px;background-size:100% 72px;"></div>
<div style="left:764.1px;top:1243px;width:188.7px;height:48.2px;background:#fff;border-radius:6px 0 0 6px"></div>
<div class="t" style="left:777.82px;top:1257px;font-size:24px;line-height:24px;letter-spacing:-0.51px;color:#000;">Select flag...</div>
<svg style="left:970.5px;top:1266.4px" width="13.2" height="10.4" viewBox="0 0 13.2 10.4"><path d="M0 0H13.2L6.6 10.4Z" fill="#fff"/></svg>
<div class="btn hl" style="left:1009px;top:1242.6px;width:116.3px;height:50px;background-size:100% 72px;"></div>
<div class="t" style="left:1021.69px;top:1259px;font-size:18px;line-height:18px;letter-spacing:-0.21px;color:#8d8d8d;">Set all flags</div>
<div class="t" style="left:1159.35px;top:1263px;font-size:18px;line-height:18px;letter-spacing:0.07px;">Update date</div>
<div class="btn hl" style="left:1304.8px;top:1242.6px;width:298.2px;height:50px;background-size:100% 72px;"></div>
<div style="left:1304.8px;top:1243px;width:199.4px;height:48.2px;background:#fff;border-radius:6px 0 0 6px"></div>
<div style="left:1504.2px;top:1243px;width:1px;height:48.2px;background:#2b2827"></div>
<div style="left:1505.2px;top:1243px;width:1px;height:48.2px;background:#f4f4f4"></div>
<svg style="left:1518.6px;top:1258.6px" width="22.4" height="22.4" viewBox="0 0 22 22"><rect x=".9" y="2.5" width="20.2" height="18.6" fill="none" stroke="#fff" stroke-width="1.7"/><rect x=".9" y="8.4" width="20.2" height="1.6" fill="#fff"/><circle cx="6.2" cy="2.4" r="1.9" fill="#fff"/><circle cx="15.8" cy="2.4" r="1.9" fill="#fff"/><rect x="12.2" y="13.2" width="6.2" height="5.6" fill="#fff"/></svg>
<svg style="left:1566.6px;top:1259.6px" width="22.4" height="22.4" viewBox="0 0 22 22"><circle cx="11" cy="11" r="10" fill="none" stroke="#fff" stroke-width="1.7"/><path d="M10.4 4.6V12.2H17.2" fill="none" stroke="#fff" stroke-width="1.7"/></svg>
<div class="btn hl" style="left:1604.6px;top:1241.2px;width:46.8px;height:52.4px;background-size:100% 72px;"></div>
<svg style="left:1615.2px;top:1254.6px" width="25" height="25" viewBox="0 0 24 24"><rect x="10.6" y=".4" width="2.8" height="4.6" rx=".6" fill="#5a5a5a" transform="rotate(0 12 12)"/><rect x="10.6" y=".4" width="2.8" height="4.6" rx=".6" fill="#5a5a5a" transform="rotate(36 12 12)"/><rect x="10.6" y=".4" width="2.8" height="4.6" rx=".6" fill="#5a5a5a" transform="rotate(72 12 12)"/><rect x="10.6" y=".4" width="2.8" height="4.6" rx=".6" fill="#5a5a5a" transform="rotate(108 12 12)"/><rect x="10.6" y=".4" width="2.8" height="4.6" rx=".6" fill="#5a5a5a" transform="rotate(144 12 12)"/><rect x="10.6" y=".4" width="2.8" height="4.6" rx=".6" fill="#5a5a5a" transform="rotate(180 12 12)"/><rect x="10.6" y=".4" width="2.8" height="4.6" rx=".6" fill="#5a5a5a" transform="rotate(216 12 12)"/><rect x="10.6" y=".4" width="2.8" height="4.6" rx=".6" fill="#5a5a5a" transform="rotate(252 12 12)"/><rect x="10.6" y=".4" width="2.8" height="4.6" rx=".6" fill="#5a5a5a" transform="rotate(288 12 12)"/><rect x="10.6" y=".4" width="2.8" height="4.6" rx=".6" fill="#5a5a5a" transform="rotate(324 12 12)"/><circle cx="12" cy="12" r="7.4" fill="none" stroke="#5a5a5a" stroke-width="2.6"/><circle cx="12" cy="12" r="2.6" fill="none" stroke="#5a5a5a" stroke-width="1.4"/><path d="M12 4.6V9.4M12 14.6V19.4M4.6 12H9.4M14.6 12H19.4" stroke="#5a5a5a" stroke-width="1.3"/></svg>
<div class="t" style="left:1681.94px;top:1237px;font-size:18px;line-height:18px;letter-spacing:-0.19px;">Task supply dates sync method</div>
<div class="btn hl" style="left:1686.8px;top:1261.6px;width:49.8px;height:50.4px;background-size:100% 72px;"></div>
<svg style="left:1700.4px;top:1275.2px" width="24" height="23" viewBox="0 0 24 23"><rect x="1" y="3" width="21" height="19" rx="2" fill="#f3f3f3"/><path d="M1 8V5A2 2 0 0 1 3 3H20A2 2 0 0 1 22 5V8Z" fill="#d83a3a"/><rect x="4.6" y=".6" width="2" height="4.4" rx=".8" fill="#b8b8b8"/><rect x="16.4" y=".6" width="2" height="4.4" rx=".8" fill="#b8b8b8"/><path d="M3.6 19.6H5.6M7.6 19.6H9.6M11.6 19.6H13.6M15.6 19.6H17.6" stroke="#a8a8a8" stroke-width="1.6"/><path d="M11 9.6 5 13.6 11 17.6V15.2C14 15 16 15.8 18 18 17.6 14.4 15 12.2 11 12Z" fill="#2a82c9"/></svg>
<div class="hl" style="left:1742.8px;top:1260.7px;width:51.2px;height:51.2px;border-radius:6px;background-color:#0066cc"></div>
<svg style="left:1756.4px;top:1275.2px" width="24" height="23" viewBox="0 0 24 23"><rect x="1" y="3" width="21" height="19" rx="2" fill="#f3f3f3"/><path d="M1 8V5A2 2 0 0 1 3 3H20A2 2 0 0 1 22 5V8Z" fill="#d83a3a"/><rect x="4.6" y=".6" width="2" height="4.4" rx=".8" fill="#b8b8b8"/><rect x="16.4" y=".6" width="2" height="4.4" rx=".8" fill="#b8b8b8"/><path d="M3.6 19.6H5.6M7.6 19.6H9.6M11.6 19.6H13.6M15.6 19.6H17.6" stroke="#a8a8a8" stroke-width="1.6"/><path d="M9.4 11.4 5 14 9.4 16.6V14.9C11 14.7 12 15 13 16 12.6 14 11.4 13 9.4 13Z" fill="#2a82c9"/><circle cx="18" cy="12.6" r="3" fill="#f2a654"/><path d="M12.6 22C12.6 18.6 14.6 16.8 18 16.8 21.4 16.8 23.4 18.6 23.4 22Z" fill="#1583c4"/><path d="M15 11.6C15 9 21 9 21 11.6 20 10.6 16 10.6 15 11.6Z" fill="#222"/></svg>
<div class="t" style="left:1937.36px;top:1260px;font-size:18px;line-height:18px;letter-spacing:-0.02px;">Edit mode:</div>
<div class="t" style="left:2027.43px;top:1260px;font-size:18px;line-height:18px;letter-spacing:0.07px;font-weight:bold;">multiple cell</div>
<div class="btn hl" style="left:2138.2px;top:1241.8px;width:50.2px;height:52.2px;background-size:100% 72px;"></div>
<svg style="left:2151px;top:1259.4px" width="24" height="24" viewBox="0 0 24 24"><rect x="0.4" y="0.4" width="7.2" height="7.2" fill="#fff"/><rect x="8.4" y="0.4" width="7.2" height="7.2" fill="#fff"/><rect x="16.4" y="0.4" width="7.2" height="7.2" fill="#fff"/><rect x="0.4" y="8.4" width="7.2" height="7.2" fill="#fff"/><rect x="8.4" y="8.4" width="7.2" height="7.2" fill="#fff"/><rect x="16.4" y="8.4" width="7.2" height="7.2" fill="#fff"/><rect x="0.4" y="16.4" width="7.2" height="7.2" fill="#fff"/><rect x="8.4" y="16.4" width="7.2" height="7.2" fill="#fff"/><rect x="16.4" y="16.4" width="7.2" height="7.2" fill="#fff"/></svg>
<div class="btn hl" style="left:2195px;top:1241.8px;width:50.2px;height:52.2px;background-size:100% 72px;"></div>
<svg style="left:2208.6px;top:1259.4px" width="24" height="24" viewBox="0 0 24 24"><rect x="0.4" y="0.4" width="7.2" height="7.2" fill="#e4e4e4"/><rect x="8.4" y="0.4" width="7.2" height="7.2" fill="#e4e4e4"/><rect x="16.4" y="0.4" width="7.2" height="7.2" fill="#e4e4e4"/><rect x="0.4" y="8.4" width="7.2" height="7.2" fill="#e4e4e4"/><rect x="8.4" y="8.4" width="7.2" height="7.2" fill="#6fb7f5"/><rect x="16.4" y="8.4" width="7.2" height="7.2" fill="#e4e4e4"/><rect x="0.4" y="16.4" width="7.2" height="7.2" fill="#e4e4e4"/><rect x="8.4" y="16.4" width="7.2" height="7.2" fill="#e4e4e4"/><rect x="16.4" y="16.4" width="7.2" height="7.2" fill="#e4e4e4"/><path d="M11.6 9.6 11.6 21 14.4 18.6 16.6 23.2 18.6 22.2 16.4 17.8 20 17.6Z" fill="#fff" stroke="#222" stroke-width="1"/></svg>
<div class="btn hl" style="left:2252px;top:1241.8px;width:49.4px;height:52.2px;background-size:100% 72px;"></div>
<svg style="left:2265.6px;top:1259.4px" width="24" height="24" viewBox="0 0 24 24"><rect x="0.4" y="0.4" width="7.2" height="7.2" fill="#e4e4e4"/><rect x="8.4" y="0.4" width="7.2" height="7.2" fill="#e4e4e4"/><rect x="16.4" y="0.4" width="7.2" height="7.2" fill="#e4e4e4"/><rect x="0.4" y="8.4" width="7.2" height="7.2" fill="#e4e4e4"/><rect x="8.4" y="8.4" width="7.2" height="7.2" fill="#6fb7f5"/><rect x="16.4" y="8.4" width="7.2" height="7.2" fill="#e4e4e4"/><rect x="0.4" y="16.4" width="7.2" height="7.2" fill="#e4e4e4"/><rect x="8.4" y="16.4" width="7.2" height="7.2" fill="#e4e4e4"/><rect x="16.4" y="16.4" width="7.2" height="7.2" fill="#e4e4e4"/></svg>
<div class="btn hl" style="left:2376.6px;top:1241.8px;width:51.6px;height:52.2px;background-size:100% 72px;"></div>
<svg style="left:2377.8px;top:1258.8px" width="24" height="24" viewBox="0 0 24 24"><g transform="rotate(-45 12 12)"><rect x="7.8" y="-3.8" width="8.4" height="6" rx="2.4" fill="#ff9d45"/><rect x="7.8" y=".6" width="8.4" height="3.8" fill="#dcdcdc"/><rect x="7.8" y="4.4" width="8.4" height="18.2" fill="#ff9a3a"/><rect x="7.8" y="4.4" width="2.8" height="18.2" fill="#ff7410"/><rect x="13.6" y="4.4" width="2.6" height="15" fill="#efc400"/><path d="M7.8 22.6H16.2L13 27.6H11Z" fill="#ff8a2a"/><path d="M11 27.6H13L12 28.8Z" fill="#8a8a8a"/></g></svg>
<div class="t" style="left:2402.95px;top:1259px;font-size:18px;line-height:18px;letter-spacing:-1.56px;">13</div>
<div class="btn hl" style="left:2435.4px;top:1241.8px;width:56.2px;height:52.2px;background-size:100% 72px;"></div>
<svg style="left:2451px;top:1259.4px" width="24" height="24" viewBox="0 0 24 24"><path d="M5 .3 12 7.3 19 .3 23.7 5 16.7 12 23.7 19 19 23.7 12 16.7 5 23.7 .3 19 7.3 12 .3 5Z" fill="#9a0000"/><path d="M5 .3 12 7.3 19 .3 23.7 5 18.8 9.9C14.4 9.2 10.4 10.4 7.4 11.9L.3 5Z" fill="#a81c1c"/></svg>
<div class="hl" style="left:2309px;top:1241px;width:57px;height:53px;border-radius:7px;background-color:#0066cc"></div>
<svg style="left:2321px;top:1255px" width="32" height="32" viewBox="0 0 32 32"><path d="M5.8 7.5 11.9 14.1 23.9 1.8" fill="none" stroke="#fdc01e" stroke-width="5.3"/><path d="M1.9 18 11.9 28.2 30 9.8" fill="none" stroke="#2bbde6" stroke-width="5.3"/></svg>
<div style="left:2296.5px;top:1233px;width:79.2px;height:70.8px;border:5px solid #00fa00;border-radius:4px"></div>
<div style="left:2324.7px;top:1182.9px;width:31px;height:31px;border-radius:50%;background:#00f020"></div>
<div class="t" style="left:2333.58px;top:1188px;font-size:22px;line-height:22px;color:#000;-webkit-text-stroke:.7px #000">3</div>
<div class="t" style="left:1091.5px;top:1352px;font-size:15px;line-height:15px;letter-spacing:-.02px">Copyright © 2012 <i style="letter-spacing:-2.6px;margin-left:1.4px;font-weight:bold"><span style="color:#8b8c90">O</span><span style="color:#fdc01e">O</span><span style="color:#2bbde6">O</span></i><b style="color:#8b8c90;margin-left:1.6px;letter-spacing:-.2px">NA.NET</b> ltd. All rights reserved.</div>
<div style="left:2475.4px;top:1345px;width:78.2px;height:22px;background:#7e0000;border-radius:8px"></div>
<div class="t" style="left:2478.68px;top:1350px;font-size:14px;line-height:14px;letter-spacing:-0.57px;">Zoom 150%</div>
</body></html>
